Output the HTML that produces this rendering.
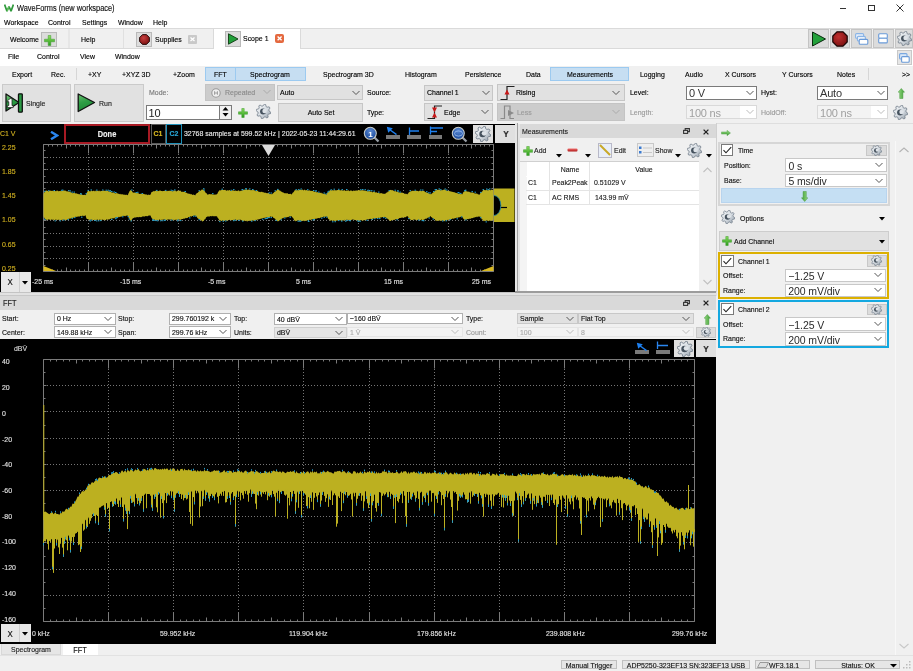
<!DOCTYPE html>
<html><head><meta charset="utf-8"><style>
html,body{margin:0;padding:0;}
body{width:913px;height:671px;position:relative;overflow:hidden;background:#f0f0f0;font-family:"Liberation Sans", sans-serif;}
body>div,body>span,body>svg{position:absolute;}
span{white-space:pre;-webkit-text-stroke:0.15px currentColor;}
body{will-change:transform;}
</style></head><body>
<div style="left:0px;top:0px;width:913px;height:28px;background:#fff;"></div>
<svg style="left:4px;top:4px;" width="10" height="8" viewBox="0 0 10 8"><polyline points="0.6,0.6 3,7.2 5,2.5 7,7.2 9.4,0.6" fill="none" stroke="#2f9a3c" stroke-width="1.7" stroke-linejoin="bevel"/><polyline points="3,7.2 5,2.5" stroke="#7ccf6a" stroke-width="0.8"/></svg>
<span style="left:17px;top:1.7000000000000002px;line-height:12px;font-size:8.5px;color:#111;letter-spacing:0px;transform:scaleX(0.87);transform-origin:0 50%;">WaveForms (new workspace)</span>
<div style="left:840px;top:8px;width:6px;height:1px;background:#333;"></div>
<div style="left:868px;top:4.5px;width:7px;height:6.5px;box-sizing:border-box;border:1px solid #333;"></div>
<svg style="left:896px;top:4px;" width="9" height="8" viewBox="0 0 9 8"><path d="M0.5,0.5 L7.5,7.5 M7.5,0.5 L0.5,7.5" stroke="#333" stroke-width="1"/></svg>
<span style="left:3.5px;top:16.8px;line-height:12px;font-size:8px;color:#000;letter-spacing:0px;transform:scaleX(0.87);transform-origin:0 50%;">Workspace</span>
<span style="left:47.5px;top:16.8px;line-height:12px;font-size:8px;color:#000;letter-spacing:0px;transform:scaleX(0.87);transform-origin:0 50%;">Control</span>
<span style="left:81.5px;top:16.8px;line-height:12px;font-size:8px;color:#000;letter-spacing:0px;transform:scaleX(0.87);transform-origin:0 50%;">Settings</span>
<span style="left:117.5px;top:16.8px;line-height:12px;font-size:8px;color:#000;letter-spacing:0px;transform:scaleX(0.87);transform-origin:0 50%;">Window</span>
<span style="left:152.5px;top:16.8px;line-height:12px;font-size:8px;color:#000;letter-spacing:0px;transform:scaleX(0.87);transform-origin:0 50%;">Help</span>
<div style="left:0px;top:28px;width:913px;height:21px;background:#f0f0f0;box-sizing:border-box;border-top:1px solid #dadada;border-bottom:1px solid #dadada;"></div>
<div style="left:68px;top:29px;width:2px;height:19px;background:#e6e6e6;"></div>
<div style="left:122.5px;top:29px;width:1.0px;height:19px;background:#e0e0e0;"></div>
<span style="left:10px;top:34.0px;line-height:12px;font-size:8px;color:#000;letter-spacing:0px;transform:scaleX(0.87);transform-origin:0 50%;">Welcome</span>
<div style="left:41px;top:32px;width:16px;height:15px;background:#dcdcdc;box-sizing:border-box;border:1px solid #b9b9b9;"></div>
<svg style="left:43.5px;top:34.5px;" width="11" height="11" viewBox="0 0 11 11"><defs><linearGradient id="pg1" x1="0" y1="0" x2="0" y2="1"><stop offset="0" stop-color="#8ee060"/><stop offset="1" stop-color="#2a9a1c"/></linearGradient></defs><path d="M4.2,0.5 H6.8 V4.2 H10.5 V6.8 H6.8 V10.5 H4.2 V6.8 H0.5 V4.2 H4.2 Z" fill="url(#pg1)" stroke="#3a9a2a" stroke-width="0.5"/></svg>
<span style="left:81px;top:34.0px;line-height:12px;font-size:8px;color:#000;letter-spacing:0px;transform:scaleX(0.87);transform-origin:0 50%;">Help</span>
<div style="left:136px;top:31.5px;width:16px;height:15.5px;background:#dcdcdc;box-sizing:border-box;border:1px solid #b9b9b9;"></div>
<svg style="left:138.5px;top:34px;" width="11" height="11" viewBox="0 0 11 11"><defs><radialGradient id="supg" cx="0.4" cy="0.35" r="0.7"><stop offset="0" stop-color="#c84040"/><stop offset="1" stop-color="#7a1010"/></radialGradient></defs><polygon points="3.5,0.6 7.5,0.6 10.4,3.5 10.4,7.5 7.5,10.4 3.5,10.4 0.6,7.5 0.6,3.5" fill="url(#supg)" stroke="#1a0505" stroke-width="0.9"/></svg>
<span style="left:155px;top:34.0px;line-height:12px;font-size:8px;color:#000;letter-spacing:0px;transform:scaleX(0.87);transform-origin:0 50%;">Supplies</span>
<div style="left:188px;top:35px;width:9px;height:8.5px;background:#c9c9c9;border-radius:1px;"></div>
<svg style="left:188px;top:35px;" width="9" height="8.5" viewBox="0 0 9 8.5"><path d="M2.5,2.5 L6.5,6 M6.5,2.5 L2.5,6" stroke="#fff" stroke-width="1.3"/></svg>
<div style="left:213px;top:28px;width:88px;height:21px;background:#fff;box-sizing:border-box;border-top:1px solid #dadada;border-left:1px solid #dadada;border-right:1px solid #dadada;"></div>
<div style="left:214px;top:48px;width:86px;height:2px;background:#fff;"></div>
<div style="left:225px;top:31px;width:15.5px;height:15.5px;background:#dcdcdc;box-sizing:border-box;border:1px solid #b9b9b9;"></div>
<svg style="left:227px;top:33px;" width="12" height="12" viewBox="0 0 12 12"><polygon points="1.5,0.8 11,6 1.5,11.2" fill="#22a03a" stroke="#0d3a12" stroke-width="0.9"/></svg>
<span style="left:243px;top:33.2px;line-height:12px;font-size:8px;color:#000;letter-spacing:0px;transform:scaleX(0.87);transform-origin:0 50%;">Scope 1</span>
<div style="left:275.3px;top:34px;width:9.199999999999989px;height:8.600000000000001px;background:#e4693f;border-radius:2px;"></div>
<svg style="left:275.3px;top:34px;" width="9.2" height="8.6" viewBox="0 0 9.2 8.6"><path d="M2.6,2.4 L6.6,6.2 M6.6,2.4 L2.6,6.2" stroke="#fff" stroke-width="1.4"/></svg>
<div style="left:808px;top:29px;width:21px;height:19px;background:#dcdcdc;box-sizing:border-box;border:1px solid #c4c4c4;"></div>
<svg style="left:811px;top:31px;" width="16" height="16" viewBox="0 0 16 16"><polygon points="1.5,1 14.5,8 1.5,15" fill="#22a03a" stroke="#0a2a0e" stroke-width="1"/></svg>
<div style="left:830px;top:29px;width:20px;height:19px;background:#dcdcdc;box-sizing:border-box;border:1px solid #c4c4c4;"></div>
<svg style="left:832px;top:31px;" width="16" height="16" viewBox="0 0 16 16"><defs><radialGradient id="stopg" cx="0.4" cy="0.35" r="0.7"><stop offset="0" stop-color="#c03030"/><stop offset="1" stop-color="#7a1010"/></radialGradient></defs><polygon points="5,0.8 11,0.8 15.2,5 15.2,11 11,15.2 5,15.2 0.8,11 0.8,5" fill="url(#stopg)" stroke="#1a0505" stroke-width="1.2"/></svg>
<div style="left:851px;top:29px;width:21px;height:19px;background:#dcdcdc;box-sizing:border-box;border:1px solid #c4c4c4;"></div>
<svg style="left:855px;top:33px;" width="14" height="12" viewBox="0 0 14 12"><rect x="0.6" y="0.6" width="8" height="4.6" rx="1" fill="#e8f0fa" stroke="#8ab4e6" stroke-width="1.1"/><rect x="2.4" y="3.4" width="8" height="4.6" rx="1" fill="#e8f0fa" stroke="#8ab4e6" stroke-width="1.1"/><rect x="4.2" y="6.4" width="8.6" height="4.8" rx="1" fill="#fff" stroke="#6a9ad8" stroke-width="1.1"/></svg>
<div style="left:873px;top:29px;width:21px;height:19px;background:#dcdcdc;box-sizing:border-box;border:1px solid #c4c4c4;"></div>
<svg style="left:877.5px;top:33px;" width="10" height="11" viewBox="0 0 10 11"><rect x="0.7" y="0.7" width="8.6" height="4.6" rx="1" fill="#fff" stroke="#6a9ad8" stroke-width="1.1"/><rect x="0.7" y="5.3" width="8.6" height="4.6" rx="1" fill="#fff" stroke="#6a9ad8" stroke-width="1.1"/></svg>
<div style="left:895px;top:29px;width:18px;height:19px;background:#dcdcdc;box-sizing:border-box;border:1px solid #c4c4c4;"></div>
<svg style="left:897px;top:31px;" width="15" height="15" viewBox="0 0 15 15"><defs><linearGradient id="gg1" x1="0" y1="0" x2="1" y2="1"><stop offset="0" stop-color="#f6f8fa"/><stop offset="0.55" stop-color="#d4dae0"/><stop offset="1" stop-color="#8a96a2"/></linearGradient></defs><polygon points="14.81,8.22 14.53,9.63 12.39,10.12 11.79,11.02 12.16,13.18 10.96,13.98 9.11,12.81 8.04,13.02 6.78,14.81 5.37,14.53 4.88,12.39 3.98,11.79 1.82,12.16 1.02,10.96 2.19,9.11 1.98,8.04 0.19,6.78 0.47,5.37 2.61,4.88 3.21,3.98 2.84,1.82 4.04,1.02 5.89,2.19 6.96,1.98 8.22,0.19 9.63,0.47 10.12,2.61 11.02,3.21 13.18,2.84 13.98,4.04 12.81,5.89 13.02,6.96" fill="url(#gg1)" stroke="#74808c" stroke-width="0.82" stroke-linejoin="round"/><circle cx="7.05" cy="7.50" r="3.00" fill="#46525e"/><circle cx="8.55" cy="6.90" r="2.25" fill="#dfe4e9"/></svg>
<div style="left:0px;top:49px;width:913px;height:17px;background:#fff;"></div>
<span style="left:7.5px;top:51.2px;line-height:12px;font-size:8px;color:#000;letter-spacing:0px;transform:scaleX(0.87);transform-origin:0 50%;">File</span>
<span style="left:37px;top:51.2px;line-height:12px;font-size:8px;color:#000;letter-spacing:0px;transform:scaleX(0.87);transform-origin:0 50%;">Control</span>
<span style="left:80px;top:51.2px;line-height:12px;font-size:8px;color:#000;letter-spacing:0px;transform:scaleX(0.87);transform-origin:0 50%;">View</span>
<span style="left:115px;top:51.2px;line-height:12px;font-size:8px;color:#000;letter-spacing:0px;transform:scaleX(0.87);transform-origin:0 50%;">Window</span>
<div style="left:896.5px;top:50px;width:15.0px;height:14.5px;background:#e6e6e6;box-sizing:border-box;border:1px solid #c8c8c8;"></div>
<svg style="left:898.5px;top:52.5px;" width="11" height="10" viewBox="0 0 11 10"><rect x="0.6" y="0.6" width="7.4" height="5.4" rx="1" fill="#dbe8f7" stroke="#7aa8e0" stroke-width="1.1"/><rect x="2.6" y="3.6" width="7.6" height="5.6" rx="1" fill="#fff" stroke="#6a9ad8" stroke-width="1.1"/></svg>
<div style="left:0px;top:66px;width:913px;height:16px;background:#f0f0f0;border-bottom:1px solid #e0e0e0;"></div>
<div style="left:205px;top:67px;width:30.80000000000001px;height:13.599999999999994px;background:#c6def2;box-sizing:border-box;border:1px solid #9ccaf0;"></div>
<div style="left:235px;top:67px;width:71px;height:13.599999999999994px;background:#c6def2;box-sizing:border-box;border:1px solid #9ccaf0;"></div>
<div style="left:550px;top:67px;width:79px;height:13.599999999999994px;background:#c6def2;box-sizing:border-box;border:1px solid #9ccaf0;"></div>
<div style="left:76px;top:68px;width:1px;height:12px;background:#d6d6d6;"></div>
<div style="left:868px;top:68px;width:1px;height:12px;background:#d6d6d6;"></div>
<span style="left:11.5px;top:68.7px;line-height:12px;font-size:8px;color:#000;letter-spacing:0px;transform:scaleX(0.87);transform-origin:0 50%;">Export</span>
<span style="left:51px;top:68.7px;line-height:12px;font-size:8px;color:#000;letter-spacing:0px;transform:scaleX(0.87);transform-origin:0 50%;">Rec.</span>
<span style="left:88px;top:68.7px;line-height:12px;font-size:8px;color:#000;letter-spacing:0px;transform:scaleX(0.87);transform-origin:0 50%;">+XY</span>
<span style="left:121.6px;top:68.7px;line-height:12px;font-size:8px;color:#000;letter-spacing:0px;transform:scaleX(0.87);transform-origin:0 50%;">+XYZ 3D</span>
<span style="left:172.5px;top:68.7px;line-height:12px;font-size:8px;color:#000;letter-spacing:0px;transform:scaleX(0.87);transform-origin:0 50%;">+Zoom</span>
<span style="left:213.6px;top:68.7px;line-height:12px;font-size:8px;color:#000;letter-spacing:0px;transform:scaleX(0.87);transform-origin:0 50%;">FFT</span>
<span style="left:250px;top:68.7px;line-height:12px;font-size:8px;color:#000;letter-spacing:0px;transform:scaleX(0.87);transform-origin:0 50%;">Spectrogram</span>
<span style="left:323px;top:68.7px;line-height:12px;font-size:8px;color:#000;letter-spacing:0px;transform:scaleX(0.87);transform-origin:0 50%;">Spectrogram 3D</span>
<span style="left:405px;top:68.7px;line-height:12px;font-size:8px;color:#000;letter-spacing:0px;transform:scaleX(0.87);transform-origin:0 50%;">Histogram</span>
<span style="left:464.6px;top:68.7px;line-height:12px;font-size:8px;color:#000;letter-spacing:0px;transform:scaleX(0.87);transform-origin:0 50%;">Persistence</span>
<span style="left:525.6px;top:68.7px;line-height:12px;font-size:8px;color:#000;letter-spacing:0px;transform:scaleX(0.87);transform-origin:0 50%;">Data</span>
<span style="left:566.7px;top:68.7px;line-height:12px;font-size:8px;color:#000;letter-spacing:0px;transform:scaleX(0.87);transform-origin:0 50%;">Measurements</span>
<span style="left:640px;top:68.7px;line-height:12px;font-size:8px;color:#000;letter-spacing:0px;transform:scaleX(0.87);transform-origin:0 50%;">Logging</span>
<span style="left:684.6px;top:68.7px;line-height:12px;font-size:8px;color:#000;letter-spacing:0px;transform:scaleX(0.87);transform-origin:0 50%;">Audio</span>
<span style="left:724.7px;top:68.7px;line-height:12px;font-size:8px;color:#000;letter-spacing:0px;transform:scaleX(0.87);transform-origin:0 50%;">X Cursors</span>
<span style="left:782px;top:68.7px;line-height:12px;font-size:8px;color:#000;letter-spacing:0px;transform:scaleX(0.87);transform-origin:0 50%;">Y Cursors</span>
<span style="left:836.5px;top:68.7px;line-height:12px;font-size:8px;color:#000;letter-spacing:0px;transform:scaleX(0.87);transform-origin:0 50%;">Notes</span>
<span style="left:902px;top:68.7px;line-height:12px;font-size:8px;color:#000;letter-spacing:0px;transform:scaleX(0.87);transform-origin:0 50%;">&gt;&gt;</span>
<div style="left:0px;top:82px;width:913px;height:41px;background:#f0f0f0;"></div>
<div style="left:2px;top:84px;width:69px;height:37.5px;background:#e1e1e1;box-sizing:border-box;border:1px solid #cacaca;"></div>
<svg style="left:5px;top:93px;" width="18" height="20" viewBox="0 0 18 20"><defs><linearGradient id="sg1" x1="0" y1="0" x2="0.3" y2="1"><stop offset="0" stop-color="#8ed08a"/><stop offset="0.45" stop-color="#2f9e46"/><stop offset="1" stop-color="#1d8a36"/></linearGradient></defs><polygon points="1,1 14,9.5 1,18" fill="url(#sg1)" stroke="#111" stroke-width="1.3" stroke-linejoin="round"/><rect x="13.5" y="0.8" width="3.8" height="18.4" rx="0.8" fill="#2a9a44" stroke="#111" stroke-width="1.3"/><path d="M2.6,7.6 L5.2,5.6 H7 V12.6 H8.2 V14.6 H2.4 V12.6 H3.8 V8.6 L2.6,9.2 Z" fill="#fff" stroke="#111" stroke-width="0.7"/></svg>
<span style="left:26px;top:98.0px;line-height:12px;font-size:8px;color:#222;letter-spacing:0px;transform:scaleX(0.87);transform-origin:0 50%;">Single</span>
<div style="left:74px;top:84px;width:70px;height:37.5px;background:#e1e1e1;box-sizing:border-box;border:1px solid #cacaca;"></div>
<svg style="left:77px;top:93px;" width="19" height="20" viewBox="0 0 19 20"><defs><linearGradient id="sg2" x1="0" y1="0" x2="0.3" y2="1"><stop offset="0" stop-color="#6cc070"/><stop offset="0.5" stop-color="#2f9e46"/><stop offset="1" stop-color="#1d8a36"/></linearGradient></defs><polygon points="1.2,1 17.5,9.5 1.2,18.5" fill="url(#sg2)" stroke="#111" stroke-width="1.3" stroke-linejoin="round"/></svg>
<span style="left:99px;top:98.0px;line-height:12px;font-size:8px;color:#222;letter-spacing:0px;transform:scaleX(0.87);transform-origin:0 50%;">Run</span>
<span style="left:148.6px;top:86.8px;line-height:12px;font-size:8px;color:#777;letter-spacing:0px;transform:scaleX(0.87);transform-origin:0 50%;">Mode:</span>
<div style="left:205px;top:84px;width:70px;height:16.5px;background:#cccccc;box-sizing:border-box;border:1px solid #c4c4c4;"></div>
<svg style="left:210.5px;top:87.5px;" width="11" height="11" viewBox="0 0 11 11"><circle cx="5" cy="5" r="4.2" fill="#f0f0f0" stroke="#9a9a9a" stroke-width="1.1"/><path d="M3.6,3.2 V6.8 M6.4,3.2 V6.8 M3.6,5 H6.4" stroke="#8a8a8a" stroke-width="0.8"/></svg>
<span style="left:225px;top:86.8px;line-height:12px;font-size:8px;color:#8a8a8a;letter-spacing:0px;transform:scaleX(0.87);transform-origin:0 50%;">Repeated</span>
<svg style="left:263px;top:89.3px;" width="8" height="6" viewBox="0 0 8 6"><polyline points="0.5,1 4.0,4.5 7.5,1" fill="none" stroke="#aaa" stroke-width="1"/></svg>
<div style="left:146px;top:104.5px;width:73.5px;height:15.5px;background:#fff;box-sizing:border-box;border:1px solid #7a7a7a;"></div>
<span style="left:148.5px;top:106.8px;line-height:12px;font-size:11px;color:#222;letter-spacing:-0.2px;-webkit-text-stroke:0;">10</span>
<div style="left:219.5px;top:104.5px;width:12.199999999999989px;height:15.5px;background:#f0f0f0;box-sizing:border-box;border:1px solid #7a7a7a;border-left:none;"></div>
<svg style="left:221px;top:106px;" width="9" height="12" viewBox="0 0 9 12"><polygon points="1.5,4.5 7.5,4.5 4.5,1" fill="#000"/><polygon points="1.5,7 7.5,7 4.5,10.5" fill="#000"/></svg>
<svg style="left:237.5px;top:107.5px;" width="10" height="10" viewBox="0 0 10 10"><defs><linearGradient id="pg2" x1="0" y1="0" x2="0" y2="1"><stop offset="0" stop-color="#8ee060"/><stop offset="1" stop-color="#2a9a1c"/></linearGradient></defs><path d="M3.8,0.5 H6.2 V3.8 H9.5 V6.2 H6.2 V9.5 H3.8 V6.2 H0.5 V3.8 H3.8 Z" fill="url(#pg2)" stroke="#3a9a2a" stroke-width="0.5"/></svg>
<svg style="left:256px;top:104px;" width="15" height="15" viewBox="0 0 15 15"><defs><linearGradient id="gg2" x1="0" y1="0" x2="1" y2="1"><stop offset="0" stop-color="#f6f8fa"/><stop offset="0.55" stop-color="#d4dae0"/><stop offset="1" stop-color="#8a96a2"/></linearGradient></defs><polygon points="14.81,8.22 14.53,9.63 12.39,10.12 11.79,11.02 12.16,13.18 10.96,13.98 9.11,12.81 8.04,13.02 6.78,14.81 5.37,14.53 4.88,12.39 3.98,11.79 1.82,12.16 1.02,10.96 2.19,9.11 1.98,8.04 0.19,6.78 0.47,5.37 2.61,4.88 3.21,3.98 2.84,1.82 4.04,1.02 5.89,2.19 6.96,1.98 8.22,0.19 9.63,0.47 10.12,2.61 11.02,3.21 13.18,2.84 13.98,4.04 12.81,5.89 13.02,6.96" fill="url(#gg2)" stroke="#74808c" stroke-width="0.82" stroke-linejoin="round"/><circle cx="7.05" cy="7.50" r="3.00" fill="#46525e"/><circle cx="8.55" cy="6.90" r="2.25" fill="#dfe4e9"/></svg>
<div style="left:277px;top:85px;width:86px;height:15px;background:#e1e1e1;box-sizing:border-box;border:1px solid #c6c6c6;"></div>
<span style="left:280px;top:87.0px;line-height:12px;font-size:8px;color:#000;letter-spacing:0px;transform:scaleX(0.87);transform-origin:0 50%;">Auto</span>
<svg style="left:352px;top:89.5px;" width="8" height="6" viewBox="0 0 8 6"><polyline points="0.5,1 4.0,4.5 7.5,1" fill="none" stroke="#555" stroke-width="1"/></svg>
<div style="left:278px;top:103px;width:85px;height:18.599999999999994px;background:#e1e1e1;box-sizing:border-box;border:1px solid #c6c6c6;"></div>
<span style="left:220.5px;width:200px;text-align:center;top:106.8px;line-height:12px;font-size:8px;color:#000;letter-spacing:0px;transform:scaleX(0.87);transform-origin:50% 50%;">Auto Set</span>
<span style="left:367px;top:86.8px;line-height:12px;font-size:8px;color:#000;letter-spacing:0px;transform:scaleX(0.87);transform-origin:0 50%;">Source:</span>
<span style="left:367px;top:106.8px;line-height:12px;font-size:8px;color:#000;letter-spacing:0px;transform:scaleX(0.87);transform-origin:0 50%;">Type:</span>
<div style="left:424px;top:85px;width:69px;height:15.5px;background:#e1e1e1;box-sizing:border-box;border:1px solid #c6c6c6;"></div>
<span style="left:427px;top:87.25px;line-height:12px;font-size:8px;color:#000;letter-spacing:0px;transform:scaleX(0.87);transform-origin:0 50%;">Channel 1</span>
<svg style="left:482px;top:89.75px;" width="8" height="6" viewBox="0 0 8 6"><polyline points="0.5,1 4.0,4.5 7.5,1" fill="none" stroke="#555" stroke-width="1"/></svg>
<div style="left:424px;top:103px;width:69px;height:18px;background:#e1e1e1;box-sizing:border-box;border:1px solid #c6c6c6;"></div>
<svg style="left:427px;top:104px;" width="18" height="16" viewBox="0 0 18 16"><path d="M0.5,14.5 H7.5 V2 H15" fill="none" stroke="#222" stroke-width="1.2"/><polygon points="5,3.5 10,3.5 7.5,8.5" fill="#c81818"/><polygon points="5,13.5 10,13.5 7.5,8.5" fill="#c81818"/></svg>
<span style="left:444px;top:106.8px;line-height:12px;font-size:8px;color:#000;letter-spacing:0px;transform:scaleX(0.87);transform-origin:0 50%;">Edge</span>
<svg style="left:481px;top:109px;" width="8" height="6" viewBox="0 0 8 6"><polyline points="0.5,1 4.0,4.5 7.5,1" fill="none" stroke="#555" stroke-width="1"/></svg>
<div style="left:497px;top:84px;width:128px;height:17px;background:#e1e1e1;box-sizing:border-box;border:1px solid #c6c6c6;"></div>
<svg style="left:499.5px;top:85px;" width="18" height="16" viewBox="0 0 18 16"><path d="M0.5,14.5 H7 V1.5 H14.5" fill="none" stroke="#222" stroke-width="1.2"/><polygon points="4.5,9.5 9.5,9.5 7,4.5" fill="#c81818"/></svg>
<span style="left:516px;top:86.8px;line-height:12px;font-size:8px;color:#000;letter-spacing:0px;transform:scaleX(0.87);transform-origin:0 50%;">Rising</span>
<svg style="left:612px;top:89.5px;" width="8" height="6" viewBox="0 0 8 6"><polyline points="0.5,1 4.0,4.5 7.5,1" fill="none" stroke="#555" stroke-width="1"/></svg>
<div style="left:497px;top:103px;width:128px;height:18px;background:#cccccc;box-sizing:border-box;border:1px solid #c4c4c4;"></div>
<svg style="left:499.5px;top:104px;" width="18" height="16" viewBox="0 0 18 16"><path d="M0.5,14.5 H4.5 V2 H10 V14.5 H14" fill="none" stroke="#8a8a8a" stroke-width="1.2"/><polygon points="8,6 14,9 8,12" fill="#8a8a8a"/></svg>
<span style="left:517px;top:106.8px;line-height:12px;font-size:8px;color:#9a9a9a;letter-spacing:0px;transform:scaleX(0.87);transform-origin:0 50%;">Less</span>
<svg style="left:612px;top:109px;" width="8" height="6" viewBox="0 0 8 6"><polyline points="0.5,1 4.0,4.5 7.5,1" fill="none" stroke="#aaa" stroke-width="1"/></svg>
<span style="left:630px;top:86.8px;line-height:12px;font-size:8px;color:#000;letter-spacing:0px;transform:scaleX(0.87);transform-origin:0 50%;">Level:</span>
<span style="left:630px;top:106.8px;line-height:12px;font-size:8px;color:#999;letter-spacing:0px;transform:scaleX(0.87);transform-origin:0 50%;">Length:</span>
<div style="left:686px;top:85.5px;width:70.5px;height:14.0px;background:#fff;box-sizing:border-box;border:1px solid #7a7a7a;"></div>
<span style="left:689px;top:87.0px;line-height:12px;font-size:11px;color:#333;letter-spacing:-0.2px;-webkit-text-stroke:0;">0 V</span>
<svg style="left:745.5px;top:89.5px;" width="8" height="6" viewBox="0 0 8 6"><polyline points="0.5,1 4.0,4.5 7.5,1" fill="none" stroke="#555" stroke-width="1"/></svg>
<div style="left:686px;top:104.8px;width:70.5px;height:14.600000000000009px;background:#fff;box-sizing:border-box;border:1px solid #d9d9d9;"></div>
<svg style="left:745.5px;top:109.1px;" width="8" height="6" viewBox="0 0 8 6"><polyline points="0.5,1 4.0,4.5 7.5,1" fill="none" stroke="#bbb" stroke-width="1"/></svg>
<div style="left:687px;top:105.8px;width:53px;height:12.600000000000009px;background:#f3f3f3;"></div>
<span style="left:689px;top:106.7px;line-height:12px;font-size:11px;color:#a0a0a0;letter-spacing:-0.2px;-webkit-text-stroke:0;">100 ns</span>
<span style="left:761px;top:86.8px;line-height:12px;font-size:8px;color:#000;letter-spacing:0px;transform:scaleX(0.87);transform-origin:0 50%;">Hyst:</span>
<span style="left:761px;top:106.8px;line-height:12px;font-size:8px;color:#999;letter-spacing:0px;transform:scaleX(0.87);transform-origin:0 50%;">HoldOff:</span>
<div style="left:817px;top:85.5px;width:71px;height:14.0px;background:#fff;box-sizing:border-box;border:1px solid #7a7a7a;"></div>
<span style="left:820px;top:87.0px;line-height:12px;font-size:11px;color:#333;letter-spacing:-0.2px;-webkit-text-stroke:0;">Auto</span>
<svg style="left:877px;top:89.5px;" width="8" height="6" viewBox="0 0 8 6"><polyline points="0.5,1 4.0,4.5 7.5,1" fill="none" stroke="#555" stroke-width="1"/></svg>
<div style="left:817px;top:104.8px;width:71px;height:14.600000000000009px;background:#fff;box-sizing:border-box;border:1px solid #d9d9d9;"></div>
<svg style="left:877px;top:109.1px;" width="8" height="6" viewBox="0 0 8 6"><polyline points="0.5,1 4.0,4.5 7.5,1" fill="none" stroke="#bbb" stroke-width="1"/></svg>
<div style="left:818px;top:105.8px;width:53px;height:12.600000000000009px;background:#f3f3f3;"></div>
<span style="left:820px;top:106.7px;line-height:12px;font-size:11px;color:#a0a0a0;letter-spacing:-0.2px;-webkit-text-stroke:0;">100 ns</span>
<svg style="left:897.5px;top:87.5px;" width="7" height="11" viewBox="0 0 7 11"><defs><linearGradient id="ua1" x1="0" y1="0" x2="1" y2="0"><stop offset="0" stop-color="#9ee08a"/><stop offset="1" stop-color="#3a9a30"/></linearGradient></defs><path d="M3,0.5 L6.2,4.2 H4.6 V10.5 H1.4 V4.2 H-0.2 Z" transform="translate(0.3,0)" fill="url(#ua1)" stroke="#4a9a40" stroke-width="0.5"/></svg>
<svg style="left:893px;top:105px;" width="15" height="15" viewBox="0 0 15 15"><defs><linearGradient id="gg3" x1="0" y1="0" x2="1" y2="1"><stop offset="0" stop-color="#f6f8fa"/><stop offset="0.55" stop-color="#d4dae0"/><stop offset="1" stop-color="#8a96a2"/></linearGradient></defs><polygon points="14.81,8.22 14.53,9.63 12.39,10.12 11.79,11.02 12.16,13.18 10.96,13.98 9.11,12.81 8.04,13.02 6.78,14.81 5.37,14.53 4.88,12.39 3.98,11.79 1.82,12.16 1.02,10.96 2.19,9.11 1.98,8.04 0.19,6.78 0.47,5.37 2.61,4.88 3.21,3.98 2.84,1.82 4.04,1.02 5.89,2.19 6.96,1.98 8.22,0.19 9.63,0.47 10.12,2.61 11.02,3.21 13.18,2.84 13.98,4.04 12.81,5.89 13.02,6.96" fill="url(#gg3)" stroke="#74808c" stroke-width="0.82" stroke-linejoin="round"/><circle cx="7.05" cy="7.50" r="3.00" fill="#46525e"/><circle cx="8.55" cy="6.90" r="2.25" fill="#dfe4e9"/></svg>
<div style="left:0px;top:123.5px;width:515px;height:168.0px;background:#000;"></div>
<div style="left:515px;top:123px;width:3px;height:169px;background:#e6e6e6;"></div>
<div style="left:517px;top:123px;width:1px;height:169px;background:#a0a0a0;"></div>
<div style="left:64px;top:124px;width:86px;height:19.5px;box-sizing:border-box;border:2px solid #a81a24;background:#000;"></div>
<span style="left:7.0px;width:200px;text-align:center;top:128.0px;line-height:12px;font-size:8.5px;color:#f0f0f0;letter-spacing:0px;transform:scaleX(0.87);transform-origin:50% 50%;font-weight:bold;">Done</span>
<div style="left:150.5px;top:124px;width:15.0px;height:19.5px;box-sizing:border-box;border:1px solid #5a5a5a;"></div>
<span style="left:58.0px;width:200px;text-align:center;top:128.0px;line-height:12px;font-size:8px;color:#d8b820;letter-spacing:0px;transform:scaleX(0.87);transform-origin:50% 50%;font-weight:bold;">C1</span>
<div style="left:166px;top:124px;width:15.5px;height:19.5px;box-sizing:border-box;border:1px solid #1d8fb8;"></div>
<span style="left:73.80000000000001px;width:200px;text-align:center;top:128.0px;line-height:12px;font-size:8px;color:#29a8d8;letter-spacing:0px;transform:scaleX(0.87);transform-origin:50% 50%;font-weight:bold;">C2</span>
<span style="left:184px;top:127.80000000000001px;line-height:12px;font-size:8px;color:#e8e8e8;letter-spacing:0px;transform:scaleX(0.87);transform-origin:0 50%;">32768 samples at 599.52 kHz | 2022-05-23 11:44:29.61</span>
<svg style="left:49px;top:131px;" width="10" height="9" viewBox="0 0 10 9"><polyline points="2,0.8 8,4.5 2,8.2" fill="none" stroke="#2a86f0" stroke-width="2.4"/></svg>
<span style="left:0px;top:127.80000000000001px;line-height:12px;font-size:8px;color:#d0b020;letter-spacing:0px;transform:scaleX(0.87);transform-origin:0 50%;">C1 V</span>
<svg style="left:363px;top:125.5px;" width="17" height="17" viewBox="0 0 17 17"><defs><radialGradient id="mgr363" cx="0.5" cy="0.3" r="0.7"><stop offset="0" stop-color="#5a88d0"/><stop offset="1" stop-color="#17479a"/></radialGradient></defs><line x1="11" y1="11" x2="15.5" y2="15.5" stroke="#9aa0a8" stroke-width="2.2"/><circle cx="7.3" cy="7.3" r="6" fill="url(#mgr363)" stroke="#c8ccc8" stroke-width="1.1"/><text x="5.2" y="10.6" font-size="8" font-family="Liberation Sans" font-weight="bold" fill="#fff">1</text></svg>
<svg style="left:451px;top:125.5px;" width="17" height="17" viewBox="0 0 17 17"><defs><radialGradient id="mgr451" cx="0.5" cy="0.3" r="0.7"><stop offset="0" stop-color="#5a88d0"/><stop offset="1" stop-color="#17479a"/></radialGradient></defs><line x1="11" y1="11" x2="15.5" y2="15.5" stroke="#9aa0a8" stroke-width="2.2"/><circle cx="7.3" cy="7.3" r="6" fill="url(#mgr451)" stroke="#c8ccc8" stroke-width="1.1"/><ellipse cx="7.5" cy="7.5" rx="4" ry="2.6" fill="none" stroke="#9ec0f0" stroke-width="0.8"/></svg>
<div style="left:386px;top:134.5px;width:13.5px;height:4.0px;background:#7a7a7a;"></div>
<div style="left:407px;top:134.5px;width:13.5px;height:4.0px;background:#7a7a7a;"></div>
<div style="left:428.5px;top:134.5px;width:13.5px;height:4.0px;background:#7a7a7a;"></div>
<svg style="left:386px;top:126px;" width="14" height="9" viewBox="0 0 14 9"><polygon points="0.8,0.8 6.8,2.2 2.2,6.8" fill="#1e80f0"/><path d="M3.5,3.5 L10.5,8.5" stroke="#1e80f0" stroke-width="1.5"/></svg>
<svg style="left:407.5px;top:126.5px;" width="14" height="9" viewBox="0 0 14 9"><path d="M1.5,0.5 V8 M1.5,4 H11" stroke="#1e80f0" stroke-width="1.3" fill="none"/></svg>
<svg style="left:428.5px;top:126px;" width="16" height="9" viewBox="0 0 16 9"><path d="M1.5,0.5 V8.5 M1.5,2 H14 M1.5,5.5 H8" stroke="#1e80f0" stroke-width="1.3" fill="none"/></svg>
<div style="left:472.7px;top:124.7px;width:20.19999999999999px;height:18.10000000000001px;background:#e0e0e0;"></div>
<svg style="left:475px;top:126px;" width="16" height="16" viewBox="0 0 16 16"><defs><linearGradient id="gg4" x1="0" y1="0" x2="1" y2="1"><stop offset="0" stop-color="#f6f8fa"/><stop offset="0.55" stop-color="#d4dae0"/><stop offset="1" stop-color="#8a96a2"/></linearGradient></defs><polygon points="15.80,8.77 15.50,10.28 13.22,10.79 12.58,11.76 12.97,14.06 11.70,14.91 9.72,13.67 8.58,13.89 7.23,15.80 5.72,15.50 5.21,13.22 4.24,12.58 1.94,12.97 1.09,11.70 2.33,9.72 2.11,8.58 0.20,7.23 0.50,5.72 2.78,5.21 3.42,4.24 3.03,1.94 4.30,1.09 6.28,2.33 7.42,2.11 8.77,0.20 10.28,0.50 10.79,2.78 11.76,3.42 14.06,3.03 14.91,4.30 13.67,6.28 13.89,7.42" fill="url(#gg4)" stroke="#74808c" stroke-width="0.88" stroke-linejoin="round"/><circle cx="7.52" cy="8.00" r="3.20" fill="#46525e"/><circle cx="9.12" cy="7.36" r="2.40" fill="#dfe4e9"/></svg>
<div style="left:494.6px;top:124.5px;width:20.600000000000023px;height:18.5px;background:#e0e0e0;"></div>
<span style="left:405.5px;width:200px;text-align:center;top:128.3px;line-height:12px;font-size:9px;color:#111;letter-spacing:0px;transform:scaleX(0.87);transform-origin:50% 50%;font-weight:bold;">Y</span>
<svg style="left:0px;top:124px;" width="516" height="168" viewBox="0 0 516 168"><g transform="translate(0,-124)"><line x1="88.5" y1="145" x2="88.5" y2="271.5" stroke="#767676" stroke-width="1" stroke-dasharray="1,2"/><line x1="133.5" y1="145" x2="133.5" y2="271.5" stroke="#767676" stroke-width="1" stroke-dasharray="1,2"/><line x1="178.5" y1="145" x2="178.5" y2="271.5" stroke="#767676" stroke-width="1" stroke-dasharray="1,2"/><line x1="223.5" y1="145" x2="223.5" y2="271.5" stroke="#767676" stroke-width="1" stroke-dasharray="1,2"/><line x1="268.5" y1="145" x2="268.5" y2="271.5" stroke="#767676" stroke-width="1" stroke-dasharray="1,2"/><line x1="313.5" y1="145" x2="313.5" y2="271.5" stroke="#767676" stroke-width="1" stroke-dasharray="1,2"/><line x1="358.5" y1="145" x2="358.5" y2="271.5" stroke="#767676" stroke-width="1" stroke-dasharray="1,2"/><line x1="403.5" y1="145" x2="403.5" y2="271.5" stroke="#767676" stroke-width="1" stroke-dasharray="1,2"/><line x1="448.5" y1="145" x2="448.5" y2="271.5" stroke="#767676" stroke-width="1" stroke-dasharray="1,2"/><line x1="44" y1="157.5" x2="493.5" y2="157.5" stroke="#767676" stroke-width="1" stroke-dasharray="1,2"/><line x1="44" y1="169.5" x2="493.5" y2="169.5" stroke="#767676" stroke-width="1" stroke-dasharray="1,2"/><line x1="44" y1="182.5" x2="493.5" y2="182.5" stroke="#767676" stroke-width="1" stroke-dasharray="1,2"/><line x1="44" y1="195.5" x2="493.5" y2="195.5" stroke="#767676" stroke-width="1" stroke-dasharray="1,2"/><line x1="44" y1="208.5" x2="493.5" y2="208.5" stroke="#767676" stroke-width="1" stroke-dasharray="1,2"/><line x1="44" y1="220.5" x2="493.5" y2="220.5" stroke="#767676" stroke-width="1" stroke-dasharray="1,2"/><line x1="44" y1="233.5" x2="493.5" y2="233.5" stroke="#767676" stroke-width="1" stroke-dasharray="1,2"/><line x1="44" y1="246.5" x2="493.5" y2="246.5" stroke="#767676" stroke-width="1" stroke-dasharray="1,2"/><line x1="44" y1="258.5" x2="493.5" y2="258.5" stroke="#767676" stroke-width="1" stroke-dasharray="1,2"/><path d="M43.5,271.5 V144.5 H493.5 V271.5 H43.5" fill="none" stroke="#7a7a7a" stroke-width="1"/><line x1="43.5" y1="144.5" x2="43.5" y2="153.5" stroke="#7a7a7a" stroke-width="1"/><line x1="43.5" y1="271.5" x2="43.5" y2="262.5" stroke="#7a7a7a" stroke-width="1"/><line x1="48.5" y1="144.5" x2="48.5" y2="146.5" stroke="#7a7a7a" stroke-width="1"/><line x1="48.5" y1="271.5" x2="48.5" y2="269.5" stroke="#7a7a7a" stroke-width="1"/><line x1="52.5" y1="144.5" x2="52.5" y2="146.5" stroke="#7a7a7a" stroke-width="1"/><line x1="52.5" y1="271.5" x2="52.5" y2="269.5" stroke="#7a7a7a" stroke-width="1"/><line x1="57.5" y1="144.5" x2="57.5" y2="146.5" stroke="#7a7a7a" stroke-width="1"/><line x1="57.5" y1="271.5" x2="57.5" y2="269.5" stroke="#7a7a7a" stroke-width="1"/><line x1="61.5" y1="144.5" x2="61.5" y2="146.5" stroke="#7a7a7a" stroke-width="1"/><line x1="61.5" y1="271.5" x2="61.5" y2="269.5" stroke="#7a7a7a" stroke-width="1"/><line x1="66.5" y1="144.5" x2="66.5" y2="148.5" stroke="#7a7a7a" stroke-width="1"/><line x1="66.5" y1="271.5" x2="66.5" y2="267.5" stroke="#7a7a7a" stroke-width="1"/><line x1="70.5" y1="144.5" x2="70.5" y2="146.5" stroke="#7a7a7a" stroke-width="1"/><line x1="70.5" y1="271.5" x2="70.5" y2="269.5" stroke="#7a7a7a" stroke-width="1"/><line x1="75.5" y1="144.5" x2="75.5" y2="146.5" stroke="#7a7a7a" stroke-width="1"/><line x1="75.5" y1="271.5" x2="75.5" y2="269.5" stroke="#7a7a7a" stroke-width="1"/><line x1="79.5" y1="144.5" x2="79.5" y2="146.5" stroke="#7a7a7a" stroke-width="1"/><line x1="79.5" y1="271.5" x2="79.5" y2="269.5" stroke="#7a7a7a" stroke-width="1"/><line x1="84.5" y1="144.5" x2="84.5" y2="146.5" stroke="#7a7a7a" stroke-width="1"/><line x1="84.5" y1="271.5" x2="84.5" y2="269.5" stroke="#7a7a7a" stroke-width="1"/><line x1="88.5" y1="144.5" x2="88.5" y2="153.5" stroke="#7a7a7a" stroke-width="1"/><line x1="88.5" y1="271.5" x2="88.5" y2="262.5" stroke="#7a7a7a" stroke-width="1"/><line x1="93.5" y1="144.5" x2="93.5" y2="146.5" stroke="#7a7a7a" stroke-width="1"/><line x1="93.5" y1="271.5" x2="93.5" y2="269.5" stroke="#7a7a7a" stroke-width="1"/><line x1="97.5" y1="144.5" x2="97.5" y2="146.5" stroke="#7a7a7a" stroke-width="1"/><line x1="97.5" y1="271.5" x2="97.5" y2="269.5" stroke="#7a7a7a" stroke-width="1"/><line x1="102.5" y1="144.5" x2="102.5" y2="146.5" stroke="#7a7a7a" stroke-width="1"/><line x1="102.5" y1="271.5" x2="102.5" y2="269.5" stroke="#7a7a7a" stroke-width="1"/><line x1="106.5" y1="144.5" x2="106.5" y2="146.5" stroke="#7a7a7a" stroke-width="1"/><line x1="106.5" y1="271.5" x2="106.5" y2="269.5" stroke="#7a7a7a" stroke-width="1"/><line x1="111.5" y1="144.5" x2="111.5" y2="148.5" stroke="#7a7a7a" stroke-width="1"/><line x1="111.5" y1="271.5" x2="111.5" y2="267.5" stroke="#7a7a7a" stroke-width="1"/><line x1="115.5" y1="144.5" x2="115.5" y2="146.5" stroke="#7a7a7a" stroke-width="1"/><line x1="115.5" y1="271.5" x2="115.5" y2="269.5" stroke="#7a7a7a" stroke-width="1"/><line x1="120.5" y1="144.5" x2="120.5" y2="146.5" stroke="#7a7a7a" stroke-width="1"/><line x1="120.5" y1="271.5" x2="120.5" y2="269.5" stroke="#7a7a7a" stroke-width="1"/><line x1="124.5" y1="144.5" x2="124.5" y2="146.5" stroke="#7a7a7a" stroke-width="1"/><line x1="124.5" y1="271.5" x2="124.5" y2="269.5" stroke="#7a7a7a" stroke-width="1"/><line x1="129.5" y1="144.5" x2="129.5" y2="146.5" stroke="#7a7a7a" stroke-width="1"/><line x1="129.5" y1="271.5" x2="129.5" y2="269.5" stroke="#7a7a7a" stroke-width="1"/><line x1="133.5" y1="144.5" x2="133.5" y2="153.5" stroke="#7a7a7a" stroke-width="1"/><line x1="133.5" y1="271.5" x2="133.5" y2="262.5" stroke="#7a7a7a" stroke-width="1"/><line x1="138.5" y1="144.5" x2="138.5" y2="146.5" stroke="#7a7a7a" stroke-width="1"/><line x1="138.5" y1="271.5" x2="138.5" y2="269.5" stroke="#7a7a7a" stroke-width="1"/><line x1="142.5" y1="144.5" x2="142.5" y2="146.5" stroke="#7a7a7a" stroke-width="1"/><line x1="142.5" y1="271.5" x2="142.5" y2="269.5" stroke="#7a7a7a" stroke-width="1"/><line x1="147.5" y1="144.5" x2="147.5" y2="146.5" stroke="#7a7a7a" stroke-width="1"/><line x1="147.5" y1="271.5" x2="147.5" y2="269.5" stroke="#7a7a7a" stroke-width="1"/><line x1="151.5" y1="144.5" x2="151.5" y2="146.5" stroke="#7a7a7a" stroke-width="1"/><line x1="151.5" y1="271.5" x2="151.5" y2="269.5" stroke="#7a7a7a" stroke-width="1"/><line x1="156.5" y1="144.5" x2="156.5" y2="148.5" stroke="#7a7a7a" stroke-width="1"/><line x1="156.5" y1="271.5" x2="156.5" y2="267.5" stroke="#7a7a7a" stroke-width="1"/><line x1="160.5" y1="144.5" x2="160.5" y2="146.5" stroke="#7a7a7a" stroke-width="1"/><line x1="160.5" y1="271.5" x2="160.5" y2="269.5" stroke="#7a7a7a" stroke-width="1"/><line x1="165.5" y1="144.5" x2="165.5" y2="146.5" stroke="#7a7a7a" stroke-width="1"/><line x1="165.5" y1="271.5" x2="165.5" y2="269.5" stroke="#7a7a7a" stroke-width="1"/><line x1="169.5" y1="144.5" x2="169.5" y2="146.5" stroke="#7a7a7a" stroke-width="1"/><line x1="169.5" y1="271.5" x2="169.5" y2="269.5" stroke="#7a7a7a" stroke-width="1"/><line x1="174.5" y1="144.5" x2="174.5" y2="146.5" stroke="#7a7a7a" stroke-width="1"/><line x1="174.5" y1="271.5" x2="174.5" y2="269.5" stroke="#7a7a7a" stroke-width="1"/><line x1="178.5" y1="144.5" x2="178.5" y2="153.5" stroke="#7a7a7a" stroke-width="1"/><line x1="178.5" y1="271.5" x2="178.5" y2="262.5" stroke="#7a7a7a" stroke-width="1"/><line x1="183.5" y1="144.5" x2="183.5" y2="146.5" stroke="#7a7a7a" stroke-width="1"/><line x1="183.5" y1="271.5" x2="183.5" y2="269.5" stroke="#7a7a7a" stroke-width="1"/><line x1="187.5" y1="144.5" x2="187.5" y2="146.5" stroke="#7a7a7a" stroke-width="1"/><line x1="187.5" y1="271.5" x2="187.5" y2="269.5" stroke="#7a7a7a" stroke-width="1"/><line x1="192.5" y1="144.5" x2="192.5" y2="146.5" stroke="#7a7a7a" stroke-width="1"/><line x1="192.5" y1="271.5" x2="192.5" y2="269.5" stroke="#7a7a7a" stroke-width="1"/><line x1="196.5" y1="144.5" x2="196.5" y2="146.5" stroke="#7a7a7a" stroke-width="1"/><line x1="196.5" y1="271.5" x2="196.5" y2="269.5" stroke="#7a7a7a" stroke-width="1"/><line x1="201.5" y1="144.5" x2="201.5" y2="148.5" stroke="#7a7a7a" stroke-width="1"/><line x1="201.5" y1="271.5" x2="201.5" y2="267.5" stroke="#7a7a7a" stroke-width="1"/><line x1="205.5" y1="144.5" x2="205.5" y2="146.5" stroke="#7a7a7a" stroke-width="1"/><line x1="205.5" y1="271.5" x2="205.5" y2="269.5" stroke="#7a7a7a" stroke-width="1"/><line x1="210.5" y1="144.5" x2="210.5" y2="146.5" stroke="#7a7a7a" stroke-width="1"/><line x1="210.5" y1="271.5" x2="210.5" y2="269.5" stroke="#7a7a7a" stroke-width="1"/><line x1="214.5" y1="144.5" x2="214.5" y2="146.5" stroke="#7a7a7a" stroke-width="1"/><line x1="214.5" y1="271.5" x2="214.5" y2="269.5" stroke="#7a7a7a" stroke-width="1"/><line x1="219.5" y1="144.5" x2="219.5" y2="146.5" stroke="#7a7a7a" stroke-width="1"/><line x1="219.5" y1="271.5" x2="219.5" y2="269.5" stroke="#7a7a7a" stroke-width="1"/><line x1="223.5" y1="144.5" x2="223.5" y2="153.5" stroke="#7a7a7a" stroke-width="1"/><line x1="223.5" y1="271.5" x2="223.5" y2="262.5" stroke="#7a7a7a" stroke-width="1"/><line x1="228.5" y1="144.5" x2="228.5" y2="146.5" stroke="#7a7a7a" stroke-width="1"/><line x1="228.5" y1="271.5" x2="228.5" y2="269.5" stroke="#7a7a7a" stroke-width="1"/><line x1="232.5" y1="144.5" x2="232.5" y2="146.5" stroke="#7a7a7a" stroke-width="1"/><line x1="232.5" y1="271.5" x2="232.5" y2="269.5" stroke="#7a7a7a" stroke-width="1"/><line x1="237.5" y1="144.5" x2="237.5" y2="146.5" stroke="#7a7a7a" stroke-width="1"/><line x1="237.5" y1="271.5" x2="237.5" y2="269.5" stroke="#7a7a7a" stroke-width="1"/><line x1="241.5" y1="144.5" x2="241.5" y2="146.5" stroke="#7a7a7a" stroke-width="1"/><line x1="241.5" y1="271.5" x2="241.5" y2="269.5" stroke="#7a7a7a" stroke-width="1"/><line x1="246.5" y1="144.5" x2="246.5" y2="148.5" stroke="#7a7a7a" stroke-width="1"/><line x1="246.5" y1="271.5" x2="246.5" y2="267.5" stroke="#7a7a7a" stroke-width="1"/><line x1="250.5" y1="144.5" x2="250.5" y2="146.5" stroke="#7a7a7a" stroke-width="1"/><line x1="250.5" y1="271.5" x2="250.5" y2="269.5" stroke="#7a7a7a" stroke-width="1"/><line x1="255.5" y1="144.5" x2="255.5" y2="146.5" stroke="#7a7a7a" stroke-width="1"/><line x1="255.5" y1="271.5" x2="255.5" y2="269.5" stroke="#7a7a7a" stroke-width="1"/><line x1="259.5" y1="144.5" x2="259.5" y2="146.5" stroke="#7a7a7a" stroke-width="1"/><line x1="259.5" y1="271.5" x2="259.5" y2="269.5" stroke="#7a7a7a" stroke-width="1"/><line x1="264.5" y1="144.5" x2="264.5" y2="146.5" stroke="#7a7a7a" stroke-width="1"/><line x1="264.5" y1="271.5" x2="264.5" y2="269.5" stroke="#7a7a7a" stroke-width="1"/><line x1="268.5" y1="144.5" x2="268.5" y2="153.5" stroke="#7a7a7a" stroke-width="1"/><line x1="268.5" y1="271.5" x2="268.5" y2="262.5" stroke="#7a7a7a" stroke-width="1"/><line x1="273.5" y1="144.5" x2="273.5" y2="146.5" stroke="#7a7a7a" stroke-width="1"/><line x1="273.5" y1="271.5" x2="273.5" y2="269.5" stroke="#7a7a7a" stroke-width="1"/><line x1="277.5" y1="144.5" x2="277.5" y2="146.5" stroke="#7a7a7a" stroke-width="1"/><line x1="277.5" y1="271.5" x2="277.5" y2="269.5" stroke="#7a7a7a" stroke-width="1"/><line x1="282.5" y1="144.5" x2="282.5" y2="146.5" stroke="#7a7a7a" stroke-width="1"/><line x1="282.5" y1="271.5" x2="282.5" y2="269.5" stroke="#7a7a7a" stroke-width="1"/><line x1="286.5" y1="144.5" x2="286.5" y2="146.5" stroke="#7a7a7a" stroke-width="1"/><line x1="286.5" y1="271.5" x2="286.5" y2="269.5" stroke="#7a7a7a" stroke-width="1"/><line x1="291.5" y1="144.5" x2="291.5" y2="148.5" stroke="#7a7a7a" stroke-width="1"/><line x1="291.5" y1="271.5" x2="291.5" y2="267.5" stroke="#7a7a7a" stroke-width="1"/><line x1="295.5" y1="144.5" x2="295.5" y2="146.5" stroke="#7a7a7a" stroke-width="1"/><line x1="295.5" y1="271.5" x2="295.5" y2="269.5" stroke="#7a7a7a" stroke-width="1"/><line x1="300.5" y1="144.5" x2="300.5" y2="146.5" stroke="#7a7a7a" stroke-width="1"/><line x1="300.5" y1="271.5" x2="300.5" y2="269.5" stroke="#7a7a7a" stroke-width="1"/><line x1="304.5" y1="144.5" x2="304.5" y2="146.5" stroke="#7a7a7a" stroke-width="1"/><line x1="304.5" y1="271.5" x2="304.5" y2="269.5" stroke="#7a7a7a" stroke-width="1"/><line x1="309.5" y1="144.5" x2="309.5" y2="146.5" stroke="#7a7a7a" stroke-width="1"/><line x1="309.5" y1="271.5" x2="309.5" y2="269.5" stroke="#7a7a7a" stroke-width="1"/><line x1="313.5" y1="144.5" x2="313.5" y2="153.5" stroke="#7a7a7a" stroke-width="1"/><line x1="313.5" y1="271.5" x2="313.5" y2="262.5" stroke="#7a7a7a" stroke-width="1"/><line x1="318.5" y1="144.5" x2="318.5" y2="146.5" stroke="#7a7a7a" stroke-width="1"/><line x1="318.5" y1="271.5" x2="318.5" y2="269.5" stroke="#7a7a7a" stroke-width="1"/><line x1="322.5" y1="144.5" x2="322.5" y2="146.5" stroke="#7a7a7a" stroke-width="1"/><line x1="322.5" y1="271.5" x2="322.5" y2="269.5" stroke="#7a7a7a" stroke-width="1"/><line x1="327.5" y1="144.5" x2="327.5" y2="146.5" stroke="#7a7a7a" stroke-width="1"/><line x1="327.5" y1="271.5" x2="327.5" y2="269.5" stroke="#7a7a7a" stroke-width="1"/><line x1="331.5" y1="144.5" x2="331.5" y2="146.5" stroke="#7a7a7a" stroke-width="1"/><line x1="331.5" y1="271.5" x2="331.5" y2="269.5" stroke="#7a7a7a" stroke-width="1"/><line x1="336.5" y1="144.5" x2="336.5" y2="148.5" stroke="#7a7a7a" stroke-width="1"/><line x1="336.5" y1="271.5" x2="336.5" y2="267.5" stroke="#7a7a7a" stroke-width="1"/><line x1="340.5" y1="144.5" x2="340.5" y2="146.5" stroke="#7a7a7a" stroke-width="1"/><line x1="340.5" y1="271.5" x2="340.5" y2="269.5" stroke="#7a7a7a" stroke-width="1"/><line x1="345.5" y1="144.5" x2="345.5" y2="146.5" stroke="#7a7a7a" stroke-width="1"/><line x1="345.5" y1="271.5" x2="345.5" y2="269.5" stroke="#7a7a7a" stroke-width="1"/><line x1="349.5" y1="144.5" x2="349.5" y2="146.5" stroke="#7a7a7a" stroke-width="1"/><line x1="349.5" y1="271.5" x2="349.5" y2="269.5" stroke="#7a7a7a" stroke-width="1"/><line x1="354.5" y1="144.5" x2="354.5" y2="146.5" stroke="#7a7a7a" stroke-width="1"/><line x1="354.5" y1="271.5" x2="354.5" y2="269.5" stroke="#7a7a7a" stroke-width="1"/><line x1="358.5" y1="144.5" x2="358.5" y2="153.5" stroke="#7a7a7a" stroke-width="1"/><line x1="358.5" y1="271.5" x2="358.5" y2="262.5" stroke="#7a7a7a" stroke-width="1"/><line x1="363.5" y1="144.5" x2="363.5" y2="146.5" stroke="#7a7a7a" stroke-width="1"/><line x1="363.5" y1="271.5" x2="363.5" y2="269.5" stroke="#7a7a7a" stroke-width="1"/><line x1="367.5" y1="144.5" x2="367.5" y2="146.5" stroke="#7a7a7a" stroke-width="1"/><line x1="367.5" y1="271.5" x2="367.5" y2="269.5" stroke="#7a7a7a" stroke-width="1"/><line x1="372.5" y1="144.5" x2="372.5" y2="146.5" stroke="#7a7a7a" stroke-width="1"/><line x1="372.5" y1="271.5" x2="372.5" y2="269.5" stroke="#7a7a7a" stroke-width="1"/><line x1="376.5" y1="144.5" x2="376.5" y2="146.5" stroke="#7a7a7a" stroke-width="1"/><line x1="376.5" y1="271.5" x2="376.5" y2="269.5" stroke="#7a7a7a" stroke-width="1"/><line x1="381.5" y1="144.5" x2="381.5" y2="148.5" stroke="#7a7a7a" stroke-width="1"/><line x1="381.5" y1="271.5" x2="381.5" y2="267.5" stroke="#7a7a7a" stroke-width="1"/><line x1="385.5" y1="144.5" x2="385.5" y2="146.5" stroke="#7a7a7a" stroke-width="1"/><line x1="385.5" y1="271.5" x2="385.5" y2="269.5" stroke="#7a7a7a" stroke-width="1"/><line x1="390.5" y1="144.5" x2="390.5" y2="146.5" stroke="#7a7a7a" stroke-width="1"/><line x1="390.5" y1="271.5" x2="390.5" y2="269.5" stroke="#7a7a7a" stroke-width="1"/><line x1="394.5" y1="144.5" x2="394.5" y2="146.5" stroke="#7a7a7a" stroke-width="1"/><line x1="394.5" y1="271.5" x2="394.5" y2="269.5" stroke="#7a7a7a" stroke-width="1"/><line x1="399.5" y1="144.5" x2="399.5" y2="146.5" stroke="#7a7a7a" stroke-width="1"/><line x1="399.5" y1="271.5" x2="399.5" y2="269.5" stroke="#7a7a7a" stroke-width="1"/><line x1="403.5" y1="144.5" x2="403.5" y2="153.5" stroke="#7a7a7a" stroke-width="1"/><line x1="403.5" y1="271.5" x2="403.5" y2="262.5" stroke="#7a7a7a" stroke-width="1"/><line x1="408.5" y1="144.5" x2="408.5" y2="146.5" stroke="#7a7a7a" stroke-width="1"/><line x1="408.5" y1="271.5" x2="408.5" y2="269.5" stroke="#7a7a7a" stroke-width="1"/><line x1="412.5" y1="144.5" x2="412.5" y2="146.5" stroke="#7a7a7a" stroke-width="1"/><line x1="412.5" y1="271.5" x2="412.5" y2="269.5" stroke="#7a7a7a" stroke-width="1"/><line x1="417.5" y1="144.5" x2="417.5" y2="146.5" stroke="#7a7a7a" stroke-width="1"/><line x1="417.5" y1="271.5" x2="417.5" y2="269.5" stroke="#7a7a7a" stroke-width="1"/><line x1="421.5" y1="144.5" x2="421.5" y2="146.5" stroke="#7a7a7a" stroke-width="1"/><line x1="421.5" y1="271.5" x2="421.5" y2="269.5" stroke="#7a7a7a" stroke-width="1"/><line x1="426.5" y1="144.5" x2="426.5" y2="148.5" stroke="#7a7a7a" stroke-width="1"/><line x1="426.5" y1="271.5" x2="426.5" y2="267.5" stroke="#7a7a7a" stroke-width="1"/><line x1="430.5" y1="144.5" x2="430.5" y2="146.5" stroke="#7a7a7a" stroke-width="1"/><line x1="430.5" y1="271.5" x2="430.5" y2="269.5" stroke="#7a7a7a" stroke-width="1"/><line x1="435.5" y1="144.5" x2="435.5" y2="146.5" stroke="#7a7a7a" stroke-width="1"/><line x1="435.5" y1="271.5" x2="435.5" y2="269.5" stroke="#7a7a7a" stroke-width="1"/><line x1="439.5" y1="144.5" x2="439.5" y2="146.5" stroke="#7a7a7a" stroke-width="1"/><line x1="439.5" y1="271.5" x2="439.5" y2="269.5" stroke="#7a7a7a" stroke-width="1"/><line x1="444.5" y1="144.5" x2="444.5" y2="146.5" stroke="#7a7a7a" stroke-width="1"/><line x1="444.5" y1="271.5" x2="444.5" y2="269.5" stroke="#7a7a7a" stroke-width="1"/><line x1="448.5" y1="144.5" x2="448.5" y2="153.5" stroke="#7a7a7a" stroke-width="1"/><line x1="448.5" y1="271.5" x2="448.5" y2="262.5" stroke="#7a7a7a" stroke-width="1"/><line x1="453.5" y1="144.5" x2="453.5" y2="146.5" stroke="#7a7a7a" stroke-width="1"/><line x1="453.5" y1="271.5" x2="453.5" y2="269.5" stroke="#7a7a7a" stroke-width="1"/><line x1="457.5" y1="144.5" x2="457.5" y2="146.5" stroke="#7a7a7a" stroke-width="1"/><line x1="457.5" y1="271.5" x2="457.5" y2="269.5" stroke="#7a7a7a" stroke-width="1"/><line x1="462.5" y1="144.5" x2="462.5" y2="146.5" stroke="#7a7a7a" stroke-width="1"/><line x1="462.5" y1="271.5" x2="462.5" y2="269.5" stroke="#7a7a7a" stroke-width="1"/><line x1="466.5" y1="144.5" x2="466.5" y2="146.5" stroke="#7a7a7a" stroke-width="1"/><line x1="466.5" y1="271.5" x2="466.5" y2="269.5" stroke="#7a7a7a" stroke-width="1"/><line x1="471.5" y1="144.5" x2="471.5" y2="148.5" stroke="#7a7a7a" stroke-width="1"/><line x1="471.5" y1="271.5" x2="471.5" y2="267.5" stroke="#7a7a7a" stroke-width="1"/><line x1="475.5" y1="144.5" x2="475.5" y2="146.5" stroke="#7a7a7a" stroke-width="1"/><line x1="475.5" y1="271.5" x2="475.5" y2="269.5" stroke="#7a7a7a" stroke-width="1"/><line x1="480.5" y1="144.5" x2="480.5" y2="146.5" stroke="#7a7a7a" stroke-width="1"/><line x1="480.5" y1="271.5" x2="480.5" y2="269.5" stroke="#7a7a7a" stroke-width="1"/><line x1="484.5" y1="144.5" x2="484.5" y2="146.5" stroke="#7a7a7a" stroke-width="1"/><line x1="484.5" y1="271.5" x2="484.5" y2="269.5" stroke="#7a7a7a" stroke-width="1"/><line x1="489.5" y1="144.5" x2="489.5" y2="146.5" stroke="#7a7a7a" stroke-width="1"/><line x1="489.5" y1="271.5" x2="489.5" y2="269.5" stroke="#7a7a7a" stroke-width="1"/><line x1="493.5" y1="144.5" x2="493.5" y2="153.5" stroke="#7a7a7a" stroke-width="1"/><line x1="493.5" y1="271.5" x2="493.5" y2="262.5" stroke="#7a7a7a" stroke-width="1"/><line x1="43.5" y1="144.5" x2="46.5" y2="144.5" stroke="#7a7a7a" stroke-width="1"/><line x1="493.5" y1="144.5" x2="490.5" y2="144.5" stroke="#7a7a7a" stroke-width="1"/><line x1="43.5" y1="150.5" x2="45.5" y2="150.5" stroke="#7a7a7a" stroke-width="1"/><line x1="493.5" y1="150.5" x2="491.5" y2="150.5" stroke="#7a7a7a" stroke-width="1"/><line x1="43.5" y1="157.5" x2="46.5" y2="157.5" stroke="#7a7a7a" stroke-width="1"/><line x1="493.5" y1="157.5" x2="490.5" y2="157.5" stroke="#7a7a7a" stroke-width="1"/><line x1="43.5" y1="163.5" x2="45.5" y2="163.5" stroke="#7a7a7a" stroke-width="1"/><line x1="493.5" y1="163.5" x2="491.5" y2="163.5" stroke="#7a7a7a" stroke-width="1"/><line x1="43.5" y1="169.5" x2="46.5" y2="169.5" stroke="#7a7a7a" stroke-width="1"/><line x1="493.5" y1="169.5" x2="490.5" y2="169.5" stroke="#7a7a7a" stroke-width="1"/><line x1="43.5" y1="176.5" x2="45.5" y2="176.5" stroke="#7a7a7a" stroke-width="1"/><line x1="493.5" y1="176.5" x2="491.5" y2="176.5" stroke="#7a7a7a" stroke-width="1"/><line x1="43.5" y1="182.5" x2="46.5" y2="182.5" stroke="#7a7a7a" stroke-width="1"/><line x1="493.5" y1="182.5" x2="490.5" y2="182.5" stroke="#7a7a7a" stroke-width="1"/><line x1="43.5" y1="188.5" x2="45.5" y2="188.5" stroke="#7a7a7a" stroke-width="1"/><line x1="493.5" y1="188.5" x2="491.5" y2="188.5" stroke="#7a7a7a" stroke-width="1"/><line x1="43.5" y1="195.5" x2="46.5" y2="195.5" stroke="#7a7a7a" stroke-width="1"/><line x1="493.5" y1="195.5" x2="490.5" y2="195.5" stroke="#7a7a7a" stroke-width="1"/><line x1="43.5" y1="201.5" x2="45.5" y2="201.5" stroke="#7a7a7a" stroke-width="1"/><line x1="493.5" y1="201.5" x2="491.5" y2="201.5" stroke="#7a7a7a" stroke-width="1"/><line x1="43.5" y1="208.5" x2="46.5" y2="208.5" stroke="#7a7a7a" stroke-width="1"/><line x1="493.5" y1="208.5" x2="490.5" y2="208.5" stroke="#7a7a7a" stroke-width="1"/><line x1="43.5" y1="214.5" x2="45.5" y2="214.5" stroke="#7a7a7a" stroke-width="1"/><line x1="493.5" y1="214.5" x2="491.5" y2="214.5" stroke="#7a7a7a" stroke-width="1"/><line x1="43.5" y1="220.5" x2="46.5" y2="220.5" stroke="#7a7a7a" stroke-width="1"/><line x1="493.5" y1="220.5" x2="490.5" y2="220.5" stroke="#7a7a7a" stroke-width="1"/><line x1="43.5" y1="227.5" x2="45.5" y2="227.5" stroke="#7a7a7a" stroke-width="1"/><line x1="493.5" y1="227.5" x2="491.5" y2="227.5" stroke="#7a7a7a" stroke-width="1"/><line x1="43.5" y1="233.5" x2="46.5" y2="233.5" stroke="#7a7a7a" stroke-width="1"/><line x1="493.5" y1="233.5" x2="490.5" y2="233.5" stroke="#7a7a7a" stroke-width="1"/><line x1="43.5" y1="239.5" x2="45.5" y2="239.5" stroke="#7a7a7a" stroke-width="1"/><line x1="493.5" y1="239.5" x2="491.5" y2="239.5" stroke="#7a7a7a" stroke-width="1"/><line x1="43.5" y1="246.5" x2="46.5" y2="246.5" stroke="#7a7a7a" stroke-width="1"/><line x1="493.5" y1="246.5" x2="490.5" y2="246.5" stroke="#7a7a7a" stroke-width="1"/><line x1="43.5" y1="252.5" x2="45.5" y2="252.5" stroke="#7a7a7a" stroke-width="1"/><line x1="493.5" y1="252.5" x2="491.5" y2="252.5" stroke="#7a7a7a" stroke-width="1"/><line x1="43.5" y1="258.5" x2="46.5" y2="258.5" stroke="#7a7a7a" stroke-width="1"/><line x1="493.5" y1="258.5" x2="490.5" y2="258.5" stroke="#7a7a7a" stroke-width="1"/><line x1="43.5" y1="265.5" x2="45.5" y2="265.5" stroke="#7a7a7a" stroke-width="1"/><line x1="493.5" y1="265.5" x2="491.5" y2="265.5" stroke="#7a7a7a" stroke-width="1"/><line x1="43.5" y1="271.5" x2="46.5" y2="271.5" stroke="#7a7a7a" stroke-width="1"/><line x1="493.5" y1="271.5" x2="490.5" y2="271.5" stroke="#7a7a7a" stroke-width="1"/><polygon points="43.5,193.8 44.0,193.2 44.5,192.0 45.0,191.2 45.5,190.8 46.0,190.5 46.5,190.8 47.0,190.5 47.5,191.0 48.0,191.0 48.5,191.4 49.0,191.3 49.5,190.5 50.0,190.7 50.5,190.6 51.0,191.0 51.5,190.9 52.0,190.5 52.5,191.1 53.0,190.7 53.5,190.9 54.0,191.2 54.5,190.6 55.0,190.9 55.5,191.1 56.0,191.4 56.5,190.8 57.0,190.6 57.5,190.4 58.0,191.2 58.5,191.3 59.0,191.1 59.5,191.0 60.0,191.2 60.5,190.9 61.0,190.5 61.5,191.0 62.0,191.2 62.5,190.8 63.0,190.4 63.5,190.6 64.0,190.5 64.5,190.5 65.0,190.8 65.5,190.5 66.0,190.9 66.5,191.4 67.0,191.0 67.5,191.2 68.0,191.9 68.5,191.3 69.0,191.5 69.5,192.0 70.0,191.6 70.5,192.1 71.0,192.8 71.5,192.5 72.0,192.8 72.5,193.2 73.0,193.3 73.5,193.0 74.0,192.8 74.5,192.9 75.0,193.2 75.5,193.4 76.0,193.2 76.5,193.4 77.0,193.4 77.5,194.0 78.0,193.8 78.5,194.0 79.0,194.5 79.5,194.2 80.0,193.9 80.5,194.3 81.0,194.8 81.5,194.1 82.0,194.7 82.5,194.8 83.0,194.9 83.5,195.3 84.0,194.8 84.5,194.8 85.0,195.2 85.5,195.1 86.0,194.4 86.5,192.9 87.0,192.4 87.5,191.4 88.0,191.1 88.5,190.6 89.0,190.7 89.5,191.4 90.0,191.3 90.5,191.4 91.0,190.6 91.5,190.6 92.0,191.0 92.5,191.2 93.0,191.1 93.5,190.5 94.0,191.3 94.5,191.2 95.0,190.6 95.5,190.7 96.0,191.4 96.5,190.8 97.0,191.1 97.5,190.5 98.0,191.3 98.5,190.5 99.0,191.4 99.5,190.8 100.0,190.5 100.5,191.4 101.0,190.9 101.5,190.8 102.0,191.2 102.5,190.7 103.0,190.6 103.5,190.7 104.0,190.5 104.5,190.8 105.0,191.0 105.5,190.8 106.0,190.9 106.5,190.9 107.0,190.9 107.5,190.6 108.0,190.9 108.5,191.6 109.0,191.3 109.5,191.7 110.0,191.4 110.5,191.6 111.0,192.3 111.5,192.2 112.0,192.7 112.5,192.5 113.0,192.5 113.5,192.6 114.0,192.7 114.5,193.1 115.0,193.4 115.5,193.2 116.0,193.6 116.5,193.0 117.0,193.1 117.5,193.2 118.0,194.0 118.5,193.4 119.0,194.0 119.5,194.3 120.0,193.7 120.5,194.0 121.0,194.7 121.5,193.9 122.0,194.4 122.5,194.1 123.0,194.7 123.5,194.7 124.0,194.2 124.5,194.9 125.0,194.4 125.5,195.2 126.0,194.6 126.5,194.7 127.0,195.0 127.5,195.2 128.0,194.8 128.5,193.2 129.0,192.6 129.5,191.2 130.0,190.8 130.5,189.8 131.0,190.8 131.5,190.7 132.0,191.2 132.5,192.1 133.0,192.7 133.5,192.4 134.0,192.8 134.5,192.4 135.0,192.5 135.5,192.8 136.0,193.3 136.5,193.1 137.0,193.1 137.5,193.0 138.0,193.6 138.5,193.1 139.0,194.0 139.5,193.9 140.0,193.7 140.5,193.7 141.0,194.0 141.5,193.8 142.0,194.2 142.5,194.0 143.0,193.7 143.5,193.8 144.0,194.1 144.5,194.0 145.0,194.8 145.5,194.3 146.0,194.4 146.5,194.4 147.0,194.5 147.5,195.3 148.0,194.7 148.5,194.8 149.0,194.6 149.5,195.1 150.0,194.9 150.5,194.6 151.0,193.4 151.5,192.0 152.0,191.9 152.5,191.7 153.0,191.5 153.5,191.3 154.0,190.8 154.5,191.4 155.0,191.1 155.5,190.4 156.0,191.3 156.5,191.1 157.0,190.5 157.5,190.9 158.0,191.2 158.5,191.0 159.0,191.1 159.5,190.6 160.0,190.5 160.5,190.5 161.0,191.0 161.5,191.0 162.0,190.9 162.5,191.2 163.0,190.9 163.5,191.1 164.0,191.1 164.5,190.5 165.0,191.1 165.5,191.1 166.0,190.9 166.5,190.9 167.0,191.2 167.5,191.0 168.0,190.5 168.5,191.1 169.0,191.0 169.5,190.5 170.0,191.1 170.5,191.1 171.0,190.9 171.5,190.9 172.0,191.3 172.5,191.4 173.0,190.4 173.5,191.2 174.0,190.8 174.5,190.6 175.0,190.6 175.5,190.5 176.0,191.4 176.5,191.2 177.0,191.3 177.5,190.6 178.0,190.9 178.5,190.4 179.0,190.9 179.5,190.5 180.0,190.7 180.5,190.5 181.0,191.5 181.5,191.8 182.0,191.9 182.5,191.5 183.0,192.3 183.5,191.8 184.0,191.8 184.5,191.8 185.0,192.2 185.5,192.3 186.0,192.7 186.5,192.7 187.0,193.3 187.5,193.2 188.0,193.7 188.5,193.6 189.0,193.8 189.5,193.9 190.0,193.6 190.5,194.4 191.0,194.1 191.5,194.1 192.0,194.9 192.5,194.7 193.0,194.8 193.5,194.5 194.0,194.7 194.5,195.2 195.0,195.7 195.5,194.7 196.0,194.0 196.5,193.6 197.0,193.0 197.5,192.9 198.0,192.5 198.5,191.7 199.0,191.4 199.5,190.7 200.0,191.3 200.5,190.6 201.0,190.6 201.5,189.7 202.0,189.6 202.5,189.8 203.0,189.6 203.5,189.4 204.0,190.8 204.5,191.1 205.0,191.5 205.5,192.6 206.0,193.3 206.5,193.0 207.0,194.1 207.5,194.8 208.0,194.5 208.5,194.4 209.0,193.9 209.5,194.1 210.0,194.5 210.5,194.0 211.0,194.5 211.5,194.0 212.0,194.4 212.5,194.3 213.0,194.5 213.5,194.2 214.0,194.9 214.5,194.8 215.0,194.1 215.5,194.9 216.0,194.2 216.5,194.4 217.0,194.2 217.5,193.6 218.0,192.3 218.5,191.5 219.0,191.0 219.5,190.3 220.0,190.0 220.5,190.5 221.0,190.4 221.5,189.8 222.0,189.9 222.5,190.1 223.0,189.9 223.5,190.3 224.0,189.8 224.5,189.9 225.0,189.9 225.5,189.8 226.0,190.7 226.5,190.5 227.0,190.8 227.5,190.0 228.0,190.6 228.5,190.5 229.0,190.3 229.5,190.1 230.0,190.2 230.5,190.9 231.0,191.0 231.5,190.4 232.0,190.9 232.5,190.1 233.0,190.4 233.5,190.3 234.0,191.0 234.5,190.6 235.0,190.9 235.5,190.2 236.0,191.1 236.5,191.0 237.0,190.6 237.5,191.2 238.0,190.6 238.5,190.6 239.0,190.3 239.5,191.3 240.0,191.3 240.5,190.6 241.0,191.2 241.5,190.4 242.0,190.2 242.5,190.5 243.0,190.1 243.5,190.0 244.0,189.8 244.5,189.6 245.0,190.0 245.5,189.5 246.0,189.5 246.5,189.3 247.0,189.6 247.5,190.2 248.0,189.6 248.5,189.5 249.0,190.1 249.5,189.6 250.0,190.0 250.5,190.2 251.0,190.1 251.5,190.3 252.0,190.0 252.5,190.2 253.0,189.8 253.5,189.8 254.0,190.4 254.5,190.3 255.0,190.5 255.5,190.9 256.0,191.2 256.5,190.8 257.0,191.3 257.5,190.6 258.0,190.8 258.5,191.8 259.0,191.9 259.5,191.9 260.0,191.4 260.5,192.2 261.0,192.0 261.5,191.7 262.0,191.7 262.5,192.0 263.0,192.5 263.5,192.0 264.0,192.7 264.5,192.5 265.0,193.1 265.5,192.5 266.0,192.9 266.5,193.3 267.0,192.9 267.5,193.3 268.0,193.3 268.5,193.4 269.0,193.6 269.5,194.2 270.0,193.8 270.5,194.3 271.0,193.7 271.5,194.2 272.0,194.3 272.5,193.9 273.0,193.1 273.5,193.3 274.0,192.3 274.5,192.1 275.0,191.5 275.5,191.4 276.0,190.6 276.5,190.9 277.0,189.8 277.5,190.1 278.0,189.3 278.5,189.8 279.0,190.1 279.5,190.5 280.0,190.8 280.5,190.8 281.0,191.7 281.5,191.4 282.0,192.1 282.5,192.1 283.0,192.9 283.5,192.3 284.0,193.1 284.5,193.3 285.0,193.2 285.5,193.3 286.0,193.2 286.5,193.3 287.0,193.4 287.5,193.1 288.0,193.7 288.5,194.1 289.0,193.9 289.5,194.0 290.0,193.7 290.5,193.8 291.0,194.3 291.5,194.4 292.0,193.9 292.5,193.1 293.0,192.4 293.5,192.3 294.0,191.6 294.5,190.8 295.0,189.7 295.5,190.0 296.0,190.4 296.5,190.3 297.0,189.6 297.5,190.3 298.0,190.4 298.5,190.3 299.0,190.0 299.5,189.7 300.0,190.0 300.5,189.5 301.0,189.7 301.5,190.2 302.0,189.7 302.5,189.6 303.0,190.1 303.5,190.4 304.0,190.1 304.5,189.6 305.0,190.1 305.5,190.3 306.0,190.5 306.5,189.9 307.0,189.9 307.5,190.4 308.0,190.5 308.5,190.5 309.0,190.5 309.5,190.4 310.0,190.2 310.5,190.9 311.0,190.9 311.5,190.7 312.0,191.3 312.5,190.8 313.0,191.0 313.5,191.2 314.0,191.7 314.5,191.8 315.0,191.4 315.5,191.7 316.0,191.6 316.5,192.5 317.0,192.2 317.5,191.9 318.0,192.6 318.5,192.8 319.0,193.2 319.5,192.6 320.0,192.5 320.5,193.0 321.0,192.7 321.5,192.8 322.0,193.8 322.5,193.2 323.0,193.6 323.5,194.1 324.0,193.7 324.5,193.5 325.0,194.4 325.5,193.7 326.0,194.6 326.5,194.5 327.0,193.4 327.5,192.8 328.0,192.3 328.5,192.0 329.0,191.4 329.5,190.7 330.0,190.3 330.5,189.8 331.0,190.5 331.5,190.4 332.0,189.8 332.5,190.3 333.0,190.4 333.5,190.5 334.0,189.9 334.5,190.3 335.0,190.3 335.5,190.2 336.0,190.4 336.5,190.2 337.0,190.3 337.5,190.0 338.0,189.9 338.5,190.0 339.0,189.9 339.5,190.2 340.0,189.9 340.5,190.6 341.0,190.6 341.5,190.0 342.0,190.3 342.5,190.8 343.0,190.0 343.5,190.9 344.0,190.1 344.5,190.1 345.0,190.9 345.5,190.7 346.0,190.7 346.5,190.2 347.0,190.9 347.5,190.4 348.0,190.2 348.5,190.4 349.0,190.6 349.5,191.2 350.0,191.1 350.5,190.3 351.0,190.7 351.5,190.6 352.0,190.8 352.5,191.2 353.0,191.1 353.5,190.3 354.0,191.1 354.5,190.4 355.0,190.9 355.5,190.5 356.0,190.6 356.5,190.4 357.0,190.4 357.5,190.7 358.0,190.0 358.5,189.9 359.0,190.4 359.5,190.3 360.0,190.0 360.5,190.4 361.0,190.5 361.5,189.9 362.0,190.6 362.5,190.2 363.0,190.1 363.5,190.5 364.0,190.8 364.5,190.5 365.0,190.4 365.5,191.0 366.0,190.5 366.5,191.2 367.0,190.7 367.5,191.5 368.0,190.9 368.5,191.5 369.0,191.0 369.5,191.2 370.0,191.5 370.5,191.4 371.0,192.1 371.5,191.4 372.0,191.4 372.5,192.4 373.0,192.2 373.5,191.8 374.0,191.8 374.5,192.1 375.0,192.2 375.5,192.6 376.0,192.6 376.5,192.2 377.0,192.5 377.5,193.1 378.0,192.9 378.5,192.8 379.0,193.2 379.5,193.3 380.0,193.5 380.5,193.3 381.0,193.1 381.5,192.9 382.0,193.7 382.5,193.6 383.0,193.5 383.5,193.8 384.0,193.9 384.5,193.5 385.0,194.2 385.5,193.5 386.0,192.7 386.5,192.5 387.0,192.9 387.5,191.7 388.0,191.7 388.5,191.3 389.0,191.3 389.5,190.5 390.0,189.9 390.5,189.9 391.0,189.8 391.5,190.2 392.0,190.2 392.5,190.1 393.0,190.6 393.5,190.7 394.0,190.7 394.5,191.5 395.0,190.9 395.5,191.2 396.0,191.1 396.5,191.9 397.0,191.7 397.5,191.5 398.0,191.8 398.5,192.4 399.0,192.2 399.5,192.4 400.0,192.8 400.5,192.9 401.0,192.6 401.5,192.7 402.0,192.4 402.5,192.8 403.0,193.0 403.5,193.2 404.0,193.6 404.5,194.0 405.0,193.3 405.5,194.2 406.0,193.6 406.5,194.2 407.0,193.7 407.5,194.5 408.0,193.6 408.5,192.9 409.0,192.0 409.5,192.3 410.0,191.3 410.5,191.5 411.0,191.2 411.5,191.2 412.0,190.6 412.5,190.9 413.0,190.8 413.5,191.0 414.0,190.6 414.5,190.9 415.0,190.9 415.5,190.9 416.0,190.9 416.5,190.4 417.0,190.9 417.5,191.1 418.0,190.8 418.5,191.4 419.0,191.0 419.5,190.4 420.0,191.1 420.5,190.7 421.0,190.9 421.5,191.3 422.0,191.1 422.5,190.7 423.0,190.8 423.5,190.9 424.0,190.8 424.5,191.3 425.0,191.9 425.5,192.2 426.0,192.1 426.5,192.4 427.0,192.8 427.5,192.7 428.0,192.9 428.5,193.5 429.0,193.1 429.5,194.2 430.0,193.6 430.5,193.9 431.0,194.5 431.5,193.8 432.0,193.6 432.5,192.9 433.0,192.6 433.5,192.2 434.0,191.7 434.5,191.4 435.0,190.4 435.5,190.6 436.0,190.2 436.5,190.3 437.0,190.1 437.5,189.8 438.0,189.8 438.5,190.1 439.0,189.6 439.5,189.5 440.0,190.3 440.5,190.4 441.0,189.5 441.5,190.1 442.0,190.5 442.5,189.9 443.0,190.1 443.5,189.7 444.0,189.5 444.5,189.6 445.0,189.7 445.5,189.9 446.0,190.6 446.5,190.7 447.0,190.2 447.5,190.9 448.0,191.1 448.5,191.1 449.0,191.1 449.5,191.0 450.0,191.6 450.5,191.0 451.0,191.9 451.5,191.5 452.0,191.5 452.5,192.0 453.0,192.0 453.5,192.2 454.0,192.0 454.5,192.3 455.0,192.7 455.5,192.6 456.0,193.3 456.5,193.0 457.0,192.7 457.5,193.4 458.0,193.2 458.5,194.0 459.0,193.7 459.5,193.7 460.0,193.7 460.5,194.1 461.0,194.4 461.5,193.7 462.0,194.3 462.5,194.2 463.0,192.5 463.5,192.3 464.0,191.6 464.5,191.5 465.0,191.1 465.5,190.9 466.0,191.2 466.5,191.0 467.0,191.8 467.5,191.6 468.0,191.6 468.5,191.5 469.0,192.2 469.5,191.6 470.0,192.4 470.5,192.3 471.0,192.7 471.5,192.5 472.0,192.3 472.5,192.4 473.0,192.7 473.5,192.8 474.0,192.7 474.5,193.7 475.0,192.9 475.5,193.7 476.0,193.6 476.5,193.7 477.0,193.3 477.5,194.2 478.0,194.1 478.5,194.4 479.0,194.7 479.5,194.7 480.0,193.8 480.5,193.1 481.0,192.3 481.5,192.2 482.0,191.5 482.5,191.3 483.0,190.3 483.5,189.6 484.0,189.8 484.5,190.1 485.0,190.2 485.5,189.9 486.0,190.5 486.5,189.7 487.0,189.8 487.5,190.4 488.0,190.3 488.5,190.3 489.0,190.1 489.5,189.6 490.0,190.3 490.5,190.2 491.0,190.1 491.5,189.6 492.0,189.8 492.5,190.0 493.0,189.7 493.5,190.2 493.5,220.2 493.0,220.3 492.5,220.4 492.0,220.3 491.5,220.5 491.0,221.0 490.5,220.5 490.0,221.1 489.5,220.3 489.0,221.2 488.5,220.9 488.0,220.2 487.5,221.1 487.0,220.6 486.5,220.2 486.0,221.2 485.5,220.4 485.0,220.6 484.5,221.2 484.0,220.8 483.5,221.2 483.0,220.3 482.5,219.4 482.0,219.6 481.5,218.9 481.0,217.5 480.5,217.0 480.0,216.2 479.5,216.8 479.0,216.7 478.5,216.5 478.0,216.5 477.5,216.8 477.0,217.4 476.5,216.6 476.0,217.0 475.5,216.9 475.0,217.5 474.5,217.4 474.0,217.2 473.5,217.8 473.0,217.9 472.5,218.2 472.0,217.8 471.5,218.3 471.0,218.4 470.5,218.9 470.0,218.3 469.5,219.0 469.0,218.8 468.5,219.2 468.0,218.8 467.5,219.3 467.0,219.0 466.5,219.7 466.0,219.8 465.5,219.2 465.0,220.2 464.5,219.9 464.0,218.9 463.5,219.1 463.0,218.1 462.5,217.2 462.0,216.4 461.5,216.2 461.0,216.4 460.5,217.1 460.0,217.0 459.5,217.4 459.0,216.9 458.5,217.6 458.0,217.5 457.5,217.8 457.0,218.1 456.5,217.5 456.0,218.1 455.5,218.3 455.0,218.0 454.5,218.4 454.0,218.6 453.5,218.7 453.0,218.7 452.5,218.3 452.0,219.2 451.5,219.2 451.0,218.7 450.5,219.4 450.0,218.9 449.5,219.9 449.0,220.0 448.5,219.9 448.0,219.4 447.5,220.3 447.0,220.4 446.5,219.9 446.0,220.1 445.5,220.0 445.0,221.0 444.5,221.2 444.0,220.9 443.5,220.2 443.0,220.4 442.5,220.3 442.0,220.7 441.5,221.1 441.0,220.6 440.5,220.6 440.0,220.8 439.5,220.3 439.0,220.8 438.5,221.1 438.0,220.6 437.5,220.6 437.0,220.5 436.5,221.0 436.0,220.6 435.5,220.8 435.0,219.5 434.5,219.1 434.0,219.1 433.5,218.4 433.0,218.4 432.5,218.0 432.0,217.6 431.5,217.3 431.0,216.7 430.5,216.0 430.0,216.4 429.5,216.9 429.0,217.3 428.5,217.6 428.0,217.7 427.5,217.7 427.0,218.4 426.5,218.8 426.0,218.4 425.5,218.8 425.0,218.9 424.5,219.4 424.0,219.5 423.5,220.1 423.0,219.8 422.5,220.2 422.0,219.9 421.5,219.3 421.0,219.8 420.5,220.3 420.0,220.2 419.5,219.9 419.0,219.9 418.5,219.4 418.0,219.7 417.5,220.1 417.0,219.9 416.5,220.1 416.0,220.2 415.5,219.8 415.0,219.4 414.5,219.4 414.0,219.4 413.5,219.6 413.0,220.2 412.5,220.0 412.0,220.0 411.5,220.1 411.0,220.0 410.5,219.6 410.0,219.5 409.5,219.1 409.0,218.2 408.5,217.9 408.0,216.3 407.5,216.1 407.0,217.0 406.5,216.1 406.0,217.1 405.5,217.2 405.0,217.3 404.5,217.5 404.0,217.1 403.5,217.5 403.0,217.5 402.5,217.4 402.0,218.0 401.5,217.6 401.0,217.8 400.5,217.9 400.0,218.1 399.5,218.0 399.0,218.3 398.5,219.0 398.0,218.9 397.5,219.4 397.0,219.1 396.5,219.3 396.0,219.5 395.5,219.1 395.0,219.8 394.5,219.7 394.0,220.0 393.5,219.7 393.0,220.2 392.5,220.1 392.0,220.2 391.5,220.0 391.0,221.0 390.5,220.9 390.0,220.7 389.5,220.6 389.0,219.8 388.5,219.5 388.0,219.2 387.5,218.7 387.0,218.3 386.5,218.2 386.0,217.6 385.5,217.6 385.0,216.7 384.5,217.0 384.0,217.4 383.5,216.9 383.0,217.1 382.5,216.9 382.0,217.5 381.5,217.3 381.0,217.6 380.5,217.5 380.0,217.8 379.5,217.9 379.0,218.1 378.5,217.6 378.0,218.2 377.5,217.9 377.0,218.3 376.5,218.3 376.0,218.2 375.5,218.3 375.0,218.7 374.5,218.0 374.0,218.3 373.5,218.8 373.0,218.6 372.5,219.1 372.0,218.8 371.5,219.4 371.0,219.3 370.5,218.8 370.0,218.8 369.5,219.1 369.0,219.0 368.5,219.8 368.0,219.3 367.5,219.3 367.0,219.6 366.5,219.8 366.0,219.8 365.5,220.1 365.0,220.3 364.5,219.9 364.0,220.3 363.5,220.5 363.0,220.3 362.5,220.8 362.0,220.5 361.5,220.3 361.0,220.1 360.5,220.3 360.0,220.5 359.5,220.4 359.0,220.7 358.5,220.7 358.0,220.4 357.5,220.2 357.0,219.8 356.5,220.5 356.0,220.3 355.5,219.9 355.0,220.1 354.5,219.8 354.0,220.3 353.5,219.6 353.0,219.5 352.5,219.5 352.0,219.6 351.5,220.1 351.0,220.2 350.5,219.9 350.0,220.1 349.5,220.0 349.0,219.8 348.5,220.2 348.0,219.8 347.5,220.0 347.0,219.8 346.5,219.7 346.0,219.9 345.5,220.5 345.0,220.5 344.5,219.7 344.0,219.9 343.5,220.7 343.0,220.6 342.5,220.6 342.0,220.6 341.5,220.4 341.0,220.5 340.5,220.5 340.0,219.9 339.5,220.0 339.0,220.8 338.5,219.9 338.0,220.8 337.5,220.6 337.0,220.3 336.5,220.7 336.0,220.8 335.5,220.8 335.0,221.0 334.5,220.7 334.0,221.0 333.5,220.4 333.0,220.4 332.5,221.1 332.0,220.4 331.5,220.2 331.0,220.4 330.5,220.8 330.0,220.7 329.5,220.0 329.0,219.2 328.5,219.2 328.0,218.5 327.5,217.2 327.0,216.6 326.5,216.4 326.0,216.4 325.5,216.8 325.0,216.8 324.5,217.1 324.0,216.6 323.5,216.6 323.0,217.2 322.5,217.3 322.0,216.9 321.5,217.5 321.0,217.8 320.5,217.4 320.0,217.8 319.5,218.3 319.0,218.2 318.5,218.0 318.0,218.1 317.5,218.5 317.0,218.2 316.5,218.8 316.0,218.8 315.5,218.4 315.0,219.3 314.5,219.0 314.0,218.8 313.5,219.3 313.0,219.2 312.5,219.3 312.0,219.1 311.5,219.4 311.0,220.2 310.5,219.8 310.0,219.7 309.5,219.6 309.0,220.4 308.5,220.8 308.0,220.2 307.5,220.1 307.0,220.4 306.5,221.0 306.0,220.8 305.5,220.5 305.0,220.6 304.5,221.2 304.0,221.1 303.5,220.8 303.0,220.6 302.5,220.7 302.0,221.0 301.5,221.1 301.0,221.1 300.5,220.4 300.0,220.5 299.5,220.5 299.0,221.1 298.5,220.3 298.0,220.5 297.5,220.4 297.0,220.6 296.5,221.1 296.0,220.4 295.5,221.2 295.0,221.2 294.5,220.4 294.0,220.0 293.5,218.5 293.0,218.1 292.5,217.2 292.0,217.3 291.5,216.0 291.0,215.9 290.5,216.4 290.0,216.5 289.5,216.3 289.0,216.5 288.5,217.2 288.0,216.7 287.5,217.2 287.0,217.1 286.5,217.5 286.0,217.5 285.5,217.3 285.0,217.7 284.5,217.3 284.0,217.4 283.5,218.0 283.0,218.4 282.5,217.9 282.0,218.5 281.5,218.9 281.0,219.1 280.5,220.1 280.0,219.9 279.5,220.2 279.0,221.1 278.5,221.2 278.0,221.0 277.5,221.5 277.0,220.2 276.5,220.6 276.0,219.7 275.5,219.7 275.0,218.6 274.5,218.4 274.0,218.1 273.5,218.0 273.0,217.2 272.5,216.4 272.0,216.7 271.5,216.7 271.0,216.9 270.5,216.3 270.0,216.5 269.5,217.4 269.0,216.9 268.5,217.2 268.0,217.7 267.5,217.1 267.0,217.6 266.5,217.2 266.0,217.7 265.5,217.4 265.0,218.0 264.5,217.7 264.0,217.8 263.5,218.1 263.0,218.1 262.5,218.6 262.0,218.3 261.5,218.6 261.0,218.9 260.5,218.5 260.0,219.3 259.5,219.1 259.0,219.2 258.5,219.5 258.0,219.2 257.5,219.4 257.0,220.2 256.5,220.2 256.0,219.6 255.5,220.2 255.0,219.9 254.5,220.8 254.0,220.3 253.5,220.9 253.0,220.4 252.5,220.4 252.0,220.6 251.5,220.5 251.0,220.4 250.5,221.1 250.0,221.0 249.5,220.7 249.0,220.8 248.5,220.8 248.0,220.4 247.5,221.4 247.0,221.4 246.5,220.9 246.0,220.5 245.5,221.2 245.0,220.5 244.5,220.8 244.0,220.8 243.5,221.3 243.0,221.1 242.5,220.4 242.0,220.4 241.5,220.0 241.0,220.4 240.5,219.8 240.0,219.3 239.5,220.0 239.0,220.1 238.5,219.7 238.0,220.1 237.5,220.0 237.0,219.7 236.5,220.4 236.0,219.8 235.5,219.6 235.0,219.6 234.5,220.4 234.0,219.6 233.5,220.0 233.0,220.5 232.5,220.1 232.0,220.1 231.5,220.5 231.0,219.9 230.5,219.9 230.0,220.1 229.5,219.8 229.0,220.1 228.5,220.2 228.0,219.9 227.5,220.8 227.0,220.2 226.5,220.9 226.0,220.8 225.5,220.3 225.0,220.0 224.5,221.0 224.0,220.4 223.5,221.0 223.0,220.5 222.5,220.3 222.0,221.0 221.5,220.9 221.0,220.4 220.5,220.5 220.0,220.4 219.5,220.9 219.0,219.6 218.5,218.9 218.0,217.7 217.5,217.7 217.0,216.2 216.5,216.5 216.0,215.8 215.5,216.5 215.0,216.0 214.5,216.3 214.0,216.4 213.5,216.3 213.0,215.8 212.5,216.0 212.0,216.4 211.5,215.9 211.0,216.5 210.5,216.1 210.0,216.1 209.5,216.7 209.0,216.6 208.5,216.4 208.0,216.6 207.5,216.5 207.0,216.8 206.5,216.9 206.0,217.6 205.5,218.8 205.0,219.5 204.5,219.2 204.0,220.2 203.5,221.1 203.0,221.0 202.5,221.7 202.0,221.0 201.5,220.5 201.0,220.2 200.5,220.3 200.0,219.4 199.5,219.3 199.0,219.0 198.5,218.9 198.0,218.3 197.5,218.3 197.0,217.2 196.5,216.5 196.0,216.0 195.5,215.5 195.0,215.9 194.5,215.3 194.0,216.1 193.5,215.5 193.0,215.9 192.5,215.9 192.0,216.0 191.5,216.7 191.0,216.4 190.5,216.3 190.0,216.4 189.5,217.2 189.0,217.1 188.5,216.9 188.0,217.5 187.5,218.0 187.0,218.1 186.5,218.3 186.0,217.7 185.5,218.0 185.0,218.8 184.5,218.8 184.0,218.2 183.5,218.7 183.0,219.0 182.5,219.0 182.0,219.0 181.5,219.6 181.0,219.1 180.5,219.9 180.0,220.1 179.5,219.6 179.0,219.6 178.5,219.8 178.0,219.3 177.5,220.2 177.0,220.0 176.5,219.8 176.0,219.4 175.5,219.8 175.0,219.9 174.5,220.2 174.0,219.6 173.5,220.3 173.0,219.8 172.5,220.2 172.0,219.5 171.5,219.4 171.0,219.8 170.5,219.6 170.0,220.0 169.5,219.6 169.0,219.3 168.5,219.6 168.0,219.6 167.5,219.4 167.0,219.9 166.5,220.0 166.0,219.7 165.5,220.3 165.0,219.5 164.5,219.6 164.0,219.6 163.5,219.4 163.0,219.8 162.5,220.0 162.0,219.3 161.5,220.0 161.0,219.9 160.5,220.1 160.0,219.7 159.5,219.3 159.0,220.0 158.5,220.2 158.0,220.1 157.5,220.1 157.0,219.8 156.5,220.1 156.0,219.9 155.5,220.1 155.0,219.9 154.5,219.4 154.0,219.6 153.5,220.0 153.0,219.7 152.5,219.1 152.0,218.4 151.5,217.7 151.0,216.8 150.5,215.4 150.0,215.5 149.5,215.5 149.0,215.5 148.5,215.6 148.0,216.2 147.5,215.9 147.0,216.4 146.5,216.0 146.0,216.0 145.5,215.9 145.0,216.4 144.5,216.7 144.0,216.1 143.5,216.7 143.0,216.2 142.5,216.5 142.0,216.8 141.5,217.1 141.0,217.3 140.5,216.9 140.0,217.3 139.5,217.0 139.0,216.8 138.5,217.2 138.0,217.4 137.5,216.9 137.0,217.0 136.5,217.2 136.0,217.4 135.5,217.5 135.0,217.5 134.5,217.5 134.0,217.7 133.5,217.7 133.0,218.5 132.5,218.4 132.0,219.4 131.5,219.9 131.0,220.3 130.5,220.9 130.0,220.0 129.5,218.7 129.0,218.3 128.5,217.6 128.0,215.9 127.5,215.8 127.0,215.1 126.5,215.9 126.0,215.4 125.5,216.2 125.0,216.3 124.5,215.9 124.0,215.8 123.5,216.0 123.0,215.7 122.5,216.1 122.0,216.2 121.5,216.4 121.0,216.9 120.5,216.6 120.0,217.1 119.5,217.2 119.0,216.5 118.5,217.2 118.0,217.4 117.5,217.3 117.0,216.9 116.5,217.3 116.0,217.1 115.5,218.0 115.0,217.5 114.5,218.2 114.0,218.4 113.5,218.1 113.0,218.4 112.5,218.3 112.0,218.4 111.5,218.8 111.0,218.7 110.5,218.6 110.0,219.0 109.5,219.4 109.0,219.2 108.5,219.4 108.0,219.4 107.5,219.9 107.0,219.4 106.5,219.3 106.0,219.8 105.5,220.2 105.0,220.2 104.5,219.8 104.0,220.2 103.5,219.7 103.0,219.9 102.5,219.6 102.0,219.5 101.5,220.2 101.0,220.2 100.5,219.9 100.0,219.3 99.5,219.8 99.0,220.0 98.5,220.1 98.0,220.1 97.5,219.5 97.0,219.5 96.5,220.2 96.0,219.7 95.5,220.1 95.0,220.1 94.5,219.8 94.0,220.1 93.5,220.0 93.0,220.1 92.5,219.8 92.0,220.2 91.5,219.5 91.0,219.5 90.5,219.7 90.0,220.3 89.5,219.7 89.0,220.0 88.5,219.4 88.0,219.0 87.5,219.1 87.0,218.9 86.5,218.5 86.0,217.1 85.5,215.1 85.0,215.8 84.5,215.9 84.0,215.5 83.5,216.0 83.0,216.3 82.5,215.5 82.0,215.7 81.5,216.5 81.0,215.8 80.5,216.0 80.0,216.0 79.5,216.4 79.0,217.0 78.5,216.2 78.0,216.5 77.5,216.4 77.0,217.2 76.5,216.8 76.0,216.7 75.5,216.7 75.0,216.9 74.5,216.9 74.0,217.6 73.5,217.5 73.0,218.1 72.5,218.2 72.0,217.6 71.5,218.3 71.0,218.5 70.5,218.6 70.0,218.6 69.5,218.6 69.0,218.9 68.5,218.8 68.0,218.9 67.5,219.8 67.0,219.4 66.5,220.0 66.0,220.2 65.5,219.7 65.0,220.2 64.5,219.5 64.0,220.1 63.5,219.4 63.0,219.8 62.5,220.0 62.0,219.6 61.5,220.3 61.0,220.0 60.5,220.0 60.0,220.2 59.5,219.8 59.0,219.9 58.5,219.6 58.0,219.9 57.5,220.0 57.0,219.8 56.5,220.1 56.0,219.4 55.5,219.6 55.0,220.2 54.5,219.9 54.0,220.0 53.5,219.6 53.0,219.9 52.5,219.7 52.0,219.5 51.5,219.4 51.0,219.7 50.5,219.9 50.0,220.1 49.5,219.4 49.0,219.6 48.5,219.3 48.0,219.7 47.5,220.2 47.0,219.5 46.5,220.1 46.0,219.4 45.5,219.4 45.0,219.1 44.5,218.6 44.0,217.3 43.5,216.4" fill="#bcb020"/><rect x="44.0" y="190.8" width="1.5" height="1" fill="#2aa0c8"/><rect x="48.0" y="190.2" width="1.5" height="1" fill="#2aa0c8"/><rect x="53.5" y="190.0" width="1.5" height="1" fill="#2aa0c8"/><rect x="61.0" y="189.8" width="1.5" height="1" fill="#2aa0c8"/><rect x="62.0" y="189.6" width="1.5" height="1" fill="#2aa0c8"/><rect x="68.0" y="190.1" width="1.5" height="1" fill="#2aa0c8"/><rect x="69.5" y="190.4" width="1.5" height="1" fill="#2aa0c8"/><rect x="71.5" y="191.6" width="1.5" height="1" fill="#2aa0c8"/><rect x="73.5" y="191.6" width="1.5" height="1" fill="#2aa0c8"/><rect x="80.0" y="193.1" width="1.5" height="1" fill="#2aa0c8"/><rect x="80.5" y="193.6" width="1.5" height="1" fill="#2aa0c8"/><rect x="85.5" y="193.2" width="1.5" height="1" fill="#2aa0c8"/><rect x="87.5" y="189.9" width="1.5" height="1" fill="#2aa0c8"/><rect x="90.5" y="189.4" width="1.5" height="1" fill="#2aa0c8"/><rect x="96.0" y="189.6" width="1.5" height="1" fill="#2aa0c8"/><rect x="102.0" y="189.5" width="1.5" height="1" fill="#2aa0c8"/><rect x="105.5" y="189.7" width="1.5" height="1" fill="#2aa0c8"/><rect x="107.5" y="189.7" width="1.5" height="1" fill="#2aa0c8"/><rect x="109.0" y="190.5" width="1.5" height="1" fill="#2aa0c8"/><rect x="109.5" y="190.2" width="1.5" height="1" fill="#2aa0c8"/><rect x="111.0" y="191.0" width="1.5" height="1" fill="#2aa0c8"/><rect x="113.5" y="191.5" width="1.5" height="1" fill="#2aa0c8"/><rect x="115.0" y="192.0" width="1.5" height="1" fill="#2aa0c8"/><rect x="131.0" y="189.5" width="1.5" height="1" fill="#2aa0c8"/><rect x="135.5" y="192.1" width="1.5" height="1" fill="#2aa0c8"/><rect x="137.0" y="191.8" width="1.5" height="1" fill="#2aa0c8"/><rect x="141.5" y="193.0" width="1.5" height="1" fill="#2aa0c8"/><rect x="156.0" y="189.9" width="1.5" height="1" fill="#2aa0c8"/><rect x="165.0" y="189.9" width="1.5" height="1" fill="#2aa0c8"/><rect x="170.5" y="189.7" width="1.5" height="1" fill="#2aa0c8"/><rect x="172.0" y="190.2" width="1.5" height="1" fill="#2aa0c8"/><rect x="174.0" y="189.4" width="1.5" height="1" fill="#2aa0c8"/><rect x="184.5" y="191.0" width="1.5" height="1" fill="#2aa0c8"/><rect x="198.5" y="190.2" width="1.5" height="1" fill="#2aa0c8"/><rect x="203.0" y="188.2" width="1.5" height="1" fill="#2aa0c8"/><rect x="203.5" y="189.6" width="1.5" height="1" fill="#2aa0c8"/><rect x="212.0" y="193.1" width="1.5" height="1" fill="#2aa0c8"/><rect x="221.5" y="188.7" width="1.5" height="1" fill="#2aa0c8"/><rect x="230.5" y="189.8" width="1.5" height="1" fill="#2aa0c8"/><rect x="233.0" y="189.1" width="1.5" height="1" fill="#2aa0c8"/><rect x="241.5" y="189.0" width="1.5" height="1" fill="#2aa0c8"/><rect x="242.0" y="189.3" width="1.5" height="1" fill="#2aa0c8"/><rect x="245.0" y="188.3" width="1.5" height="1" fill="#2aa0c8"/><rect x="245.5" y="188.3" width="1.5" height="1" fill="#2aa0c8"/><rect x="249.0" y="188.4" width="1.5" height="1" fill="#2aa0c8"/><rect x="252.0" y="189.0" width="1.5" height="1" fill="#2aa0c8"/><rect x="255.5" y="190.0" width="1.5" height="1" fill="#2aa0c8"/><rect x="268.5" y="192.4" width="1.5" height="1" fill="#2aa0c8"/><rect x="270.5" y="192.5" width="1.5" height="1" fill="#2aa0c8"/><rect x="274.5" y="190.3" width="1.5" height="1" fill="#2aa0c8"/><rect x="277.0" y="188.9" width="1.5" height="1" fill="#2aa0c8"/><rect x="295.5" y="189.2" width="1.5" height="1" fill="#2aa0c8"/><rect x="298.0" y="189.1" width="1.5" height="1" fill="#2aa0c8"/><rect x="300.5" y="188.5" width="1.5" height="1" fill="#2aa0c8"/><rect x="307.0" y="189.2" width="1.5" height="1" fill="#2aa0c8"/><rect x="313.0" y="190.0" width="1.5" height="1" fill="#2aa0c8"/><rect x="315.0" y="190.5" width="1.5" height="1" fill="#2aa0c8"/><rect x="315.5" y="190.4" width="1.5" height="1" fill="#2aa0c8"/><rect x="318.0" y="191.6" width="1.5" height="1" fill="#2aa0c8"/><rect x="323.5" y="192.5" width="1.5" height="1" fill="#2aa0c8"/><rect x="325.5" y="193.4" width="1.5" height="1" fill="#2aa0c8"/><rect x="327.0" y="191.6" width="1.5" height="1" fill="#2aa0c8"/><rect x="328.0" y="190.8" width="1.5" height="1" fill="#2aa0c8"/><rect x="330.5" y="189.3" width="1.5" height="1" fill="#2aa0c8"/><rect x="333.5" y="188.7" width="1.5" height="1" fill="#2aa0c8"/><rect x="338.0" y="188.8" width="1.5" height="1" fill="#2aa0c8"/><rect x="341.5" y="189.1" width="1.5" height="1" fill="#2aa0c8"/><rect x="346.0" y="189.0" width="1.5" height="1" fill="#2aa0c8"/><rect x="360.0" y="189.2" width="1.5" height="1" fill="#2aa0c8"/><rect x="362.0" y="189.0" width="1.5" height="1" fill="#2aa0c8"/><rect x="364.5" y="189.2" width="1.5" height="1" fill="#2aa0c8"/><rect x="367.0" y="190.3" width="1.5" height="1" fill="#2aa0c8"/><rect x="367.5" y="189.7" width="1.5" height="1" fill="#2aa0c8"/><rect x="369.0" y="190.0" width="1.5" height="1" fill="#2aa0c8"/><rect x="371.0" y="190.2" width="1.5" height="1" fill="#2aa0c8"/><rect x="373.5" y="190.6" width="1.5" height="1" fill="#2aa0c8"/><rect x="378.0" y="191.6" width="1.5" height="1" fill="#2aa0c8"/><rect x="388.5" y="190.1" width="1.5" height="1" fill="#2aa0c8"/><rect x="394.5" y="189.7" width="1.5" height="1" fill="#2aa0c8"/><rect x="397.0" y="190.3" width="1.5" height="1" fill="#2aa0c8"/><rect x="397.5" y="190.6" width="1.5" height="1" fill="#2aa0c8"/><rect x="399.5" y="191.6" width="1.5" height="1" fill="#2aa0c8"/><rect x="409.5" y="190.1" width="1.5" height="1" fill="#2aa0c8"/><rect x="414.5" y="189.7" width="1.5" height="1" fill="#2aa0c8"/><rect x="420.0" y="189.5" width="1.5" height="1" fill="#2aa0c8"/><rect x="422.0" y="189.5" width="1.5" height="1" fill="#2aa0c8"/><rect x="426.0" y="191.2" width="1.5" height="1" fill="#2aa0c8"/><rect x="428.0" y="192.3" width="1.5" height="1" fill="#2aa0c8"/><rect x="429.5" y="192.4" width="1.5" height="1" fill="#2aa0c8"/><rect x="433.0" y="191.0" width="1.5" height="1" fill="#2aa0c8"/><rect x="434.5" y="189.2" width="1.5" height="1" fill="#2aa0c8"/><rect x="435.5" y="189.0" width="1.5" height="1" fill="#2aa0c8"/><rect x="438.5" y="188.4" width="1.5" height="1" fill="#2aa0c8"/><rect x="440.0" y="189.2" width="1.5" height="1" fill="#2aa0c8"/><rect x="444.5" y="188.5" width="1.5" height="1" fill="#2aa0c8"/><rect x="446.0" y="189.5" width="1.5" height="1" fill="#2aa0c8"/><rect x="457.5" y="192.0" width="1.5" height="1" fill="#2aa0c8"/><rect x="458.5" y="192.5" width="1.5" height="1" fill="#2aa0c8"/><rect x="460.0" y="192.9" width="1.5" height="1" fill="#2aa0c8"/><rect x="464.0" y="190.3" width="1.5" height="1" fill="#2aa0c8"/><rect x="464.5" y="189.9" width="1.5" height="1" fill="#2aa0c8"/><rect x="465.0" y="189.7" width="1.5" height="1" fill="#2aa0c8"/><rect x="471.5" y="191.1" width="1.5" height="1" fill="#2aa0c8"/><rect x="474.5" y="191.7" width="1.5" height="1" fill="#2aa0c8"/><rect x="480.0" y="191.9" width="1.5" height="1" fill="#2aa0c8"/><rect x="482.5" y="189.1" width="1.5" height="1" fill="#2aa0c8"/><rect x="486.0" y="188.5" width="1.5" height="1" fill="#2aa0c8"/><rect x="487.5" y="189.1" width="1.5" height="1" fill="#2aa0c8"/><rect x="489.0" y="188.4" width="1.5" height="1" fill="#2aa0c8"/><rect x="44.0" y="218.8" width="1.5" height="1" fill="#2aa0c8"/><rect x="54.5" y="220.4" width="1.5" height="1" fill="#2aa0c8"/><rect x="59.5" y="220.4" width="1.5" height="1" fill="#2aa0c8"/><rect x="63.0" y="219.6" width="1.5" height="1" fill="#2aa0c8"/><rect x="67.5" y="219.1" width="1.5" height="1" fill="#2aa0c8"/><rect x="71.5" y="217.8" width="1.5" height="1" fill="#2aa0c8"/><rect x="74.0" y="217.1" width="1.5" height="1" fill="#2aa0c8"/><rect x="81.0" y="216.7" width="1.5" height="1" fill="#2aa0c8"/><rect x="89.5" y="220.5" width="1.5" height="1" fill="#2aa0c8"/><rect x="90.5" y="219.7" width="1.5" height="1" fill="#2aa0c8"/><rect x="94.0" y="220.0" width="1.5" height="1" fill="#2aa0c8"/><rect x="96.0" y="220.4" width="1.5" height="1" fill="#2aa0c8"/><rect x="98.0" y="220.3" width="1.5" height="1" fill="#2aa0c8"/><rect x="100.0" y="220.1" width="1.5" height="1" fill="#2aa0c8"/><rect x="111.0" y="219.0" width="1.5" height="1" fill="#2aa0c8"/><rect x="115.0" y="218.2" width="1.5" height="1" fill="#2aa0c8"/><rect x="115.5" y="217.3" width="1.5" height="1" fill="#2aa0c8"/><rect x="116.5" y="217.1" width="1.5" height="1" fill="#2aa0c8"/><rect x="122.0" y="216.3" width="1.5" height="1" fill="#2aa0c8"/><rect x="127.5" y="216.1" width="1.5" height="1" fill="#2aa0c8"/><rect x="128.5" y="218.5" width="1.5" height="1" fill="#2aa0c8"/><rect x="130.5" y="220.5" width="1.5" height="1" fill="#2aa0c8"/><rect x="152.0" y="219.3" width="1.5" height="1" fill="#2aa0c8"/><rect x="152.5" y="219.9" width="1.5" height="1" fill="#2aa0c8"/><rect x="153.5" y="219.8" width="1.5" height="1" fill="#2aa0c8"/><rect x="155.5" y="220.1" width="1.5" height="1" fill="#2aa0c8"/><rect x="157.0" y="220.3" width="1.5" height="1" fill="#2aa0c8"/><rect x="160.0" y="220.3" width="1.5" height="1" fill="#2aa0c8"/><rect x="162.0" y="220.2" width="1.5" height="1" fill="#2aa0c8"/><rect x="164.0" y="219.8" width="1.5" height="1" fill="#2aa0c8"/><rect x="164.5" y="219.7" width="1.5" height="1" fill="#2aa0c8"/><rect x="171.0" y="219.6" width="1.5" height="1" fill="#2aa0c8"/><rect x="177.0" y="220.4" width="1.5" height="1" fill="#2aa0c8"/><rect x="177.5" y="219.5" width="1.5" height="1" fill="#2aa0c8"/><rect x="180.0" y="220.1" width="1.5" height="1" fill="#2aa0c8"/><rect x="189.0" y="217.4" width="1.5" height="1" fill="#2aa0c8"/><rect x="193.0" y="215.7" width="1.5" height="1" fill="#2aa0c8"/><rect x="195.0" y="215.7" width="1.5" height="1" fill="#2aa0c8"/><rect x="198.5" y="219.2" width="1.5" height="1" fill="#2aa0c8"/><rect x="219.0" y="221.1" width="1.5" height="1" fill="#2aa0c8"/><rect x="222.5" y="220.7" width="1.5" height="1" fill="#2aa0c8"/><rect x="225.0" y="220.5" width="1.5" height="1" fill="#2aa0c8"/><rect x="233.0" y="220.2" width="1.5" height="1" fill="#2aa0c8"/><rect x="234.5" y="219.8" width="1.5" height="1" fill="#2aa0c8"/><rect x="238.0" y="219.9" width="1.5" height="1" fill="#2aa0c8"/><rect x="242.0" y="220.6" width="1.5" height="1" fill="#2aa0c8"/><rect x="251.0" y="220.7" width="1.5" height="1" fill="#2aa0c8"/><rect x="254.5" y="220.1" width="1.5" height="1" fill="#2aa0c8"/><rect x="262.0" y="218.8" width="1.5" height="1" fill="#2aa0c8"/><rect x="264.5" y="218.2" width="1.5" height="1" fill="#2aa0c8"/><rect x="265.5" y="217.9" width="1.5" height="1" fill="#2aa0c8"/><rect x="266.5" y="217.8" width="1.5" height="1" fill="#2aa0c8"/><rect x="267.0" y="217.3" width="1.5" height="1" fill="#2aa0c8"/><rect x="268.5" y="217.1" width="1.5" height="1" fill="#2aa0c8"/><rect x="270.5" y="217.1" width="1.5" height="1" fill="#2aa0c8"/><rect x="275.5" y="219.9" width="1.5" height="1" fill="#2aa0c8"/><rect x="280.5" y="219.3" width="1.5" height="1" fill="#2aa0c8"/><rect x="284.0" y="217.5" width="1.5" height="1" fill="#2aa0c8"/><rect x="289.5" y="216.7" width="1.5" height="1" fill="#2aa0c8"/><rect x="297.5" y="220.7" width="1.5" height="1" fill="#2aa0c8"/><rect x="299.0" y="220.7" width="1.5" height="1" fill="#2aa0c8"/><rect x="300.0" y="220.6" width="1.5" height="1" fill="#2aa0c8"/><rect x="307.5" y="220.4" width="1.5" height="1" fill="#2aa0c8"/><rect x="308.0" y="221.0" width="1.5" height="1" fill="#2aa0c8"/><rect x="312.5" y="219.4" width="1.5" height="1" fill="#2aa0c8"/><rect x="313.5" y="219.0" width="1.5" height="1" fill="#2aa0c8"/><rect x="321.0" y="217.7" width="1.5" height="1" fill="#2aa0c8"/><rect x="323.5" y="216.8" width="1.5" height="1" fill="#2aa0c8"/><rect x="326.0" y="216.6" width="1.5" height="1" fill="#2aa0c8"/><rect x="332.0" y="221.3" width="1.5" height="1" fill="#2aa0c8"/><rect x="334.5" y="221.2" width="1.5" height="1" fill="#2aa0c8"/><rect x="338.0" y="220.1" width="1.5" height="1" fill="#2aa0c8"/><rect x="341.0" y="220.6" width="1.5" height="1" fill="#2aa0c8"/><rect x="345.0" y="220.7" width="1.5" height="1" fill="#2aa0c8"/><rect x="346.0" y="219.9" width="1.5" height="1" fill="#2aa0c8"/><rect x="348.5" y="220.0" width="1.5" height="1" fill="#2aa0c8"/><rect x="349.5" y="220.3" width="1.5" height="1" fill="#2aa0c8"/><rect x="357.0" y="220.4" width="1.5" height="1" fill="#2aa0c8"/><rect x="358.0" y="220.9" width="1.5" height="1" fill="#2aa0c8"/><rect x="359.5" y="220.7" width="1.5" height="1" fill="#2aa0c8"/><rect x="366.5" y="219.8" width="1.5" height="1" fill="#2aa0c8"/><rect x="371.5" y="219.0" width="1.5" height="1" fill="#2aa0c8"/><rect x="374.0" y="218.2" width="1.5" height="1" fill="#2aa0c8"/><rect x="377.0" y="218.1" width="1.5" height="1" fill="#2aa0c8"/><rect x="379.0" y="218.1" width="1.5" height="1" fill="#2aa0c8"/><rect x="383.0" y="217.1" width="1.5" height="1" fill="#2aa0c8"/><rect x="385.0" y="217.8" width="1.5" height="1" fill="#2aa0c8"/><rect x="396.5" y="219.3" width="1.5" height="1" fill="#2aa0c8"/><rect x="408.0" y="218.1" width="1.5" height="1" fill="#2aa0c8"/><rect x="418.0" y="219.6" width="1.5" height="1" fill="#2aa0c8"/><rect x="421.5" y="220.1" width="1.5" height="1" fill="#2aa0c8"/><rect x="422.5" y="220.0" width="1.5" height="1" fill="#2aa0c8"/><rect x="423.0" y="220.3" width="1.5" height="1" fill="#2aa0c8"/><rect x="428.5" y="217.5" width="1.5" height="1" fill="#2aa0c8"/><rect x="432.5" y="218.6" width="1.5" height="1" fill="#2aa0c8"/><rect x="442.0" y="220.5" width="1.5" height="1" fill="#2aa0c8"/><rect x="445.5" y="220.3" width="1.5" height="1" fill="#2aa0c8"/><rect x="449.5" y="219.1" width="1.5" height="1" fill="#2aa0c8"/><rect x="456.5" y="218.3" width="1.5" height="1" fill="#2aa0c8"/><rect x="461.0" y="216.4" width="1.5" height="1" fill="#2aa0c8"/><rect x="465.0" y="219.4" width="1.5" height="1" fill="#2aa0c8"/><rect x="480.0" y="217.2" width="1.5" height="1" fill="#2aa0c8"/><rect x="485.5" y="221.4" width="1.5" height="1" fill="#2aa0c8"/><rect x="494" y="188.5" width="20.5" height="33.5" fill="#bcb020"/><path d="M494,195.5 A6.5,9.5 0 0 1 494,215.5 Z" fill="#000"/><line x1="498" y1="207.5" x2="507" y2="207.5" stroke="#000" stroke-width="1.2"/><path d="M494,195.5 A6.5,9.5 0 0 1 494,215.5" fill="none" stroke="#1f8fb0" stroke-width="0.8"/><polygon points="43.5,271 43.5,266 56,271" fill="#d8b820"/><polygon points="493.5,271 493.5,266 481,271" fill="#d8b820"/><polygon points="262,145 275,145 268.5,156" fill="#dcdcdc"/></g></svg>
<span style="left:2px;top:142.1px;line-height:12px;font-size:8px;color:#d0b020;letter-spacing:0px;transform:scaleX(0.87);transform-origin:0 50%;">2.25</span>
<span style="left:2px;top:166.2px;line-height:12px;font-size:8px;color:#d0b020;letter-spacing:0px;transform:scaleX(0.87);transform-origin:0 50%;">1.85</span>
<span style="left:2px;top:190.3px;line-height:12px;font-size:8px;color:#d0b020;letter-spacing:0px;transform:scaleX(0.87);transform-origin:0 50%;">1.45</span>
<span style="left:2px;top:214.4px;line-height:12px;font-size:8px;color:#d0b020;letter-spacing:0px;transform:scaleX(0.87);transform-origin:0 50%;">1.05</span>
<span style="left:2px;top:238.5px;line-height:12px;font-size:8px;color:#d0b020;letter-spacing:0px;transform:scaleX(0.87);transform-origin:0 50%;">0.65</span>
<span style="left:2px;top:262.6px;line-height:12px;font-size:8px;color:#d0b020;letter-spacing:0px;transform:scaleX(0.87);transform-origin:0 50%;">0.25</span>
<span style="left:32px;top:275.8px;line-height:12px;font-size:8px;color:#e0e0e0;letter-spacing:0px;transform:scaleX(0.87);transform-origin:0 50%;">-25 ms</span>
<span style="left:120px;top:275.8px;line-height:12px;font-size:8px;color:#e0e0e0;letter-spacing:0px;transform:scaleX(0.87);transform-origin:0 50%;">-15 ms</span>
<span style="left:208px;top:275.8px;line-height:12px;font-size:8px;color:#e0e0e0;letter-spacing:0px;transform:scaleX(0.87);transform-origin:0 50%;">-5 ms</span>
<span style="left:295.6px;top:275.8px;line-height:12px;font-size:8px;color:#e0e0e0;letter-spacing:0px;transform:scaleX(0.87);transform-origin:0 50%;">5 ms</span>
<span style="left:384.4px;top:275.8px;line-height:12px;font-size:8px;color:#e0e0e0;letter-spacing:0px;transform:scaleX(0.87);transform-origin:0 50%;">15 ms</span>
<span style="left:472px;top:275.8px;line-height:12px;font-size:8px;color:#e0e0e0;letter-spacing:0px;transform:scaleX(0.87);transform-origin:0 50%;">25 ms</span>
<div style="left:1px;top:272px;width:30px;height:19.5px;background:#e8e8e8;"></div>
<div style="left:19px;top:272px;width:1px;height:19.5px;background:#cfcfcf;"></div>
<span style="left:-90.0px;width:200px;text-align:center;top:276.3px;line-height:12px;font-size:9px;color:#111;letter-spacing:0px;transform:scaleX(0.87);transform-origin:50% 50%;">X</span>
<svg style="left:22px;top:280.5px;" width="6" height="4" viewBox="0 0 6 4"><polygon points="0,0 6,0 3.0,3.5" fill="#000"/></svg>
<div style="left:518px;top:123px;width:199px;height:169px;background:#f0f0f0;"></div>
<div style="left:518px;top:124px;width:198px;height:13.5px;background:#d9d9d9;"></div>
<div style="left:518px;top:124px;width:2px;height:168px;background:#e4e4e4;"></div>
<span style="left:522px;top:125.5px;line-height:12px;font-size:8px;color:#222;letter-spacing:0px;transform:scaleX(0.87);transform-origin:0 50%;">Measurements</span>
<svg style="left:683px;top:128.3px;" width="7" height="6" viewBox="0 0 7 6"><rect x="0.6" y="2.4" width="4" height="3" fill="none" stroke="#333" stroke-width="1.1"/><path d="M2.2,2.2 V0.6 H6.4 V3.6 H4.8" fill="none" stroke="#333" stroke-width="1.1"/></svg>
<svg style="left:702.6px;top:128.6px;" width="6" height="6" viewBox="0 0 6 6"><path d="M0.6,0.6 L5.4,5.4 M5.4,0.6 L0.6,5.4" stroke="#222" stroke-width="1.3"/></svg>
<svg style="left:522.5px;top:145.5px;" width="10" height="10" viewBox="0 0 10 10"><defs><linearGradient id="pg3" x1="0" y1="0" x2="0" y2="1"><stop offset="0" stop-color="#8ee060"/><stop offset="1" stop-color="#2a9a1c"/></linearGradient></defs><path d="M3.7,0.5 H6.3 V3.7 H9.5 V6.3 H6.3 V9.5 H3.7 V6.3 H0.5 V3.7 H3.7 Z" fill="url(#pg3)" stroke="#3a9a2a" stroke-width="0.5"/></svg>
<span style="left:534px;top:145.0px;line-height:12px;font-size:8px;color:#222;letter-spacing:0px;transform:scaleX(0.87);transform-origin:0 50%;">Add</span>
<svg style="left:555.5px;top:153.5px;" width="6" height="4" viewBox="0 0 6 4"><polygon points="0,0 6,0 3.0,3.5" fill="#000"/></svg>
<svg style="left:567px;top:147.5px;" width="11" height="4" viewBox="0 0 11 4"><defs><linearGradient id="mg" x1="0" y1="0" x2="0" y2="1"><stop offset="0" stop-color="#f07070"/><stop offset="1" stop-color="#b01818"/></linearGradient></defs><rect x="0.5" y="0.5" width="10" height="3" rx="1" fill="url(#mg)"/></svg>
<svg style="left:584.5px;top:153.5px;" width="6" height="4" viewBox="0 0 6 4"><polygon points="0,0 6,0 3.0,3.5" fill="#000"/></svg>
<div style="left:597.5px;top:142.5px;width:14.0px;height:15.0px;background:#e8eef8;box-sizing:border-box;border:1px solid #b8b8c8;"></div>
<svg style="left:598px;top:143px;" width="14" height="14" viewBox="0 0 14 14"><line x1="2" y1="2" x2="12" y2="12" stroke="#c8a828" stroke-width="2"/></svg>
<span style="left:614px;top:145.0px;line-height:12px;font-size:8px;color:#222;letter-spacing:0px;transform:scaleX(0.87);transform-origin:0 50%;">Edit</span>
<div style="left:637px;top:143px;width:17px;height:14px;background:#eeeeee;box-sizing:border-box;border:1px solid #c8c8c8;"></div>
<svg style="left:638px;top:144px;" width="15" height="12" viewBox="0 0 15 12"><rect x="1" y="2.5" width="2.5" height="2.5" fill="#3a7ad0"/><rect x="1" y="7" width="2.5" height="2.5" fill="#3a7ad0"/><line x1="5" y1="4" x2="14" y2="4" stroke="#c8c8c8"/><line x1="5" y1="8.5" x2="14" y2="8.5" stroke="#c8c8c8"/></svg>
<span style="left:655px;top:145.0px;line-height:12px;font-size:8px;color:#222;letter-spacing:0px;transform:scaleX(0.87);transform-origin:0 50%;">Show</span>
<svg style="left:675px;top:153.5px;" width="6" height="4" viewBox="0 0 6 4"><polygon points="0,0 6,0 3.0,3.5" fill="#000"/></svg>
<svg style="left:687px;top:143px;" width="15" height="15" viewBox="0 0 15 15"><defs><linearGradient id="gg5" x1="0" y1="0" x2="1" y2="1"><stop offset="0" stop-color="#f6f8fa"/><stop offset="0.55" stop-color="#d4dae0"/><stop offset="1" stop-color="#8a96a2"/></linearGradient></defs><polygon points="14.81,8.22 14.53,9.63 12.39,10.12 11.79,11.02 12.16,13.18 10.96,13.98 9.11,12.81 8.04,13.02 6.78,14.81 5.37,14.53 4.88,12.39 3.98,11.79 1.82,12.16 1.02,10.96 2.19,9.11 1.98,8.04 0.19,6.78 0.47,5.37 2.61,4.88 3.21,3.98 2.84,1.82 4.04,1.02 5.89,2.19 6.96,1.98 8.22,0.19 9.63,0.47 10.12,2.61 11.02,3.21 13.18,2.84 13.98,4.04 12.81,5.89 13.02,6.96" fill="url(#gg5)" stroke="#74808c" stroke-width="0.82" stroke-linejoin="round"/><circle cx="7.05" cy="7.50" r="3.00" fill="#46525e"/><circle cx="8.55" cy="6.90" r="2.25" fill="#dfe4e9"/></svg>
<svg style="left:706px;top:153.5px;" width="6" height="4" viewBox="0 0 6 4"><polygon points="0,0 6,0 3.0,3.5" fill="#000"/></svg>
<div style="left:520px;top:161px;width:179px;height:131px;background:#fff;border-top:1px solid #d0d0d0;"></div>
<div style="left:520px;top:162px;width:6.5px;height:130px;background:#f4f4f4;"></div>
<div style="left:526px;top:175.8px;width:173px;height:1.0px;background:#fff;"></div>
<div style="left:526px;top:190px;width:173px;height:1px;background:#e4e4e4;"></div>
<div style="left:526px;top:204.2px;width:173px;height:1.0px;background:#e4e4e4;"></div>
<div style="left:549px;top:162px;width:1px;height:43px;background:#e4e4e4;"></div>
<div style="left:589px;top:162px;width:1px;height:43px;background:#e4e4e4;"></div>
<span style="left:470.0px;width:200px;text-align:center;top:164.0px;line-height:12px;font-size:8px;color:#222;letter-spacing:0px;transform:scaleX(0.87);transform-origin:50% 50%;">Name</span>
<span style="left:544.0px;width:200px;text-align:center;top:164.0px;line-height:12px;font-size:8px;color:#222;letter-spacing:0px;transform:scaleX(0.87);transform-origin:50% 50%;">Value</span>
<span style="left:528px;top:177.1px;line-height:12px;font-size:8px;color:#222;letter-spacing:0px;transform:scaleX(0.87);transform-origin:0 50%;">C1</span>
<span style="left:552px;top:177.1px;line-height:12px;font-size:8px;color:#222;letter-spacing:0px;transform:scaleX(0.87);transform-origin:0 50%;">Peak2Peak</span>
<span style="left:594px;top:177.1px;line-height:12px;font-size:8px;color:#222;letter-spacing:0px;transform:scaleX(0.87);transform-origin:0 50%;">0.51029 V</span>
<span style="left:528px;top:191.8px;line-height:12px;font-size:8px;color:#222;letter-spacing:0px;transform:scaleX(0.87);transform-origin:0 50%;">C1</span>
<span style="left:552px;top:191.8px;line-height:12px;font-size:8px;color:#222;letter-spacing:0px;transform:scaleX(0.87);transform-origin:0 50%;">AC RMS</span>
<span style="left:595px;top:191.8px;line-height:12px;font-size:8px;color:#222;letter-spacing:0px;transform:scaleX(0.87);transform-origin:0 50%;">143.99 mV&#772;</span>
<div style="left:699px;top:161px;width:17px;height:131px;background:#f0f0f0;"></div>
<svg style="left:703px;top:167px;" width="9" height="6" viewBox="0 0 9 6"><polyline points="0.5,5 4.5,1 8.5,5" fill="none" stroke="#c0c0c0" stroke-width="1.1"/></svg>
<svg style="left:703px;top:279px;" width="9" height="6" viewBox="0 0 9 6"><polyline points="0.5,1 4.5,5 8.5,1" fill="none" stroke="#c0c0c0" stroke-width="1.1"/></svg>
<div style="left:716px;top:123px;width:1px;height:169px;background:#d0d0d0;"></div>
<div style="left:717px;top:123px;width:196px;height:532px;background:#f0f0f0;"></div>
<svg style="left:720.5px;top:129.5px;" width="10" height="6" viewBox="0 0 10 6"><defs><linearGradient id="ua4" x1="0" y1="0" x2="0" y2="1"><stop offset="0" stop-color="#9ee08a"/><stop offset="1" stop-color="#3a9a30"/></linearGradient></defs><path d="M0.5,1.9 H6 V0.3 L9.5,3 L6,5.7 V4.1 H0.5 Z" fill="url(#ua4)" stroke="#4a9a40" stroke-width="0.4"/></svg>
<div style="left:894.5px;top:141px;width:1.0px;height:514px;background:#f8f8f8;"></div>
<div style="left:717px;top:123px;width:196px;height:1px;background:#dedede;"></div>
<svg style="left:899px;top:147px;" width="10" height="6" viewBox="0 0 10 6"><polyline points="0.5,5 5,1 9.5,5" fill="none" stroke="#b4b4b4" stroke-width="1.1"/></svg>
<svg style="left:899px;top:643px;" width="10" height="6" viewBox="0 0 10 6"><polyline points="0.5,1 5,5 9.5,1" fill="none" stroke="#c8c8c8" stroke-width="1.1"/></svg>
<div style="left:718px;top:142px;width:171.5px;height:63.5px;box-sizing:border-box;border:2px solid #d6d6d6;background:#f0f0f0;"></div>
<div style="left:720.7px;top:144.4px;width:12.5px;height:12.0px;background:#fff;box-sizing:border-box;border:1px solid #7a7a7a;"></div>
<svg style="left:720.7px;top:144.4px;" width="13" height="12" viewBox="0 0 13 12"><polyline points="2.5,6.2 5,8.8 10.2,3.2" fill="none" stroke="#222" stroke-width="1.1"/></svg>
<span style="left:738px;top:145.0px;line-height:12px;font-size:8px;color:#111;letter-spacing:0px;transform:scaleX(0.87);transform-origin:0 50%;">Time</span>
<div style="left:866.4px;top:145px;width:20.200000000000045px;height:11.400000000000006px;background:#dcdcdc;box-sizing:border-box;border:1px solid #c8c8c8;"></div>
<svg style="left:871.0px;top:145.2px;" width="11" height="11" viewBox="0 0 11 11"><defs><linearGradient id="gg6" x1="0" y1="0" x2="1" y2="1"><stop offset="0" stop-color="#f6f8fa"/><stop offset="0.55" stop-color="#d4dae0"/><stop offset="1" stop-color="#8a96a2"/></linearGradient></defs><polygon points="10.86,6.03 10.66,7.06 9.09,7.42 8.65,8.08 8.92,9.67 8.04,10.25 6.68,9.39 5.90,9.55 4.97,10.86 3.94,10.66 3.58,9.09 2.92,8.65 1.33,8.92 0.75,8.04 1.61,6.68 1.45,5.90 0.14,4.97 0.34,3.94 1.91,3.58 2.35,2.92 2.08,1.33 2.96,0.75 4.32,1.61 5.10,1.45 6.03,0.14 7.06,0.34 7.42,1.91 8.08,2.35 9.67,2.08 10.25,2.96 9.39,4.32 9.55,5.10" fill="url(#gg6)" stroke="#74808c" stroke-width="0.70" stroke-linejoin="round"/><circle cx="5.17" cy="5.50" r="2.20" fill="#46525e"/><circle cx="6.27" cy="5.06" r="1.65" fill="#dfe4e9"/></svg>
<span style="left:724px;top:159.5px;line-height:12px;font-size:8px;color:#111;letter-spacing:0px;transform:scaleX(0.87);transform-origin:0 50%;">Position:</span>
<div style="left:785.4px;top:158.2px;width:101.20000000000005px;height:13.800000000000011px;background:#fff;box-sizing:border-box;border:1px solid #c8c8c8;"></div>
<span style="left:788.4px;top:159.6px;line-height:12px;font-size:10.5px;color:#2a2a2a;letter-spacing:-0.1px;-webkit-text-stroke:0;">0 s</span>
<svg style="left:874.6px;top:162.1px;" width="8" height="6" viewBox="0 0 8 6"><polyline points="0.5,1 4.0,4.5 7.5,1" fill="none" stroke="#555" stroke-width="1"/></svg>
<span style="left:724px;top:174.5px;line-height:12px;font-size:8px;color:#111;letter-spacing:0px;transform:scaleX(0.87);transform-origin:0 50%;">Base:</span>
<div style="left:785.4px;top:173.7px;width:101.20000000000005px;height:13.700000000000017px;background:#fff;box-sizing:border-box;border:1px solid #c8c8c8;"></div>
<span style="left:788.4px;top:175.05px;line-height:12px;font-size:10.5px;color:#2a2a2a;letter-spacing:-0.1px;-webkit-text-stroke:0;">5 ms/div</span>
<svg style="left:874.6px;top:177.55px;" width="8" height="6" viewBox="0 0 8 6"><polyline points="0.5,1 4.0,4.5 7.5,1" fill="none" stroke="#555" stroke-width="1"/></svg>
<div style="left:721px;top:188.2px;width:166px;height:14.800000000000011px;background:#c5dff3;box-sizing:border-box;border:1px solid #b8d4ee;"></div>
<svg style="left:801px;top:190.5px;" width="7" height="11" viewBox="0 0 7 11"><g transform="rotate(180 3.5 5.5)"><defs><linearGradient id="ua3" x1="0" y1="0" x2="1" y2="0"><stop offset="0" stop-color="#9ee08a"/><stop offset="1" stop-color="#3a9a30"/></linearGradient></defs><path d="M3,0.5 L6.2,4.2 H4.6 V10.5 H1.4 V4.2 H-0.2 Z" transform="translate(0.3,0)" fill="url(#ua3)" stroke="#4a9a40" stroke-width="0.5"/></g></svg>
<svg style="left:721px;top:210px;" width="14" height="14" viewBox="0 0 14 14"><defs><linearGradient id="gg7" x1="0" y1="0" x2="1" y2="1"><stop offset="0" stop-color="#f6f8fa"/><stop offset="0.55" stop-color="#d4dae0"/><stop offset="1" stop-color="#8a96a2"/></linearGradient></defs><polygon points="13.83,7.67 13.56,8.99 11.57,9.44 11.00,10.29 11.35,12.30 10.23,13.05 8.50,11.96 7.51,12.16 6.33,13.83 5.01,13.56 4.56,11.57 3.71,11.00 1.70,11.35 0.95,10.23 2.04,8.50 1.84,7.51 0.17,6.33 0.44,5.01 2.43,4.56 3.00,3.71 2.65,1.70 3.77,0.95 5.50,2.04 6.49,1.84 7.67,0.17 8.99,0.44 9.44,2.43 10.29,3.00 12.30,2.65 13.05,3.77 11.96,5.50 12.16,6.49" fill="url(#gg7)" stroke="#74808c" stroke-width="0.77" stroke-linejoin="round"/><circle cx="6.58" cy="7.00" r="2.80" fill="#46525e"/><circle cx="7.98" cy="6.44" r="2.10" fill="#dfe4e9"/></svg>
<span style="left:740px;top:212.8px;line-height:12px;font-size:8px;color:#111;letter-spacing:0px;transform:scaleX(0.87);transform-origin:0 50%;">Options</span>
<svg style="left:879px;top:216.5px;" width="6" height="4" viewBox="0 0 6 4"><polygon points="0,0 6,0 3.0,3.5" fill="#000"/></svg>
<div style="left:719px;top:231px;width:169.70000000000005px;height:20px;background:#e1e1e1;box-sizing:border-box;border:1px solid #cdcdcd;"></div>
<svg style="left:721.5px;top:235.5px;" width="10" height="10" viewBox="0 0 10 10"><defs><linearGradient id="pg4" x1="0" y1="0" x2="0" y2="1"><stop offset="0" stop-color="#8ee060"/><stop offset="1" stop-color="#2a9a1c"/></linearGradient></defs><path d="M3.8,0.5 H6.2 V3.8 H9.5 V6.2 H6.2 V9.5 H3.8 V6.2 H0.5 V3.8 H3.8 Z" fill="url(#pg4)" stroke="#3a9a2a" stroke-width="0.5"/></svg>
<span style="left:734px;top:235.5px;line-height:12px;font-size:8px;color:#111;letter-spacing:0px;transform:scaleX(0.87);transform-origin:0 50%;">Add Channel</span>
<svg style="left:879px;top:239.5px;" width="6" height="4" viewBox="0 0 6 4"><polygon points="0,0 6,0 3.0,3.5" fill="#000"/></svg>
<div style="left:717.8px;top:251.6px;width:171.70000000000005px;height:47.400000000000006px;box-sizing:border-box;border:2.4px solid #dcb000;background:#f0f0f0;"></div>
<div style="left:721px;top:254.6px;width:12.5px;height:12.000000000000028px;background:#fff;box-sizing:border-box;border:1px solid #7a7a7a;"></div>
<svg style="left:721px;top:254.6px;" width="13" height="12" viewBox="0 0 13 12"><polyline points="2.5,6.2 5,8.8 10.2,3.2" fill="none" stroke="#222" stroke-width="1.1"/></svg>
<span style="left:738px;top:255.5px;line-height:12px;font-size:8px;color:#111;letter-spacing:0px;transform:scaleX(0.87);transform-origin:0 50%;">Channel 1</span>
<div style="left:866.5px;top:255px;width:20.100000000000023px;height:11.699999999999989px;background:#dcdcdc;box-sizing:border-box;border:1px solid #c8c8c8;"></div>
<svg style="left:871.05px;top:255.35000000000002px;" width="11" height="11" viewBox="0 0 11 11"><defs><linearGradient id="gg8" x1="0" y1="0" x2="1" y2="1"><stop offset="0" stop-color="#f6f8fa"/><stop offset="0.55" stop-color="#d4dae0"/><stop offset="1" stop-color="#8a96a2"/></linearGradient></defs><polygon points="10.86,6.03 10.66,7.06 9.09,7.42 8.65,8.08 8.92,9.67 8.04,10.25 6.68,9.39 5.90,9.55 4.97,10.86 3.94,10.66 3.58,9.09 2.92,8.65 1.33,8.92 0.75,8.04 1.61,6.68 1.45,5.90 0.14,4.97 0.34,3.94 1.91,3.58 2.35,2.92 2.08,1.33 2.96,0.75 4.32,1.61 5.10,1.45 6.03,0.14 7.06,0.34 7.42,1.91 8.08,2.35 9.67,2.08 10.25,2.96 9.39,4.32 9.55,5.10" fill="url(#gg8)" stroke="#74808c" stroke-width="0.70" stroke-linejoin="round"/><circle cx="5.17" cy="5.50" r="2.20" fill="#46525e"/><circle cx="6.27" cy="5.06" r="1.65" fill="#dfe4e9"/></svg>
<span style="left:723px;top:269.9px;line-height:12px;font-size:8px;color:#111;letter-spacing:0px;transform:scaleX(0.87);transform-origin:0 50%;">Offset:</span>
<div style="left:785.3px;top:268.6px;width:101.10000000000002px;height:13.599999999999966px;background:#fff;box-sizing:border-box;border:1px solid #c8c8c8;"></div>
<span style="left:788.3px;top:269.9px;line-height:12px;font-size:10.5px;color:#2a2a2a;letter-spacing:-0.1px;-webkit-text-stroke:0;">&#8722;1.25 V</span>
<svg style="left:874.4px;top:272.4px;" width="8" height="6" viewBox="0 0 8 6"><polyline points="0.5,1 4.0,4.5 7.5,1" fill="none" stroke="#555" stroke-width="1"/></svg>
<span style="left:723px;top:284.5px;line-height:12px;font-size:8px;color:#111;letter-spacing:0px;transform:scaleX(0.87);transform-origin:0 50%;">Range:</span>
<div style="left:785.3px;top:283.5px;width:101.10000000000002px;height:13.600000000000023px;background:#fff;box-sizing:border-box;border:1px solid #c8c8c8;"></div>
<span style="left:788.3px;top:284.8px;line-height:12px;font-size:10.5px;color:#2a2a2a;letter-spacing:-0.1px;-webkit-text-stroke:0;">200 mV/div</span>
<svg style="left:874.4px;top:287.3px;" width="8" height="6" viewBox="0 0 8 6"><polyline points="0.5,1 4.0,4.5 7.5,1" fill="none" stroke="#555" stroke-width="1"/></svg>
<div style="left:717.8px;top:300.40000000000003px;width:171.70000000000005px;height:47.39999999999998px;box-sizing:border-box;border:2.4px solid #14a8e0;background:#f0f0f0;"></div>
<div style="left:721px;top:303.40000000000003px;width:12.5px;height:12.0px;background:#fff;box-sizing:border-box;border:1px solid #7a7a7a;"></div>
<svg style="left:721px;top:303.40000000000003px;" width="13" height="12" viewBox="0 0 13 12"><polyline points="2.5,6.2 5,8.8 10.2,3.2" fill="none" stroke="#222" stroke-width="1.1"/></svg>
<span style="left:738px;top:304.3px;line-height:12px;font-size:8px;color:#111;letter-spacing:0px;transform:scaleX(0.87);transform-origin:0 50%;">Channel 2</span>
<div style="left:866.5px;top:303.8px;width:20.100000000000023px;height:11.699999999999989px;background:#dcdcdc;box-sizing:border-box;border:1px solid #c8c8c8;"></div>
<svg style="left:871.05px;top:304.15px;" width="11" height="11" viewBox="0 0 11 11"><defs><linearGradient id="gg9" x1="0" y1="0" x2="1" y2="1"><stop offset="0" stop-color="#f6f8fa"/><stop offset="0.55" stop-color="#d4dae0"/><stop offset="1" stop-color="#8a96a2"/></linearGradient></defs><polygon points="10.86,6.03 10.66,7.06 9.09,7.42 8.65,8.08 8.92,9.67 8.04,10.25 6.68,9.39 5.90,9.55 4.97,10.86 3.94,10.66 3.58,9.09 2.92,8.65 1.33,8.92 0.75,8.04 1.61,6.68 1.45,5.90 0.14,4.97 0.34,3.94 1.91,3.58 2.35,2.92 2.08,1.33 2.96,0.75 4.32,1.61 5.10,1.45 6.03,0.14 7.06,0.34 7.42,1.91 8.08,2.35 9.67,2.08 10.25,2.96 9.39,4.32 9.55,5.10" fill="url(#gg9)" stroke="#74808c" stroke-width="0.70" stroke-linejoin="round"/><circle cx="5.17" cy="5.50" r="2.20" fill="#46525e"/><circle cx="6.27" cy="5.06" r="1.65" fill="#dfe4e9"/></svg>
<span style="left:723px;top:318.7px;line-height:12px;font-size:8px;color:#111;letter-spacing:0px;transform:scaleX(0.87);transform-origin:0 50%;">Offset:</span>
<div style="left:785.3px;top:317.40000000000003px;width:101.10000000000002px;height:13.599999999999966px;background:#fff;box-sizing:border-box;border:1px solid #c8c8c8;"></div>
<span style="left:788.3px;top:318.70000000000005px;line-height:12px;font-size:10.5px;color:#2a2a2a;letter-spacing:-0.1px;-webkit-text-stroke:0;">&#8722;1.25 V</span>
<svg style="left:874.4px;top:321.20000000000005px;" width="8" height="6" viewBox="0 0 8 6"><polyline points="0.5,1 4.0,4.5 7.5,1" fill="none" stroke="#555" stroke-width="1"/></svg>
<span style="left:723px;top:333.3px;line-height:12px;font-size:8px;color:#111;letter-spacing:0px;transform:scaleX(0.87);transform-origin:0 50%;">Range:</span>
<div style="left:785.3px;top:332.3px;width:101.10000000000002px;height:13.600000000000023px;background:#fff;box-sizing:border-box;border:1px solid #c8c8c8;"></div>
<span style="left:788.3px;top:333.6px;line-height:12px;font-size:10.5px;color:#2a2a2a;letter-spacing:-0.1px;-webkit-text-stroke:0;">200 mV/div</span>
<svg style="left:874.4px;top:336.1px;" width="8" height="6" viewBox="0 0 8 6"><polyline points="0.5,1 4.0,4.5 7.5,1" fill="none" stroke="#555" stroke-width="1"/></svg>
<div style="left:0px;top:291.5px;width:717px;height:4.5px;background:#e2e2e2;"></div>
<div style="left:0px;top:291.5px;width:515px;height:1.5px;background:#c4c4c4;"></div>
<div style="left:515px;top:291px;width:201px;height:2px;background:#9c9c9c;"></div>
<div style="left:0px;top:295px;width:716px;height:1px;background:#c8c8c8;"></div>
<div style="left:0px;top:296px;width:716px;height:13.5px;background:#d9d9d9;"></div>
<span style="left:3px;top:297.0px;line-height:12px;font-size:8.5px;color:#222;letter-spacing:0px;transform:scaleX(0.87);transform-origin:0 50%;">FFT</span>
<svg style="left:683px;top:300px;" width="7" height="6" viewBox="0 0 7 6"><rect x="0.6" y="2.4" width="4" height="3" fill="none" stroke="#333" stroke-width="1.1"/><path d="M2.2,2.2 V0.6 H6.4 V3.6 H4.8" fill="none" stroke="#333" stroke-width="1.1"/></svg>
<svg style="left:702.6px;top:300.3px;" width="6" height="6" viewBox="0 0 6 6"><path d="M0.6,0.6 L5.4,5.4 M5.4,0.6 L0.6,5.4" stroke="#222" stroke-width="1.3"/></svg>
<div style="left:0px;top:309.5px;width:716px;height:29.0px;background:#f0f0f0;"></div>
<span style="left:2px;top:313.0px;line-height:12px;font-size:8px;color:#111;letter-spacing:0px;transform:scaleX(0.87);transform-origin:0 50%;">Start:</span>
<span style="left:2px;top:326.5px;line-height:12px;font-size:8px;color:#111;letter-spacing:0px;transform:scaleX(0.87);transform-origin:0 50%;">Center:</span>
<div style="left:53.5px;top:312.6px;width:62.0px;height:12.0px;background:#fff;box-sizing:border-box;border:1px solid #b0b0b0;"></div>
<span style="left:56.5px;top:313.1px;line-height:12px;font-size:8px;color:#111;letter-spacing:0px;transform:scaleX(0.87);transform-origin:0 50%;">0 Hz</span>
<svg style="left:103.5px;top:315.6px;" width="8" height="6" viewBox="0 0 8 6"><polyline points="0.5,1 4.0,4.5 7.5,1" fill="none" stroke="#555" stroke-width="1"/></svg>
<div style="left:53.5px;top:326.4px;width:62.0px;height:12.0px;background:#fff;box-sizing:border-box;border:1px solid #b0b0b0;"></div>
<span style="left:56.5px;top:326.9px;line-height:12px;font-size:8px;color:#111;letter-spacing:0px;transform:scaleX(0.87);transform-origin:0 50%;">149.88 kHz</span>
<svg style="left:103.5px;top:329.4px;" width="8" height="6" viewBox="0 0 8 6"><polyline points="0.5,1 4.0,4.5 7.5,1" fill="none" stroke="#555" stroke-width="1"/></svg>
<span style="left:118px;top:313.0px;line-height:12px;font-size:8px;color:#111;letter-spacing:0px;transform:scaleX(0.87);transform-origin:0 50%;">Stop:</span>
<span style="left:118px;top:326.5px;line-height:12px;font-size:8px;color:#111;letter-spacing:0px;transform:scaleX(0.87);transform-origin:0 50%;">Span:</span>
<div style="left:169px;top:312.9px;width:62px;height:11.800000000000011px;background:#fff;box-sizing:border-box;border:1px solid #b0b0b0;"></div>
<span style="left:172px;top:313.29999999999995px;line-height:12px;font-size:8px;color:#111;letter-spacing:0px;transform:scaleX(0.87);transform-origin:0 50%;">299.760192 k</span>
<svg style="left:219px;top:315.79999999999995px;" width="8" height="6" viewBox="0 0 8 6"><polyline points="0.5,1 4.0,4.5 7.5,1" fill="none" stroke="#555" stroke-width="1"/></svg>
<div style="left:169px;top:326.4px;width:62px;height:12.0px;background:#fff;box-sizing:border-box;border:1px solid #b0b0b0;"></div>
<span style="left:172px;top:326.9px;line-height:12px;font-size:8px;color:#111;letter-spacing:0px;transform:scaleX(0.87);transform-origin:0 50%;">299.76 kHz</span>
<svg style="left:219px;top:329.4px;" width="8" height="6" viewBox="0 0 8 6"><polyline points="0.5,1 4.0,4.5 7.5,1" fill="none" stroke="#555" stroke-width="1"/></svg>
<span style="left:234px;top:313.0px;line-height:12px;font-size:8px;color:#111;letter-spacing:0px;transform:scaleX(0.87);transform-origin:0 50%;">Top:</span>
<span style="left:234px;top:326.5px;line-height:12px;font-size:8px;color:#111;letter-spacing:0px;transform:scaleX(0.87);transform-origin:0 50%;">Units:</span>
<div style="left:274.3px;top:313px;width:72.30000000000001px;height:12px;background:#fff;box-sizing:border-box;border:1px solid #b0b0b0;"></div>
<span style="left:277.3px;top:313.5px;line-height:12px;font-size:8px;color:#111;letter-spacing:0px;transform:scaleX(0.87);transform-origin:0 50%;">40 dBV&#772;</span>
<svg style="left:334.6px;top:316.0px;" width="8" height="6" viewBox="0 0 8 6"><polyline points="0.5,1 4.0,4.5 7.5,1" fill="none" stroke="#555" stroke-width="1"/></svg>
<div style="left:274.3px;top:326.6px;width:72.30000000000001px;height:11.799999999999955px;background:#e5e5e5;box-sizing:border-box;border:1px solid #cfcfcf;"></div>
<span style="left:277.3px;top:327.0px;line-height:12px;font-size:8px;color:#111;letter-spacing:0px;transform:scaleX(0.87);transform-origin:0 50%;">dBV&#772;</span>
<svg style="left:334.6px;top:329.5px;" width="8" height="6" viewBox="0 0 8 6"><polyline points="0.5,1 4.0,4.5 7.5,1" fill="none" stroke="#555" stroke-width="1"/></svg>
<div style="left:347.4px;top:313px;width:115.60000000000002px;height:11.300000000000011px;background:#fff;box-sizing:border-box;border:1px solid #b0b0b0;"></div>
<span style="left:350.4px;top:313.15px;line-height:12px;font-size:8px;color:#111;letter-spacing:0px;transform:scaleX(0.87);transform-origin:0 50%;">&#8722;160 dBV&#772;</span>
<svg style="left:451px;top:315.65px;" width="8" height="6" viewBox="0 0 8 6"><polyline points="0.5,1 4.0,4.5 7.5,1" fill="none" stroke="#555" stroke-width="1"/></svg>
<div style="left:347.4px;top:326.6px;width:115.60000000000002px;height:10.899999999999977px;background:#f3f3f3;box-sizing:border-box;border:1px solid #e5e5e5;"></div>
<span style="left:350.4px;top:326.55px;line-height:12px;font-size:8px;color:#aaa;letter-spacing:0px;transform:scaleX(0.87);transform-origin:0 50%;">1 V&#772;</span>
<svg style="left:451px;top:329.05px;" width="8" height="6" viewBox="0 0 8 6"><polyline points="0.5,1 4.0,4.5 7.5,1" fill="none" stroke="#bbb" stroke-width="1"/></svg>
<span style="left:466px;top:313.0px;line-height:12px;font-size:8px;color:#111;letter-spacing:0px;transform:scaleX(0.87);transform-origin:0 50%;">Type:</span>
<span style="left:466px;top:326.5px;line-height:12px;font-size:8px;color:#999;letter-spacing:0px;transform:scaleX(0.87);transform-origin:0 50%;">Count:</span>
<div style="left:517.4px;top:313px;width:60.60000000000002px;height:11.300000000000011px;background:#e1e1e1;box-sizing:border-box;border:1px solid #c8c8c8;"></div>
<span style="left:520.4px;top:313.15px;line-height:12px;font-size:8px;color:#111;letter-spacing:0px;transform:scaleX(0.87);transform-origin:0 50%;">Sample</span>
<svg style="left:566px;top:315.65px;" width="8" height="6" viewBox="0 0 8 6"><polyline points="0.5,1 4.0,4.5 7.5,1" fill="none" stroke="#555" stroke-width="1"/></svg>
<div style="left:517.4px;top:326.6px;width:60.60000000000002px;height:10.899999999999977px;background:#f3f3f3;box-sizing:border-box;border:1px solid #e5e5e5;"></div>
<span style="left:520.4px;top:326.55px;line-height:12px;font-size:8px;color:#aaa;letter-spacing:0px;transform:scaleX(0.87);transform-origin:0 50%;">100</span>
<svg style="left:566px;top:329.05px;" width="8" height="6" viewBox="0 0 8 6"><polyline points="0.5,1 4.0,4.5 7.5,1" fill="none" stroke="#bbb" stroke-width="1"/></svg>
<div style="left:578.4px;top:313.3px;width:116.0px;height:11.0px;background:#e1e1e1;box-sizing:border-box;border:1px solid #c8c8c8;"></div>
<span style="left:581.4px;top:313.3px;line-height:12px;font-size:8px;color:#111;letter-spacing:0px;transform:scaleX(0.87);transform-origin:0 50%;">Flat Top</span>
<svg style="left:682.4px;top:315.8px;" width="8" height="6" viewBox="0 0 8 6"><polyline points="0.5,1 4.0,4.5 7.5,1" fill="none" stroke="#555" stroke-width="1"/></svg>
<div style="left:578.4px;top:326.6px;width:116.0px;height:10.899999999999977px;background:#f3f3f3;box-sizing:border-box;border:1px solid #e5e5e5;"></div>
<span style="left:581.4px;top:326.55px;line-height:12px;font-size:8px;color:#aaa;letter-spacing:0px;transform:scaleX(0.87);transform-origin:0 50%;">8</span>
<svg style="left:682.4px;top:329.05px;" width="8" height="6" viewBox="0 0 8 6"><polyline points="0.5,1 4.0,4.5 7.5,1" fill="none" stroke="#bbb" stroke-width="1"/></svg>
<svg style="left:704px;top:313.5px;" width="7" height="11" viewBox="0 0 7 11"><defs><linearGradient id="ua2" x1="0" y1="0" x2="1" y2="0"><stop offset="0" stop-color="#9ee08a"/><stop offset="1" stop-color="#3a9a30"/></linearGradient></defs><path d="M3,0.5 L6.2,4.2 H4.6 V10.5 H1.4 V4.2 H-0.2 Z" transform="translate(0.3,0)" fill="url(#ua2)" stroke="#4a9a40" stroke-width="0.5"/></svg>
<div style="left:696px;top:327px;width:19.5px;height:10.5px;background:#dcdcdc;box-sizing:border-box;border:1px solid #c8c8c8;"></div>
<svg style="left:700.5px;top:327px;" width="10" height="10" viewBox="0 0 10 10"><defs><linearGradient id="gg10" x1="0" y1="0" x2="1" y2="1"><stop offset="0" stop-color="#f6f8fa"/><stop offset="0.55" stop-color="#d4dae0"/><stop offset="1" stop-color="#8a96a2"/></linearGradient></defs><polygon points="9.88,5.48 9.69,6.42 8.26,6.74 7.86,7.35 8.11,8.79 7.31,9.32 6.07,8.54 5.36,8.68 4.52,9.88 3.58,9.69 3.26,8.26 2.65,7.86 1.21,8.11 0.68,7.31 1.46,6.07 1.32,5.36 0.12,4.52 0.31,3.58 1.74,3.26 2.14,2.65 1.89,1.21 2.69,0.68 3.93,1.46 4.64,1.32 5.48,0.12 6.42,0.31 6.74,1.74 7.35,2.14 8.79,1.89 9.32,2.69 8.54,3.93 8.68,4.64" fill="url(#gg10)" stroke="#74808c" stroke-width="0.70" stroke-linejoin="round"/><circle cx="4.70" cy="5.00" r="2.00" fill="#46525e"/><circle cx="5.70" cy="4.60" r="1.50" fill="#dfe4e9"/></svg>
<div style="left:0px;top:338.5px;width:716.3px;height:305.0px;background:#000;"></div>
<svg style="left:0px;top:338px;" width="717" height="306" viewBox="0 0 717 306"><g transform="translate(0,-338)"><line x1="108.5" y1="360" x2="108.5" y2="621.5" stroke="#767676" stroke-width="1" stroke-dasharray="1,2"/><line x1="173.5" y1="360" x2="173.5" y2="621.5" stroke="#767676" stroke-width="1" stroke-dasharray="1,2"/><line x1="238.5" y1="360" x2="238.5" y2="621.5" stroke="#767676" stroke-width="1" stroke-dasharray="1,2"/><line x1="303.5" y1="360" x2="303.5" y2="621.5" stroke="#767676" stroke-width="1" stroke-dasharray="1,2"/><line x1="369.5" y1="360" x2="369.5" y2="621.5" stroke="#767676" stroke-width="1" stroke-dasharray="1,2"/><line x1="434.5" y1="360" x2="434.5" y2="621.5" stroke="#767676" stroke-width="1" stroke-dasharray="1,2"/><line x1="499.5" y1="360" x2="499.5" y2="621.5" stroke="#767676" stroke-width="1" stroke-dasharray="1,2"/><line x1="564.5" y1="360" x2="564.5" y2="621.5" stroke="#767676" stroke-width="1" stroke-dasharray="1,2"/><line x1="629.5" y1="360" x2="629.5" y2="621.5" stroke="#767676" stroke-width="1" stroke-dasharray="1,2"/><line x1="44" y1="385.5" x2="694.5" y2="385.5" stroke="#767676" stroke-width="1" stroke-dasharray="1,2"/><line x1="44" y1="411.5" x2="694.5" y2="411.5" stroke="#767676" stroke-width="1" stroke-dasharray="1,2"/><line x1="44" y1="438.5" x2="694.5" y2="438.5" stroke="#767676" stroke-width="1" stroke-dasharray="1,2"/><line x1="44" y1="464.5" x2="694.5" y2="464.5" stroke="#767676" stroke-width="1" stroke-dasharray="1,2"/><line x1="44" y1="490.5" x2="694.5" y2="490.5" stroke="#767676" stroke-width="1" stroke-dasharray="1,2"/><line x1="44" y1="516.5" x2="694.5" y2="516.5" stroke="#767676" stroke-width="1" stroke-dasharray="1,2"/><line x1="44" y1="542.5" x2="694.5" y2="542.5" stroke="#767676" stroke-width="1" stroke-dasharray="1,2"/><line x1="44" y1="569.5" x2="694.5" y2="569.5" stroke="#767676" stroke-width="1" stroke-dasharray="1,2"/><line x1="44" y1="595.5" x2="694.5" y2="595.5" stroke="#767676" stroke-width="1" stroke-dasharray="1,2"/><path d="M43.5,621.5 V359.5 H694.5 V621.5 H43.5" fill="none" stroke="#7a7a7a" stroke-width="1"/><line x1="43.5" y1="359.5" x2="43.5" y2="368.5" stroke="#7a7a7a" stroke-width="1"/><line x1="43.5" y1="621.5" x2="43.5" y2="612.5" stroke="#7a7a7a" stroke-width="1"/><line x1="50.5" y1="359.5" x2="50.5" y2="361.5" stroke="#7a7a7a" stroke-width="1"/><line x1="50.5" y1="621.5" x2="50.5" y2="619.5" stroke="#7a7a7a" stroke-width="1"/><line x1="56.5" y1="359.5" x2="56.5" y2="361.5" stroke="#7a7a7a" stroke-width="1"/><line x1="56.5" y1="621.5" x2="56.5" y2="619.5" stroke="#7a7a7a" stroke-width="1"/><line x1="63.5" y1="359.5" x2="63.5" y2="361.5" stroke="#7a7a7a" stroke-width="1"/><line x1="63.5" y1="621.5" x2="63.5" y2="619.5" stroke="#7a7a7a" stroke-width="1"/><line x1="69.5" y1="359.5" x2="69.5" y2="361.5" stroke="#7a7a7a" stroke-width="1"/><line x1="69.5" y1="621.5" x2="69.5" y2="619.5" stroke="#7a7a7a" stroke-width="1"/><line x1="76.5" y1="359.5" x2="76.5" y2="363.5" stroke="#7a7a7a" stroke-width="1"/><line x1="76.5" y1="621.5" x2="76.5" y2="617.5" stroke="#7a7a7a" stroke-width="1"/><line x1="82.5" y1="359.5" x2="82.5" y2="361.5" stroke="#7a7a7a" stroke-width="1"/><line x1="82.5" y1="621.5" x2="82.5" y2="619.5" stroke="#7a7a7a" stroke-width="1"/><line x1="89.5" y1="359.5" x2="89.5" y2="361.5" stroke="#7a7a7a" stroke-width="1"/><line x1="89.5" y1="621.5" x2="89.5" y2="619.5" stroke="#7a7a7a" stroke-width="1"/><line x1="95.5" y1="359.5" x2="95.5" y2="361.5" stroke="#7a7a7a" stroke-width="1"/><line x1="95.5" y1="621.5" x2="95.5" y2="619.5" stroke="#7a7a7a" stroke-width="1"/><line x1="102.5" y1="359.5" x2="102.5" y2="361.5" stroke="#7a7a7a" stroke-width="1"/><line x1="102.5" y1="621.5" x2="102.5" y2="619.5" stroke="#7a7a7a" stroke-width="1"/><line x1="108.5" y1="359.5" x2="108.5" y2="368.5" stroke="#7a7a7a" stroke-width="1"/><line x1="108.5" y1="621.5" x2="108.5" y2="612.5" stroke="#7a7a7a" stroke-width="1"/><line x1="115.5" y1="359.5" x2="115.5" y2="361.5" stroke="#7a7a7a" stroke-width="1"/><line x1="115.5" y1="621.5" x2="115.5" y2="619.5" stroke="#7a7a7a" stroke-width="1"/><line x1="121.5" y1="359.5" x2="121.5" y2="361.5" stroke="#7a7a7a" stroke-width="1"/><line x1="121.5" y1="621.5" x2="121.5" y2="619.5" stroke="#7a7a7a" stroke-width="1"/><line x1="128.5" y1="359.5" x2="128.5" y2="361.5" stroke="#7a7a7a" stroke-width="1"/><line x1="128.5" y1="621.5" x2="128.5" y2="619.5" stroke="#7a7a7a" stroke-width="1"/><line x1="134.5" y1="359.5" x2="134.5" y2="361.5" stroke="#7a7a7a" stroke-width="1"/><line x1="134.5" y1="621.5" x2="134.5" y2="619.5" stroke="#7a7a7a" stroke-width="1"/><line x1="141.5" y1="359.5" x2="141.5" y2="363.5" stroke="#7a7a7a" stroke-width="1"/><line x1="141.5" y1="621.5" x2="141.5" y2="617.5" stroke="#7a7a7a" stroke-width="1"/><line x1="147.5" y1="359.5" x2="147.5" y2="361.5" stroke="#7a7a7a" stroke-width="1"/><line x1="147.5" y1="621.5" x2="147.5" y2="619.5" stroke="#7a7a7a" stroke-width="1"/><line x1="154.5" y1="359.5" x2="154.5" y2="361.5" stroke="#7a7a7a" stroke-width="1"/><line x1="154.5" y1="621.5" x2="154.5" y2="619.5" stroke="#7a7a7a" stroke-width="1"/><line x1="160.5" y1="359.5" x2="160.5" y2="361.5" stroke="#7a7a7a" stroke-width="1"/><line x1="160.5" y1="621.5" x2="160.5" y2="619.5" stroke="#7a7a7a" stroke-width="1"/><line x1="167.5" y1="359.5" x2="167.5" y2="361.5" stroke="#7a7a7a" stroke-width="1"/><line x1="167.5" y1="621.5" x2="167.5" y2="619.5" stroke="#7a7a7a" stroke-width="1"/><line x1="173.5" y1="359.5" x2="173.5" y2="368.5" stroke="#7a7a7a" stroke-width="1"/><line x1="173.5" y1="621.5" x2="173.5" y2="612.5" stroke="#7a7a7a" stroke-width="1"/><line x1="180.5" y1="359.5" x2="180.5" y2="361.5" stroke="#7a7a7a" stroke-width="1"/><line x1="180.5" y1="621.5" x2="180.5" y2="619.5" stroke="#7a7a7a" stroke-width="1"/><line x1="186.5" y1="359.5" x2="186.5" y2="361.5" stroke="#7a7a7a" stroke-width="1"/><line x1="186.5" y1="621.5" x2="186.5" y2="619.5" stroke="#7a7a7a" stroke-width="1"/><line x1="193.5" y1="359.5" x2="193.5" y2="361.5" stroke="#7a7a7a" stroke-width="1"/><line x1="193.5" y1="621.5" x2="193.5" y2="619.5" stroke="#7a7a7a" stroke-width="1"/><line x1="199.5" y1="359.5" x2="199.5" y2="361.5" stroke="#7a7a7a" stroke-width="1"/><line x1="199.5" y1="621.5" x2="199.5" y2="619.5" stroke="#7a7a7a" stroke-width="1"/><line x1="206.5" y1="359.5" x2="206.5" y2="363.5" stroke="#7a7a7a" stroke-width="1"/><line x1="206.5" y1="621.5" x2="206.5" y2="617.5" stroke="#7a7a7a" stroke-width="1"/><line x1="212.5" y1="359.5" x2="212.5" y2="361.5" stroke="#7a7a7a" stroke-width="1"/><line x1="212.5" y1="621.5" x2="212.5" y2="619.5" stroke="#7a7a7a" stroke-width="1"/><line x1="219.5" y1="359.5" x2="219.5" y2="361.5" stroke="#7a7a7a" stroke-width="1"/><line x1="219.5" y1="621.5" x2="219.5" y2="619.5" stroke="#7a7a7a" stroke-width="1"/><line x1="225.5" y1="359.5" x2="225.5" y2="361.5" stroke="#7a7a7a" stroke-width="1"/><line x1="225.5" y1="621.5" x2="225.5" y2="619.5" stroke="#7a7a7a" stroke-width="1"/><line x1="232.5" y1="359.5" x2="232.5" y2="361.5" stroke="#7a7a7a" stroke-width="1"/><line x1="232.5" y1="621.5" x2="232.5" y2="619.5" stroke="#7a7a7a" stroke-width="1"/><line x1="238.5" y1="359.5" x2="238.5" y2="368.5" stroke="#7a7a7a" stroke-width="1"/><line x1="238.5" y1="621.5" x2="238.5" y2="612.5" stroke="#7a7a7a" stroke-width="1"/><line x1="245.5" y1="359.5" x2="245.5" y2="361.5" stroke="#7a7a7a" stroke-width="1"/><line x1="245.5" y1="621.5" x2="245.5" y2="619.5" stroke="#7a7a7a" stroke-width="1"/><line x1="251.5" y1="359.5" x2="251.5" y2="361.5" stroke="#7a7a7a" stroke-width="1"/><line x1="251.5" y1="621.5" x2="251.5" y2="619.5" stroke="#7a7a7a" stroke-width="1"/><line x1="258.5" y1="359.5" x2="258.5" y2="361.5" stroke="#7a7a7a" stroke-width="1"/><line x1="258.5" y1="621.5" x2="258.5" y2="619.5" stroke="#7a7a7a" stroke-width="1"/><line x1="264.5" y1="359.5" x2="264.5" y2="361.5" stroke="#7a7a7a" stroke-width="1"/><line x1="264.5" y1="621.5" x2="264.5" y2="619.5" stroke="#7a7a7a" stroke-width="1"/><line x1="271.5" y1="359.5" x2="271.5" y2="363.5" stroke="#7a7a7a" stroke-width="1"/><line x1="271.5" y1="621.5" x2="271.5" y2="617.5" stroke="#7a7a7a" stroke-width="1"/><line x1="277.5" y1="359.5" x2="277.5" y2="361.5" stroke="#7a7a7a" stroke-width="1"/><line x1="277.5" y1="621.5" x2="277.5" y2="619.5" stroke="#7a7a7a" stroke-width="1"/><line x1="284.5" y1="359.5" x2="284.5" y2="361.5" stroke="#7a7a7a" stroke-width="1"/><line x1="284.5" y1="621.5" x2="284.5" y2="619.5" stroke="#7a7a7a" stroke-width="1"/><line x1="290.5" y1="359.5" x2="290.5" y2="361.5" stroke="#7a7a7a" stroke-width="1"/><line x1="290.5" y1="621.5" x2="290.5" y2="619.5" stroke="#7a7a7a" stroke-width="1"/><line x1="297.5" y1="359.5" x2="297.5" y2="361.5" stroke="#7a7a7a" stroke-width="1"/><line x1="297.5" y1="621.5" x2="297.5" y2="619.5" stroke="#7a7a7a" stroke-width="1"/><line x1="303.5" y1="359.5" x2="303.5" y2="368.5" stroke="#7a7a7a" stroke-width="1"/><line x1="303.5" y1="621.5" x2="303.5" y2="612.5" stroke="#7a7a7a" stroke-width="1"/><line x1="310.5" y1="359.5" x2="310.5" y2="361.5" stroke="#7a7a7a" stroke-width="1"/><line x1="310.5" y1="621.5" x2="310.5" y2="619.5" stroke="#7a7a7a" stroke-width="1"/><line x1="316.5" y1="359.5" x2="316.5" y2="361.5" stroke="#7a7a7a" stroke-width="1"/><line x1="316.5" y1="621.5" x2="316.5" y2="619.5" stroke="#7a7a7a" stroke-width="1"/><line x1="323.5" y1="359.5" x2="323.5" y2="361.5" stroke="#7a7a7a" stroke-width="1"/><line x1="323.5" y1="621.5" x2="323.5" y2="619.5" stroke="#7a7a7a" stroke-width="1"/><line x1="329.5" y1="359.5" x2="329.5" y2="361.5" stroke="#7a7a7a" stroke-width="1"/><line x1="329.5" y1="621.5" x2="329.5" y2="619.5" stroke="#7a7a7a" stroke-width="1"/><line x1="336.5" y1="359.5" x2="336.5" y2="363.5" stroke="#7a7a7a" stroke-width="1"/><line x1="336.5" y1="621.5" x2="336.5" y2="617.5" stroke="#7a7a7a" stroke-width="1"/><line x1="342.5" y1="359.5" x2="342.5" y2="361.5" stroke="#7a7a7a" stroke-width="1"/><line x1="342.5" y1="621.5" x2="342.5" y2="619.5" stroke="#7a7a7a" stroke-width="1"/><line x1="349.5" y1="359.5" x2="349.5" y2="361.5" stroke="#7a7a7a" stroke-width="1"/><line x1="349.5" y1="621.5" x2="349.5" y2="619.5" stroke="#7a7a7a" stroke-width="1"/><line x1="355.5" y1="359.5" x2="355.5" y2="361.5" stroke="#7a7a7a" stroke-width="1"/><line x1="355.5" y1="621.5" x2="355.5" y2="619.5" stroke="#7a7a7a" stroke-width="1"/><line x1="362.5" y1="359.5" x2="362.5" y2="361.5" stroke="#7a7a7a" stroke-width="1"/><line x1="362.5" y1="621.5" x2="362.5" y2="619.5" stroke="#7a7a7a" stroke-width="1"/><line x1="369.5" y1="359.5" x2="369.5" y2="368.5" stroke="#7a7a7a" stroke-width="1"/><line x1="369.5" y1="621.5" x2="369.5" y2="612.5" stroke="#7a7a7a" stroke-width="1"/><line x1="375.5" y1="359.5" x2="375.5" y2="361.5" stroke="#7a7a7a" stroke-width="1"/><line x1="375.5" y1="621.5" x2="375.5" y2="619.5" stroke="#7a7a7a" stroke-width="1"/><line x1="382.5" y1="359.5" x2="382.5" y2="361.5" stroke="#7a7a7a" stroke-width="1"/><line x1="382.5" y1="621.5" x2="382.5" y2="619.5" stroke="#7a7a7a" stroke-width="1"/><line x1="388.5" y1="359.5" x2="388.5" y2="361.5" stroke="#7a7a7a" stroke-width="1"/><line x1="388.5" y1="621.5" x2="388.5" y2="619.5" stroke="#7a7a7a" stroke-width="1"/><line x1="395.5" y1="359.5" x2="395.5" y2="361.5" stroke="#7a7a7a" stroke-width="1"/><line x1="395.5" y1="621.5" x2="395.5" y2="619.5" stroke="#7a7a7a" stroke-width="1"/><line x1="401.5" y1="359.5" x2="401.5" y2="363.5" stroke="#7a7a7a" stroke-width="1"/><line x1="401.5" y1="621.5" x2="401.5" y2="617.5" stroke="#7a7a7a" stroke-width="1"/><line x1="408.5" y1="359.5" x2="408.5" y2="361.5" stroke="#7a7a7a" stroke-width="1"/><line x1="408.5" y1="621.5" x2="408.5" y2="619.5" stroke="#7a7a7a" stroke-width="1"/><line x1="414.5" y1="359.5" x2="414.5" y2="361.5" stroke="#7a7a7a" stroke-width="1"/><line x1="414.5" y1="621.5" x2="414.5" y2="619.5" stroke="#7a7a7a" stroke-width="1"/><line x1="421.5" y1="359.5" x2="421.5" y2="361.5" stroke="#7a7a7a" stroke-width="1"/><line x1="421.5" y1="621.5" x2="421.5" y2="619.5" stroke="#7a7a7a" stroke-width="1"/><line x1="427.5" y1="359.5" x2="427.5" y2="361.5" stroke="#7a7a7a" stroke-width="1"/><line x1="427.5" y1="621.5" x2="427.5" y2="619.5" stroke="#7a7a7a" stroke-width="1"/><line x1="434.5" y1="359.5" x2="434.5" y2="368.5" stroke="#7a7a7a" stroke-width="1"/><line x1="434.5" y1="621.5" x2="434.5" y2="612.5" stroke="#7a7a7a" stroke-width="1"/><line x1="440.5" y1="359.5" x2="440.5" y2="361.5" stroke="#7a7a7a" stroke-width="1"/><line x1="440.5" y1="621.5" x2="440.5" y2="619.5" stroke="#7a7a7a" stroke-width="1"/><line x1="447.5" y1="359.5" x2="447.5" y2="361.5" stroke="#7a7a7a" stroke-width="1"/><line x1="447.5" y1="621.5" x2="447.5" y2="619.5" stroke="#7a7a7a" stroke-width="1"/><line x1="453.5" y1="359.5" x2="453.5" y2="361.5" stroke="#7a7a7a" stroke-width="1"/><line x1="453.5" y1="621.5" x2="453.5" y2="619.5" stroke="#7a7a7a" stroke-width="1"/><line x1="460.5" y1="359.5" x2="460.5" y2="361.5" stroke="#7a7a7a" stroke-width="1"/><line x1="460.5" y1="621.5" x2="460.5" y2="619.5" stroke="#7a7a7a" stroke-width="1"/><line x1="466.5" y1="359.5" x2="466.5" y2="363.5" stroke="#7a7a7a" stroke-width="1"/><line x1="466.5" y1="621.5" x2="466.5" y2="617.5" stroke="#7a7a7a" stroke-width="1"/><line x1="473.5" y1="359.5" x2="473.5" y2="361.5" stroke="#7a7a7a" stroke-width="1"/><line x1="473.5" y1="621.5" x2="473.5" y2="619.5" stroke="#7a7a7a" stroke-width="1"/><line x1="479.5" y1="359.5" x2="479.5" y2="361.5" stroke="#7a7a7a" stroke-width="1"/><line x1="479.5" y1="621.5" x2="479.5" y2="619.5" stroke="#7a7a7a" stroke-width="1"/><line x1="486.5" y1="359.5" x2="486.5" y2="361.5" stroke="#7a7a7a" stroke-width="1"/><line x1="486.5" y1="621.5" x2="486.5" y2="619.5" stroke="#7a7a7a" stroke-width="1"/><line x1="492.5" y1="359.5" x2="492.5" y2="361.5" stroke="#7a7a7a" stroke-width="1"/><line x1="492.5" y1="621.5" x2="492.5" y2="619.5" stroke="#7a7a7a" stroke-width="1"/><line x1="499.5" y1="359.5" x2="499.5" y2="368.5" stroke="#7a7a7a" stroke-width="1"/><line x1="499.5" y1="621.5" x2="499.5" y2="612.5" stroke="#7a7a7a" stroke-width="1"/><line x1="505.5" y1="359.5" x2="505.5" y2="361.5" stroke="#7a7a7a" stroke-width="1"/><line x1="505.5" y1="621.5" x2="505.5" y2="619.5" stroke="#7a7a7a" stroke-width="1"/><line x1="512.5" y1="359.5" x2="512.5" y2="361.5" stroke="#7a7a7a" stroke-width="1"/><line x1="512.5" y1="621.5" x2="512.5" y2="619.5" stroke="#7a7a7a" stroke-width="1"/><line x1="518.5" y1="359.5" x2="518.5" y2="361.5" stroke="#7a7a7a" stroke-width="1"/><line x1="518.5" y1="621.5" x2="518.5" y2="619.5" stroke="#7a7a7a" stroke-width="1"/><line x1="525.5" y1="359.5" x2="525.5" y2="361.5" stroke="#7a7a7a" stroke-width="1"/><line x1="525.5" y1="621.5" x2="525.5" y2="619.5" stroke="#7a7a7a" stroke-width="1"/><line x1="531.5" y1="359.5" x2="531.5" y2="363.5" stroke="#7a7a7a" stroke-width="1"/><line x1="531.5" y1="621.5" x2="531.5" y2="617.5" stroke="#7a7a7a" stroke-width="1"/><line x1="538.5" y1="359.5" x2="538.5" y2="361.5" stroke="#7a7a7a" stroke-width="1"/><line x1="538.5" y1="621.5" x2="538.5" y2="619.5" stroke="#7a7a7a" stroke-width="1"/><line x1="544.5" y1="359.5" x2="544.5" y2="361.5" stroke="#7a7a7a" stroke-width="1"/><line x1="544.5" y1="621.5" x2="544.5" y2="619.5" stroke="#7a7a7a" stroke-width="1"/><line x1="551.5" y1="359.5" x2="551.5" y2="361.5" stroke="#7a7a7a" stroke-width="1"/><line x1="551.5" y1="621.5" x2="551.5" y2="619.5" stroke="#7a7a7a" stroke-width="1"/><line x1="557.5" y1="359.5" x2="557.5" y2="361.5" stroke="#7a7a7a" stroke-width="1"/><line x1="557.5" y1="621.5" x2="557.5" y2="619.5" stroke="#7a7a7a" stroke-width="1"/><line x1="564.5" y1="359.5" x2="564.5" y2="368.5" stroke="#7a7a7a" stroke-width="1"/><line x1="564.5" y1="621.5" x2="564.5" y2="612.5" stroke="#7a7a7a" stroke-width="1"/><line x1="570.5" y1="359.5" x2="570.5" y2="361.5" stroke="#7a7a7a" stroke-width="1"/><line x1="570.5" y1="621.5" x2="570.5" y2="619.5" stroke="#7a7a7a" stroke-width="1"/><line x1="577.5" y1="359.5" x2="577.5" y2="361.5" stroke="#7a7a7a" stroke-width="1"/><line x1="577.5" y1="621.5" x2="577.5" y2="619.5" stroke="#7a7a7a" stroke-width="1"/><line x1="583.5" y1="359.5" x2="583.5" y2="361.5" stroke="#7a7a7a" stroke-width="1"/><line x1="583.5" y1="621.5" x2="583.5" y2="619.5" stroke="#7a7a7a" stroke-width="1"/><line x1="590.5" y1="359.5" x2="590.5" y2="361.5" stroke="#7a7a7a" stroke-width="1"/><line x1="590.5" y1="621.5" x2="590.5" y2="619.5" stroke="#7a7a7a" stroke-width="1"/><line x1="596.5" y1="359.5" x2="596.5" y2="363.5" stroke="#7a7a7a" stroke-width="1"/><line x1="596.5" y1="621.5" x2="596.5" y2="617.5" stroke="#7a7a7a" stroke-width="1"/><line x1="603.5" y1="359.5" x2="603.5" y2="361.5" stroke="#7a7a7a" stroke-width="1"/><line x1="603.5" y1="621.5" x2="603.5" y2="619.5" stroke="#7a7a7a" stroke-width="1"/><line x1="609.5" y1="359.5" x2="609.5" y2="361.5" stroke="#7a7a7a" stroke-width="1"/><line x1="609.5" y1="621.5" x2="609.5" y2="619.5" stroke="#7a7a7a" stroke-width="1"/><line x1="616.5" y1="359.5" x2="616.5" y2="361.5" stroke="#7a7a7a" stroke-width="1"/><line x1="616.5" y1="621.5" x2="616.5" y2="619.5" stroke="#7a7a7a" stroke-width="1"/><line x1="622.5" y1="359.5" x2="622.5" y2="361.5" stroke="#7a7a7a" stroke-width="1"/><line x1="622.5" y1="621.5" x2="622.5" y2="619.5" stroke="#7a7a7a" stroke-width="1"/><line x1="629.5" y1="359.5" x2="629.5" y2="368.5" stroke="#7a7a7a" stroke-width="1"/><line x1="629.5" y1="621.5" x2="629.5" y2="612.5" stroke="#7a7a7a" stroke-width="1"/><line x1="635.5" y1="359.5" x2="635.5" y2="361.5" stroke="#7a7a7a" stroke-width="1"/><line x1="635.5" y1="621.5" x2="635.5" y2="619.5" stroke="#7a7a7a" stroke-width="1"/><line x1="642.5" y1="359.5" x2="642.5" y2="361.5" stroke="#7a7a7a" stroke-width="1"/><line x1="642.5" y1="621.5" x2="642.5" y2="619.5" stroke="#7a7a7a" stroke-width="1"/><line x1="648.5" y1="359.5" x2="648.5" y2="361.5" stroke="#7a7a7a" stroke-width="1"/><line x1="648.5" y1="621.5" x2="648.5" y2="619.5" stroke="#7a7a7a" stroke-width="1"/><line x1="655.5" y1="359.5" x2="655.5" y2="361.5" stroke="#7a7a7a" stroke-width="1"/><line x1="655.5" y1="621.5" x2="655.5" y2="619.5" stroke="#7a7a7a" stroke-width="1"/><line x1="661.5" y1="359.5" x2="661.5" y2="363.5" stroke="#7a7a7a" stroke-width="1"/><line x1="661.5" y1="621.5" x2="661.5" y2="617.5" stroke="#7a7a7a" stroke-width="1"/><line x1="668.5" y1="359.5" x2="668.5" y2="361.5" stroke="#7a7a7a" stroke-width="1"/><line x1="668.5" y1="621.5" x2="668.5" y2="619.5" stroke="#7a7a7a" stroke-width="1"/><line x1="674.5" y1="359.5" x2="674.5" y2="361.5" stroke="#7a7a7a" stroke-width="1"/><line x1="674.5" y1="621.5" x2="674.5" y2="619.5" stroke="#7a7a7a" stroke-width="1"/><line x1="681.5" y1="359.5" x2="681.5" y2="361.5" stroke="#7a7a7a" stroke-width="1"/><line x1="681.5" y1="621.5" x2="681.5" y2="619.5" stroke="#7a7a7a" stroke-width="1"/><line x1="687.5" y1="359.5" x2="687.5" y2="361.5" stroke="#7a7a7a" stroke-width="1"/><line x1="687.5" y1="621.5" x2="687.5" y2="619.5" stroke="#7a7a7a" stroke-width="1"/><line x1="694.5" y1="359.5" x2="694.5" y2="368.5" stroke="#7a7a7a" stroke-width="1"/><line x1="694.5" y1="621.5" x2="694.5" y2="612.5" stroke="#7a7a7a" stroke-width="1"/><line x1="43.5" y1="359.5" x2="46.5" y2="359.5" stroke="#7a7a7a" stroke-width="1"/><line x1="694.5" y1="359.5" x2="691.5" y2="359.5" stroke="#7a7a7a" stroke-width="1"/><line x1="43.5" y1="372.5" x2="45.5" y2="372.5" stroke="#7a7a7a" stroke-width="1"/><line x1="694.5" y1="372.5" x2="692.5" y2="372.5" stroke="#7a7a7a" stroke-width="1"/><line x1="43.5" y1="385.5" x2="46.5" y2="385.5" stroke="#7a7a7a" stroke-width="1"/><line x1="694.5" y1="385.5" x2="691.5" y2="385.5" stroke="#7a7a7a" stroke-width="1"/><line x1="43.5" y1="398.5" x2="45.5" y2="398.5" stroke="#7a7a7a" stroke-width="1"/><line x1="694.5" y1="398.5" x2="692.5" y2="398.5" stroke="#7a7a7a" stroke-width="1"/><line x1="43.5" y1="411.5" x2="46.5" y2="411.5" stroke="#7a7a7a" stroke-width="1"/><line x1="694.5" y1="411.5" x2="691.5" y2="411.5" stroke="#7a7a7a" stroke-width="1"/><line x1="43.5" y1="425.5" x2="45.5" y2="425.5" stroke="#7a7a7a" stroke-width="1"/><line x1="694.5" y1="425.5" x2="692.5" y2="425.5" stroke="#7a7a7a" stroke-width="1"/><line x1="43.5" y1="438.5" x2="46.5" y2="438.5" stroke="#7a7a7a" stroke-width="1"/><line x1="694.5" y1="438.5" x2="691.5" y2="438.5" stroke="#7a7a7a" stroke-width="1"/><line x1="43.5" y1="451.5" x2="45.5" y2="451.5" stroke="#7a7a7a" stroke-width="1"/><line x1="694.5" y1="451.5" x2="692.5" y2="451.5" stroke="#7a7a7a" stroke-width="1"/><line x1="43.5" y1="464.5" x2="46.5" y2="464.5" stroke="#7a7a7a" stroke-width="1"/><line x1="694.5" y1="464.5" x2="691.5" y2="464.5" stroke="#7a7a7a" stroke-width="1"/><line x1="43.5" y1="477.5" x2="45.5" y2="477.5" stroke="#7a7a7a" stroke-width="1"/><line x1="694.5" y1="477.5" x2="692.5" y2="477.5" stroke="#7a7a7a" stroke-width="1"/><line x1="43.5" y1="490.5" x2="46.5" y2="490.5" stroke="#7a7a7a" stroke-width="1"/><line x1="694.5" y1="490.5" x2="691.5" y2="490.5" stroke="#7a7a7a" stroke-width="1"/><line x1="43.5" y1="503.5" x2="45.5" y2="503.5" stroke="#7a7a7a" stroke-width="1"/><line x1="694.5" y1="503.5" x2="692.5" y2="503.5" stroke="#7a7a7a" stroke-width="1"/><line x1="43.5" y1="516.5" x2="46.5" y2="516.5" stroke="#7a7a7a" stroke-width="1"/><line x1="694.5" y1="516.5" x2="691.5" y2="516.5" stroke="#7a7a7a" stroke-width="1"/><line x1="43.5" y1="529.5" x2="45.5" y2="529.5" stroke="#7a7a7a" stroke-width="1"/><line x1="694.5" y1="529.5" x2="692.5" y2="529.5" stroke="#7a7a7a" stroke-width="1"/><line x1="43.5" y1="542.5" x2="46.5" y2="542.5" stroke="#7a7a7a" stroke-width="1"/><line x1="694.5" y1="542.5" x2="691.5" y2="542.5" stroke="#7a7a7a" stroke-width="1"/><line x1="43.5" y1="556.5" x2="45.5" y2="556.5" stroke="#7a7a7a" stroke-width="1"/><line x1="694.5" y1="556.5" x2="692.5" y2="556.5" stroke="#7a7a7a" stroke-width="1"/><line x1="43.5" y1="569.5" x2="46.5" y2="569.5" stroke="#7a7a7a" stroke-width="1"/><line x1="694.5" y1="569.5" x2="691.5" y2="569.5" stroke="#7a7a7a" stroke-width="1"/><line x1="43.5" y1="582.5" x2="45.5" y2="582.5" stroke="#7a7a7a" stroke-width="1"/><line x1="694.5" y1="582.5" x2="692.5" y2="582.5" stroke="#7a7a7a" stroke-width="1"/><line x1="43.5" y1="595.5" x2="46.5" y2="595.5" stroke="#7a7a7a" stroke-width="1"/><line x1="694.5" y1="595.5" x2="691.5" y2="595.5" stroke="#7a7a7a" stroke-width="1"/><line x1="43.5" y1="608.5" x2="45.5" y2="608.5" stroke="#7a7a7a" stroke-width="1"/><line x1="694.5" y1="608.5" x2="692.5" y2="608.5" stroke="#7a7a7a" stroke-width="1"/><line x1="43.5" y1="621.5" x2="46.5" y2="621.5" stroke="#7a7a7a" stroke-width="1"/><line x1="694.5" y1="621.5" x2="691.5" y2="621.5" stroke="#7a7a7a" stroke-width="1"/><line x1="43.5" y1="539.4" x2="43.5" y2="545.4" stroke="#bcb020" stroke-width="1"/><line x1="43.5" y1="542.9" x2="43.5" y2="545.4" stroke="#2a9cc8" stroke-width="1"/><line x1="44.5" y1="537.3" x2="44.5" y2="541.2" stroke="#bcb020" stroke-width="1"/><line x1="47.5" y1="536.8" x2="47.5" y2="543.9" stroke="#bcb020" stroke-width="1"/><line x1="48.5" y1="535.6" x2="48.5" y2="549.6" stroke="#bcb020" stroke-width="1"/><line x1="49.5" y1="538.1" x2="49.5" y2="540.9" stroke="#bcb020" stroke-width="1"/><line x1="50.5" y1="539.9" x2="50.5" y2="542.2" stroke="#bcb020" stroke-width="1"/><line x1="51.5" y1="536.2" x2="51.5" y2="539.1" stroke="#bcb020" stroke-width="1"/><line x1="52.5" y1="537.7" x2="52.5" y2="569.3" stroke="#bcb020" stroke-width="1"/><line x1="52.5" y1="566.8" x2="52.5" y2="569.3" stroke="#2a9cc8" stroke-width="1"/><line x1="53.5" y1="538.2" x2="53.5" y2="572.9" stroke="#bcb020" stroke-width="1"/><line x1="54.5" y1="538.7" x2="54.5" y2="548.5" stroke="#bcb020" stroke-width="1"/><line x1="55.5" y1="536.1" x2="55.5" y2="539.0" stroke="#bcb020" stroke-width="1"/><line x1="56.5" y1="539.3" x2="56.5" y2="545.4" stroke="#bcb020" stroke-width="1"/><line x1="56.5" y1="542.9" x2="56.5" y2="545.4" stroke="#2a9cc8" stroke-width="1"/><line x1="58.5" y1="536.2" x2="58.5" y2="547.4" stroke="#bcb020" stroke-width="1"/><line x1="59.5" y1="537.8" x2="59.5" y2="554.0" stroke="#bcb020" stroke-width="1"/><line x1="60.5" y1="535.8" x2="60.5" y2="543.7" stroke="#bcb020" stroke-width="1"/><line x1="61.5" y1="535.1" x2="61.5" y2="537.8" stroke="#bcb020" stroke-width="1"/><line x1="62.5" y1="537.4" x2="62.5" y2="547.6" stroke="#bcb020" stroke-width="1"/><line x1="63.5" y1="535.2" x2="63.5" y2="556.8" stroke="#bcb020" stroke-width="1"/><line x1="63.5" y1="554.3" x2="63.5" y2="556.8" stroke="#2a9cc8" stroke-width="1"/><line x1="64.5" y1="536.7" x2="64.5" y2="543.6" stroke="#bcb020" stroke-width="1"/><line x1="64.5" y1="541.1" x2="64.5" y2="543.6" stroke="#2a9cc8" stroke-width="1"/><line x1="65.5" y1="533.5" x2="65.5" y2="539.3" stroke="#bcb020" stroke-width="1"/><line x1="65.5" y1="536.8" x2="65.5" y2="539.3" stroke="#2a9cc8" stroke-width="1"/><line x1="66.5" y1="533.5" x2="66.5" y2="540.3" stroke="#bcb020" stroke-width="1"/><line x1="67.5" y1="535.3" x2="67.5" y2="550.3" stroke="#bcb020" stroke-width="1"/><line x1="69.5" y1="533.1" x2="69.5" y2="540.3" stroke="#bcb020" stroke-width="1"/><line x1="69.5" y1="537.8" x2="69.5" y2="540.3" stroke="#2a9cc8" stroke-width="1"/><line x1="70.5" y1="534.0" x2="70.5" y2="552.4" stroke="#bcb020" stroke-width="1"/><line x1="70.5" y1="549.9" x2="70.5" y2="552.4" stroke="#2a9cc8" stroke-width="1"/><line x1="71.5" y1="533.6" x2="71.5" y2="541.5" stroke="#bcb020" stroke-width="1"/><line x1="72.5" y1="532.4" x2="72.5" y2="537.1" stroke="#bcb020" stroke-width="1"/><line x1="73.5" y1="531.1" x2="73.5" y2="545.0" stroke="#bcb020" stroke-width="1"/><line x1="73.5" y1="542.5" x2="73.5" y2="545.0" stroke="#2a9cc8" stroke-width="1"/><line x1="74.5" y1="532.7" x2="74.5" y2="536.8" stroke="#bcb020" stroke-width="1"/><line x1="76.5" y1="530.9" x2="76.5" y2="533.0" stroke="#bcb020" stroke-width="1"/><line x1="77.5" y1="529.0" x2="77.5" y2="531.8" stroke="#bcb020" stroke-width="1"/><line x1="78.5" y1="527.6" x2="78.5" y2="545.2" stroke="#bcb020" stroke-width="1"/><line x1="79.5" y1="523.8" x2="79.5" y2="544.4" stroke="#bcb020" stroke-width="1"/><line x1="80.5" y1="526.6" x2="80.5" y2="552.0" stroke="#bcb020" stroke-width="1"/><line x1="81.5" y1="522.6" x2="81.5" y2="549.1" stroke="#bcb020" stroke-width="1"/><line x1="81.5" y1="546.6" x2="81.5" y2="549.1" stroke="#2a9cc8" stroke-width="1"/><line x1="82.5" y1="521.0" x2="82.5" y2="523.6" stroke="#bcb020" stroke-width="1"/><line x1="83.5" y1="524.4" x2="83.5" y2="530.7" stroke="#bcb020" stroke-width="1"/><line x1="84.5" y1="520.3" x2="84.5" y2="529.5" stroke="#bcb020" stroke-width="1"/><line x1="86.5" y1="518.0" x2="86.5" y2="528.3" stroke="#bcb020" stroke-width="1"/><line x1="86.5" y1="525.8" x2="86.5" y2="528.3" stroke="#2a9cc8" stroke-width="1"/><line x1="87.5" y1="518.5" x2="87.5" y2="527.0" stroke="#bcb020" stroke-width="1"/><line x1="89.5" y1="515.4" x2="89.5" y2="523.8" stroke="#bcb020" stroke-width="1"/><line x1="90.5" y1="516.2" x2="90.5" y2="520.8" stroke="#bcb020" stroke-width="1"/><line x1="91.5" y1="515.2" x2="91.5" y2="518.2" stroke="#bcb020" stroke-width="1"/><line x1="92.5" y1="511.1" x2="92.5" y2="514.2" stroke="#bcb020" stroke-width="1"/><line x1="93.5" y1="510.6" x2="93.5" y2="515.8" stroke="#bcb020" stroke-width="1"/><line x1="93.5" y1="513.3" x2="93.5" y2="515.8" stroke="#2a9cc8" stroke-width="1"/><line x1="94.5" y1="510.7" x2="94.5" y2="516.0" stroke="#bcb020" stroke-width="1"/><line x1="95.5" y1="510.8" x2="95.5" y2="523.2" stroke="#bcb020" stroke-width="1"/><line x1="95.5" y1="520.7" x2="95.5" y2="523.2" stroke="#2a9cc8" stroke-width="1"/><line x1="96.5" y1="509.9" x2="96.5" y2="514.9" stroke="#bcb020" stroke-width="1"/><line x1="97.5" y1="507.4" x2="97.5" y2="516.0" stroke="#bcb020" stroke-width="1"/><line x1="98.5" y1="507.5" x2="98.5" y2="524.9" stroke="#bcb020" stroke-width="1"/><line x1="98.5" y1="522.4" x2="98.5" y2="524.9" stroke="#2a9cc8" stroke-width="1"/><line x1="99.5" y1="505.1" x2="99.5" y2="507.6" stroke="#bcb020" stroke-width="1"/><line x1="100.5" y1="502.1" x2="100.5" y2="507.4" stroke="#bcb020" stroke-width="1"/><line x1="102.5" y1="502.8" x2="102.5" y2="505.8" stroke="#bcb020" stroke-width="1"/><line x1="104.5" y1="504.2" x2="104.5" y2="509.6" stroke="#bcb020" stroke-width="1"/><line x1="104.5" y1="507.1" x2="104.5" y2="509.6" stroke="#2a9cc8" stroke-width="1"/><line x1="105.5" y1="503.5" x2="105.5" y2="516.7" stroke="#bcb020" stroke-width="1"/><line x1="105.5" y1="514.2" x2="105.5" y2="516.7" stroke="#2a9cc8" stroke-width="1"/><line x1="106.5" y1="500.6" x2="106.5" y2="503.0" stroke="#bcb020" stroke-width="1"/><line x1="107.5" y1="498.9" x2="107.5" y2="509.0" stroke="#bcb020" stroke-width="1"/><line x1="108.5" y1="498.7" x2="108.5" y2="507.3" stroke="#bcb020" stroke-width="1"/><line x1="109.5" y1="501.0" x2="109.5" y2="531.4" stroke="#bcb020" stroke-width="1"/><line x1="109.5" y1="528.9" x2="109.5" y2="531.4" stroke="#2a9cc8" stroke-width="1"/><line x1="110.5" y1="499.4" x2="110.5" y2="501.9" stroke="#bcb020" stroke-width="1"/><line x1="111.5" y1="497.6" x2="111.5" y2="501.4" stroke="#bcb020" stroke-width="1"/><line x1="112.5" y1="497.6" x2="112.5" y2="506.6" stroke="#bcb020" stroke-width="1"/><line x1="112.5" y1="504.1" x2="112.5" y2="506.6" stroke="#2a9cc8" stroke-width="1"/><line x1="113.5" y1="499.4" x2="113.5" y2="506.1" stroke="#bcb020" stroke-width="1"/><line x1="114.5" y1="497.4" x2="114.5" y2="503.6" stroke="#bcb020" stroke-width="1"/><line x1="114.5" y1="501.1" x2="114.5" y2="503.6" stroke="#2a9cc8" stroke-width="1"/><line x1="115.5" y1="498.4" x2="115.5" y2="504.5" stroke="#bcb020" stroke-width="1"/><line x1="115.5" y1="502.0" x2="115.5" y2="504.5" stroke="#2a9cc8" stroke-width="1"/><line x1="117.5" y1="498.0" x2="117.5" y2="503.9" stroke="#bcb020" stroke-width="1"/><line x1="118.5" y1="498.0" x2="118.5" y2="507.0" stroke="#bcb020" stroke-width="1"/><line x1="120.5" y1="497.5" x2="120.5" y2="507.0" stroke="#bcb020" stroke-width="1"/><line x1="120.5" y1="504.5" x2="120.5" y2="507.0" stroke="#2a9cc8" stroke-width="1"/><line x1="121.5" y1="494.7" x2="121.5" y2="497.1" stroke="#bcb020" stroke-width="1"/><line x1="122.5" y1="497.8" x2="122.5" y2="507.0" stroke="#bcb020" stroke-width="1"/><line x1="123.5" y1="496.5" x2="123.5" y2="521.4" stroke="#bcb020" stroke-width="1"/><line x1="123.5" y1="518.9" x2="123.5" y2="521.4" stroke="#2a9cc8" stroke-width="1"/><line x1="124.5" y1="494.9" x2="124.5" y2="504.6" stroke="#bcb020" stroke-width="1"/><line x1="125.5" y1="496.1" x2="125.5" y2="510.4" stroke="#bcb020" stroke-width="1"/><line x1="125.5" y1="507.9" x2="125.5" y2="510.4" stroke="#2a9cc8" stroke-width="1"/><line x1="126.5" y1="494.2" x2="126.5" y2="513.8" stroke="#bcb020" stroke-width="1"/><line x1="126.5" y1="511.3" x2="126.5" y2="513.8" stroke="#2a9cc8" stroke-width="1"/><line x1="127.5" y1="493.4" x2="127.5" y2="529.1" stroke="#bcb020" stroke-width="1"/><line x1="128.5" y1="496.8" x2="128.5" y2="510.8" stroke="#bcb020" stroke-width="1"/><line x1="129.5" y1="494.4" x2="129.5" y2="514.1" stroke="#bcb020" stroke-width="1"/><line x1="129.5" y1="511.6" x2="129.5" y2="514.1" stroke="#2a9cc8" stroke-width="1"/><line x1="130.5" y1="492.4" x2="130.5" y2="498.4" stroke="#bcb020" stroke-width="1"/><line x1="130.5" y1="495.9" x2="130.5" y2="498.4" stroke="#2a9cc8" stroke-width="1"/><line x1="131.5" y1="495.6" x2="131.5" y2="502.9" stroke="#bcb020" stroke-width="1"/><line x1="131.5" y1="500.4" x2="131.5" y2="502.9" stroke="#2a9cc8" stroke-width="1"/><line x1="132.5" y1="496.5" x2="132.5" y2="502.7" stroke="#bcb020" stroke-width="1"/><line x1="133.5" y1="495.3" x2="133.5" y2="501.8" stroke="#bcb020" stroke-width="1"/><line x1="134.5" y1="495.2" x2="134.5" y2="506.3" stroke="#bcb020" stroke-width="1"/><line x1="134.5" y1="503.8" x2="134.5" y2="506.3" stroke="#2a9cc8" stroke-width="1"/><line x1="136.5" y1="493.2" x2="136.5" y2="498.1" stroke="#bcb020" stroke-width="1"/><line x1="137.5" y1="491.8" x2="137.5" y2="504.0" stroke="#bcb020" stroke-width="1"/><line x1="138.5" y1="494.8" x2="138.5" y2="500.5" stroke="#bcb020" stroke-width="1"/><line x1="138.5" y1="498.0" x2="138.5" y2="500.5" stroke="#2a9cc8" stroke-width="1"/><line x1="139.5" y1="494.8" x2="139.5" y2="505.3" stroke="#bcb020" stroke-width="1"/><line x1="139.5" y1="502.8" x2="139.5" y2="505.3" stroke="#2a9cc8" stroke-width="1"/><line x1="140.5" y1="492.1" x2="140.5" y2="503.3" stroke="#bcb020" stroke-width="1"/><line x1="141.5" y1="491.6" x2="141.5" y2="500.7" stroke="#bcb020" stroke-width="1"/><line x1="141.5" y1="498.2" x2="141.5" y2="500.7" stroke="#2a9cc8" stroke-width="1"/><line x1="142.5" y1="493.7" x2="142.5" y2="495.9" stroke="#bcb020" stroke-width="1"/><line x1="143.5" y1="489.4" x2="143.5" y2="511.7" stroke="#bcb020" stroke-width="1"/><line x1="143.5" y1="509.2" x2="143.5" y2="511.7" stroke="#2a9cc8" stroke-width="1"/><line x1="144.5" y1="492.0" x2="144.5" y2="494.7" stroke="#bcb020" stroke-width="1"/><line x1="145.5" y1="488.9" x2="145.5" y2="493.7" stroke="#bcb020" stroke-width="1"/><line x1="146.5" y1="492.6" x2="146.5" y2="508.2" stroke="#bcb020" stroke-width="1"/><line x1="147.5" y1="488.7" x2="147.5" y2="494.0" stroke="#bcb020" stroke-width="1"/><line x1="148.5" y1="491.0" x2="148.5" y2="494.0" stroke="#bcb020" stroke-width="1"/><line x1="149.5" y1="489.7" x2="149.5" y2="494.1" stroke="#bcb020" stroke-width="1"/><line x1="150.5" y1="492.4" x2="150.5" y2="495.7" stroke="#bcb020" stroke-width="1"/><line x1="151.5" y1="491.2" x2="151.5" y2="507.2" stroke="#bcb020" stroke-width="1"/><line x1="151.5" y1="504.7" x2="151.5" y2="507.2" stroke="#2a9cc8" stroke-width="1"/><line x1="152.5" y1="489.2" x2="152.5" y2="510.8" stroke="#bcb020" stroke-width="1"/><line x1="152.5" y1="508.3" x2="152.5" y2="510.8" stroke="#2a9cc8" stroke-width="1"/><line x1="153.5" y1="489.9" x2="153.5" y2="494.7" stroke="#bcb020" stroke-width="1"/><line x1="154.5" y1="490.9" x2="154.5" y2="498.8" stroke="#bcb020" stroke-width="1"/><line x1="154.5" y1="496.3" x2="154.5" y2="498.8" stroke="#2a9cc8" stroke-width="1"/><line x1="155.5" y1="488.9" x2="155.5" y2="496.6" stroke="#bcb020" stroke-width="1"/><line x1="155.5" y1="494.1" x2="155.5" y2="496.6" stroke="#2a9cc8" stroke-width="1"/><line x1="156.5" y1="490.9" x2="156.5" y2="507.3" stroke="#bcb020" stroke-width="1"/><line x1="157.5" y1="491.5" x2="157.5" y2="512.3" stroke="#bcb020" stroke-width="1"/><line x1="158.5" y1="488.2" x2="158.5" y2="494.5" stroke="#bcb020" stroke-width="1"/><line x1="158.5" y1="492.0" x2="158.5" y2="494.5" stroke="#2a9cc8" stroke-width="1"/><line x1="159.5" y1="488.2" x2="159.5" y2="493.4" stroke="#bcb020" stroke-width="1"/><line x1="160.5" y1="489.9" x2="160.5" y2="517.7" stroke="#bcb020" stroke-width="1"/><line x1="161.5" y1="491.4" x2="161.5" y2="498.8" stroke="#bcb020" stroke-width="1"/><line x1="161.5" y1="496.3" x2="161.5" y2="498.8" stroke="#2a9cc8" stroke-width="1"/><line x1="162.5" y1="491.1" x2="162.5" y2="503.1" stroke="#bcb020" stroke-width="1"/><line x1="163.5" y1="490.2" x2="163.5" y2="518.3" stroke="#bcb020" stroke-width="1"/><line x1="163.5" y1="515.8" x2="163.5" y2="518.3" stroke="#2a9cc8" stroke-width="1"/><line x1="164.5" y1="492.4" x2="164.5" y2="500.3" stroke="#bcb020" stroke-width="1"/><line x1="165.5" y1="488.1" x2="165.5" y2="493.1" stroke="#bcb020" stroke-width="1"/><line x1="166.5" y1="492.8" x2="166.5" y2="503.1" stroke="#bcb020" stroke-width="1"/><line x1="167.5" y1="489.8" x2="167.5" y2="495.5" stroke="#bcb020" stroke-width="1"/><line x1="167.5" y1="493.0" x2="167.5" y2="495.5" stroke="#2a9cc8" stroke-width="1"/><line x1="168.5" y1="491.9" x2="168.5" y2="494.5" stroke="#bcb020" stroke-width="1"/><line x1="169.5" y1="491.5" x2="169.5" y2="495.5" stroke="#bcb020" stroke-width="1"/><line x1="171.5" y1="491.8" x2="171.5" y2="498.1" stroke="#bcb020" stroke-width="1"/><line x1="171.5" y1="495.6" x2="171.5" y2="498.1" stroke="#2a9cc8" stroke-width="1"/><line x1="172.5" y1="488.0" x2="172.5" y2="491.4" stroke="#bcb020" stroke-width="1"/><line x1="173.5" y1="492.4" x2="173.5" y2="500.1" stroke="#bcb020" stroke-width="1"/><line x1="173.5" y1="497.6" x2="173.5" y2="500.1" stroke="#2a9cc8" stroke-width="1"/><line x1="174.5" y1="491.1" x2="174.5" y2="511.7" stroke="#bcb020" stroke-width="1"/><line x1="174.5" y1="509.2" x2="174.5" y2="511.7" stroke="#2a9cc8" stroke-width="1"/><line x1="175.5" y1="490.9" x2="175.5" y2="497.5" stroke="#bcb020" stroke-width="1"/><line x1="175.5" y1="495.0" x2="175.5" y2="497.5" stroke="#2a9cc8" stroke-width="1"/><line x1="176.5" y1="489.0" x2="176.5" y2="493.5" stroke="#bcb020" stroke-width="1"/><line x1="177.5" y1="487.8" x2="177.5" y2="492.9" stroke="#bcb020" stroke-width="1"/><line x1="178.5" y1="488.2" x2="178.5" y2="493.7" stroke="#bcb020" stroke-width="1"/><line x1="178.5" y1="491.2" x2="178.5" y2="493.7" stroke="#2a9cc8" stroke-width="1"/><line x1="179.5" y1="491.2" x2="179.5" y2="496.9" stroke="#bcb020" stroke-width="1"/><line x1="179.5" y1="494.4" x2="179.5" y2="496.9" stroke="#2a9cc8" stroke-width="1"/><line x1="180.5" y1="491.7" x2="180.5" y2="493.9" stroke="#bcb020" stroke-width="1"/><line x1="181.5" y1="490.2" x2="181.5" y2="499.0" stroke="#bcb020" stroke-width="1"/><line x1="182.5" y1="491.6" x2="182.5" y2="494.7" stroke="#bcb020" stroke-width="1"/><line x1="183.5" y1="492.2" x2="183.5" y2="500.4" stroke="#bcb020" stroke-width="1"/><line x1="184.5" y1="491.9" x2="184.5" y2="498.1" stroke="#bcb020" stroke-width="1"/><line x1="185.5" y1="491.7" x2="185.5" y2="497.7" stroke="#bcb020" stroke-width="1"/><line x1="185.5" y1="495.2" x2="185.5" y2="497.7" stroke="#2a9cc8" stroke-width="1"/><line x1="186.5" y1="490.7" x2="186.5" y2="499.5" stroke="#bcb020" stroke-width="1"/><line x1="187.5" y1="491.6" x2="187.5" y2="498.7" stroke="#bcb020" stroke-width="1"/><line x1="188.5" y1="487.8" x2="188.5" y2="494.9" stroke="#bcb020" stroke-width="1"/><line x1="188.5" y1="492.4" x2="188.5" y2="494.9" stroke="#2a9cc8" stroke-width="1"/><line x1="189.5" y1="489.0" x2="189.5" y2="512.0" stroke="#bcb020" stroke-width="1"/><line x1="190.5" y1="487.6" x2="190.5" y2="523.9" stroke="#bcb020" stroke-width="1"/><line x1="191.5" y1="487.7" x2="191.5" y2="491.5" stroke="#bcb020" stroke-width="1"/><line x1="192.5" y1="491.6" x2="192.5" y2="525.8" stroke="#bcb020" stroke-width="1"/><line x1="193.5" y1="488.1" x2="193.5" y2="497.1" stroke="#bcb020" stroke-width="1"/><line x1="194.5" y1="488.5" x2="194.5" y2="504.3" stroke="#bcb020" stroke-width="1"/><line x1="194.5" y1="501.8" x2="194.5" y2="504.3" stroke="#2a9cc8" stroke-width="1"/><line x1="195.5" y1="488.0" x2="195.5" y2="490.5" stroke="#bcb020" stroke-width="1"/><line x1="196.5" y1="490.2" x2="196.5" y2="493.3" stroke="#bcb020" stroke-width="1"/><line x1="199.5" y1="488.0" x2="199.5" y2="517.5" stroke="#bcb020" stroke-width="1"/><line x1="200.5" y1="489.0" x2="200.5" y2="506.6" stroke="#bcb020" stroke-width="1"/><line x1="201.5" y1="488.2" x2="201.5" y2="490.7" stroke="#bcb020" stroke-width="1"/><line x1="202.5" y1="492.3" x2="202.5" y2="506.2" stroke="#bcb020" stroke-width="1"/><line x1="203.5" y1="487.4" x2="203.5" y2="498.7" stroke="#bcb020" stroke-width="1"/><line x1="203.5" y1="496.2" x2="203.5" y2="498.7" stroke="#2a9cc8" stroke-width="1"/><line x1="205.5" y1="490.4" x2="205.5" y2="500.6" stroke="#bcb020" stroke-width="1"/><line x1="205.5" y1="498.1" x2="205.5" y2="500.6" stroke="#2a9cc8" stroke-width="1"/><line x1="206.5" y1="489.7" x2="206.5" y2="494.7" stroke="#bcb020" stroke-width="1"/><line x1="206.5" y1="492.2" x2="206.5" y2="494.7" stroke="#2a9cc8" stroke-width="1"/><line x1="208.5" y1="491.9" x2="208.5" y2="498.2" stroke="#bcb020" stroke-width="1"/><line x1="208.5" y1="495.7" x2="208.5" y2="498.2" stroke="#2a9cc8" stroke-width="1"/><line x1="209.5" y1="491.3" x2="209.5" y2="501.5" stroke="#bcb020" stroke-width="1"/><line x1="209.5" y1="499.0" x2="209.5" y2="501.5" stroke="#2a9cc8" stroke-width="1"/><line x1="210.5" y1="491.5" x2="210.5" y2="496.1" stroke="#bcb020" stroke-width="1"/><line x1="211.5" y1="487.5" x2="211.5" y2="493.9" stroke="#bcb020" stroke-width="1"/><line x1="212.5" y1="491.6" x2="212.5" y2="497.8" stroke="#bcb020" stroke-width="1"/><line x1="212.5" y1="495.3" x2="212.5" y2="497.8" stroke="#2a9cc8" stroke-width="1"/><line x1="213.5" y1="491.7" x2="213.5" y2="496.3" stroke="#bcb020" stroke-width="1"/><line x1="214.5" y1="492.0" x2="214.5" y2="500.1" stroke="#bcb020" stroke-width="1"/><line x1="214.5" y1="497.6" x2="214.5" y2="500.1" stroke="#2a9cc8" stroke-width="1"/><line x1="215.5" y1="490.8" x2="215.5" y2="494.3" stroke="#bcb020" stroke-width="1"/><line x1="216.5" y1="488.8" x2="216.5" y2="492.5" stroke="#bcb020" stroke-width="1"/><line x1="217.5" y1="488.9" x2="217.5" y2="496.8" stroke="#bcb020" stroke-width="1"/><line x1="218.5" y1="489.5" x2="218.5" y2="503.4" stroke="#bcb020" stroke-width="1"/><line x1="219.5" y1="490.5" x2="219.5" y2="495.9" stroke="#bcb020" stroke-width="1"/><line x1="220.5" y1="491.0" x2="220.5" y2="493.7" stroke="#bcb020" stroke-width="1"/><line x1="221.5" y1="492.2" x2="221.5" y2="495.7" stroke="#bcb020" stroke-width="1"/><line x1="222.5" y1="488.6" x2="222.5" y2="491.8" stroke="#bcb020" stroke-width="1"/><line x1="223.5" y1="489.2" x2="223.5" y2="495.9" stroke="#bcb020" stroke-width="1"/><line x1="224.5" y1="488.3" x2="224.5" y2="490.4" stroke="#bcb020" stroke-width="1"/><line x1="225.5" y1="491.8" x2="225.5" y2="502.5" stroke="#bcb020" stroke-width="1"/><line x1="226.5" y1="491.0" x2="226.5" y2="502.1" stroke="#bcb020" stroke-width="1"/><line x1="227.5" y1="491.6" x2="227.5" y2="498.7" stroke="#bcb020" stroke-width="1"/><line x1="227.5" y1="496.2" x2="227.5" y2="498.7" stroke="#2a9cc8" stroke-width="1"/><line x1="228.5" y1="489.8" x2="228.5" y2="492.2" stroke="#bcb020" stroke-width="1"/><line x1="229.5" y1="491.2" x2="229.5" y2="498.0" stroke="#bcb020" stroke-width="1"/><line x1="229.5" y1="495.5" x2="229.5" y2="498.0" stroke="#2a9cc8" stroke-width="1"/><line x1="230.5" y1="490.2" x2="230.5" y2="504.5" stroke="#bcb020" stroke-width="1"/><line x1="230.5" y1="502.0" x2="230.5" y2="504.5" stroke="#2a9cc8" stroke-width="1"/><line x1="231.5" y1="489.8" x2="231.5" y2="493.5" stroke="#bcb020" stroke-width="1"/><line x1="232.5" y1="487.9" x2="232.5" y2="492.0" stroke="#bcb020" stroke-width="1"/><line x1="233.5" y1="490.3" x2="233.5" y2="500.0" stroke="#bcb020" stroke-width="1"/><line x1="233.5" y1="497.5" x2="233.5" y2="500.0" stroke="#2a9cc8" stroke-width="1"/><line x1="234.5" y1="491.8" x2="234.5" y2="496.1" stroke="#bcb020" stroke-width="1"/><line x1="235.5" y1="491.6" x2="235.5" y2="526.5" stroke="#bcb020" stroke-width="1"/><line x1="235.5" y1="524.0" x2="235.5" y2="526.5" stroke="#2a9cc8" stroke-width="1"/><line x1="236.5" y1="491.9" x2="236.5" y2="497.1" stroke="#bcb020" stroke-width="1"/><line x1="236.5" y1="494.6" x2="236.5" y2="497.1" stroke="#2a9cc8" stroke-width="1"/><line x1="237.5" y1="488.1" x2="237.5" y2="490.5" stroke="#bcb020" stroke-width="1"/><line x1="238.5" y1="491.5" x2="238.5" y2="497.0" stroke="#bcb020" stroke-width="1"/><line x1="239.5" y1="488.3" x2="239.5" y2="491.5" stroke="#bcb020" stroke-width="1"/><line x1="240.5" y1="492.0" x2="240.5" y2="500.4" stroke="#bcb020" stroke-width="1"/><line x1="241.5" y1="489.2" x2="241.5" y2="492.9" stroke="#bcb020" stroke-width="1"/><line x1="242.5" y1="490.5" x2="242.5" y2="495.2" stroke="#bcb020" stroke-width="1"/><line x1="243.5" y1="490.8" x2="243.5" y2="498.7" stroke="#bcb020" stroke-width="1"/><line x1="244.5" y1="488.3" x2="244.5" y2="491.1" stroke="#bcb020" stroke-width="1"/><line x1="245.5" y1="490.5" x2="245.5" y2="493.8" stroke="#bcb020" stroke-width="1"/><line x1="246.5" y1="488.3" x2="246.5" y2="490.5" stroke="#bcb020" stroke-width="1"/><line x1="247.5" y1="490.2" x2="247.5" y2="494.7" stroke="#bcb020" stroke-width="1"/><line x1="248.5" y1="490.3" x2="248.5" y2="501.7" stroke="#bcb020" stroke-width="1"/><line x1="249.5" y1="490.5" x2="249.5" y2="493.2" stroke="#bcb020" stroke-width="1"/><line x1="251.5" y1="487.1" x2="251.5" y2="496.8" stroke="#bcb020" stroke-width="1"/><line x1="251.5" y1="494.3" x2="251.5" y2="496.8" stroke="#2a9cc8" stroke-width="1"/><line x1="252.5" y1="487.8" x2="252.5" y2="493.9" stroke="#bcb020" stroke-width="1"/><line x1="252.5" y1="491.4" x2="252.5" y2="493.9" stroke="#2a9cc8" stroke-width="1"/><line x1="253.5" y1="489.5" x2="253.5" y2="493.7" stroke="#bcb020" stroke-width="1"/><line x1="254.5" y1="490.5" x2="254.5" y2="494.0" stroke="#bcb020" stroke-width="1"/><line x1="255.5" y1="490.9" x2="255.5" y2="503.6" stroke="#bcb020" stroke-width="1"/><line x1="256.5" y1="487.6" x2="256.5" y2="509.2" stroke="#bcb020" stroke-width="1"/><line x1="257.5" y1="489.1" x2="257.5" y2="494.6" stroke="#bcb020" stroke-width="1"/><line x1="257.5" y1="492.1" x2="257.5" y2="494.6" stroke="#2a9cc8" stroke-width="1"/><line x1="258.5" y1="489.3" x2="258.5" y2="495.7" stroke="#bcb020" stroke-width="1"/><line x1="259.5" y1="487.5" x2="259.5" y2="491.2" stroke="#bcb020" stroke-width="1"/><line x1="260.5" y1="488.8" x2="260.5" y2="494.3" stroke="#bcb020" stroke-width="1"/><line x1="260.5" y1="491.8" x2="260.5" y2="494.3" stroke="#2a9cc8" stroke-width="1"/><line x1="261.5" y1="487.2" x2="261.5" y2="496.7" stroke="#bcb020" stroke-width="1"/><line x1="262.5" y1="488.2" x2="262.5" y2="492.4" stroke="#bcb020" stroke-width="1"/><line x1="263.5" y1="491.1" x2="263.5" y2="493.9" stroke="#bcb020" stroke-width="1"/><line x1="264.5" y1="488.5" x2="264.5" y2="492.0" stroke="#bcb020" stroke-width="1"/><line x1="265.5" y1="488.0" x2="265.5" y2="494.4" stroke="#bcb020" stroke-width="1"/><line x1="266.5" y1="487.9" x2="266.5" y2="491.6" stroke="#bcb020" stroke-width="1"/><line x1="267.5" y1="490.0" x2="267.5" y2="500.2" stroke="#bcb020" stroke-width="1"/><line x1="268.5" y1="488.0" x2="268.5" y2="495.5" stroke="#bcb020" stroke-width="1"/><line x1="268.5" y1="493.0" x2="268.5" y2="495.5" stroke="#2a9cc8" stroke-width="1"/><line x1="269.5" y1="487.6" x2="269.5" y2="496.7" stroke="#bcb020" stroke-width="1"/><line x1="270.5" y1="489.0" x2="270.5" y2="495.1" stroke="#bcb020" stroke-width="1"/><line x1="271.5" y1="490.0" x2="271.5" y2="497.2" stroke="#bcb020" stroke-width="1"/><line x1="271.5" y1="494.7" x2="271.5" y2="497.2" stroke="#2a9cc8" stroke-width="1"/><line x1="272.5" y1="487.4" x2="272.5" y2="490.0" stroke="#bcb020" stroke-width="1"/><line x1="273.5" y1="491.4" x2="273.5" y2="494.1" stroke="#bcb020" stroke-width="1"/><line x1="274.5" y1="491.9" x2="274.5" y2="496.7" stroke="#bcb020" stroke-width="1"/><line x1="275.5" y1="490.7" x2="275.5" y2="516.5" stroke="#bcb020" stroke-width="1"/><line x1="277.5" y1="489.0" x2="277.5" y2="501.1" stroke="#bcb020" stroke-width="1"/><line x1="277.5" y1="498.6" x2="277.5" y2="501.1" stroke="#2a9cc8" stroke-width="1"/><line x1="279.5" y1="491.1" x2="279.5" y2="503.1" stroke="#bcb020" stroke-width="1"/><line x1="279.5" y1="500.6" x2="279.5" y2="503.1" stroke="#2a9cc8" stroke-width="1"/><line x1="280.5" y1="489.0" x2="280.5" y2="492.2" stroke="#bcb020" stroke-width="1"/><line x1="281.5" y1="488.3" x2="281.5" y2="494.0" stroke="#bcb020" stroke-width="1"/><line x1="281.5" y1="491.5" x2="281.5" y2="494.0" stroke="#2a9cc8" stroke-width="1"/><line x1="282.5" y1="488.2" x2="282.5" y2="490.9" stroke="#bcb020" stroke-width="1"/><line x1="283.5" y1="489.0" x2="283.5" y2="491.2" stroke="#bcb020" stroke-width="1"/><line x1="284.5" y1="489.5" x2="284.5" y2="494.8" stroke="#bcb020" stroke-width="1"/><line x1="285.5" y1="487.4" x2="285.5" y2="495.7" stroke="#bcb020" stroke-width="1"/><line x1="286.5" y1="491.3" x2="286.5" y2="494.6" stroke="#bcb020" stroke-width="1"/><line x1="287.5" y1="487.3" x2="287.5" y2="518.7" stroke="#bcb020" stroke-width="1"/><line x1="288.5" y1="487.8" x2="288.5" y2="497.9" stroke="#bcb020" stroke-width="1"/><line x1="289.5" y1="490.7" x2="289.5" y2="505.4" stroke="#bcb020" stroke-width="1"/><line x1="290.5" y1="487.8" x2="290.5" y2="492.0" stroke="#bcb020" stroke-width="1"/><line x1="291.5" y1="488.1" x2="291.5" y2="501.2" stroke="#bcb020" stroke-width="1"/><line x1="291.5" y1="498.7" x2="291.5" y2="501.2" stroke="#2a9cc8" stroke-width="1"/><line x1="292.5" y1="489.4" x2="292.5" y2="496.4" stroke="#bcb020" stroke-width="1"/><line x1="292.5" y1="493.9" x2="292.5" y2="496.4" stroke="#2a9cc8" stroke-width="1"/><line x1="293.5" y1="487.5" x2="293.5" y2="490.5" stroke="#bcb020" stroke-width="1"/><line x1="294.5" y1="489.5" x2="294.5" y2="493.9" stroke="#bcb020" stroke-width="1"/><line x1="295.5" y1="490.0" x2="295.5" y2="513.7" stroke="#bcb020" stroke-width="1"/><line x1="295.5" y1="511.2" x2="295.5" y2="513.7" stroke="#2a9cc8" stroke-width="1"/><line x1="296.5" y1="488.3" x2="296.5" y2="502.2" stroke="#bcb020" stroke-width="1"/><line x1="296.5" y1="499.7" x2="296.5" y2="502.2" stroke="#2a9cc8" stroke-width="1"/><line x1="298.5" y1="492.0" x2="298.5" y2="507.8" stroke="#bcb020" stroke-width="1"/><line x1="299.5" y1="487.8" x2="299.5" y2="494.0" stroke="#bcb020" stroke-width="1"/><line x1="299.5" y1="491.5" x2="299.5" y2="494.0" stroke="#2a9cc8" stroke-width="1"/><line x1="301.5" y1="488.1" x2="301.5" y2="517.4" stroke="#bcb020" stroke-width="1"/><line x1="301.5" y1="514.9" x2="301.5" y2="517.4" stroke="#2a9cc8" stroke-width="1"/><line x1="302.5" y1="488.3" x2="302.5" y2="490.4" stroke="#bcb020" stroke-width="1"/><line x1="303.5" y1="488.6" x2="303.5" y2="495.3" stroke="#bcb020" stroke-width="1"/><line x1="303.5" y1="492.8" x2="303.5" y2="495.3" stroke="#2a9cc8" stroke-width="1"/><line x1="304.5" y1="489.5" x2="304.5" y2="493.4" stroke="#bcb020" stroke-width="1"/><line x1="305.5" y1="487.6" x2="305.5" y2="494.7" stroke="#bcb020" stroke-width="1"/><line x1="306.5" y1="488.8" x2="306.5" y2="506.1" stroke="#bcb020" stroke-width="1"/><line x1="307.5" y1="490.6" x2="307.5" y2="508.3" stroke="#bcb020" stroke-width="1"/><line x1="307.5" y1="505.8" x2="307.5" y2="508.3" stroke="#2a9cc8" stroke-width="1"/><line x1="308.5" y1="487.8" x2="308.5" y2="497.2" stroke="#bcb020" stroke-width="1"/><line x1="309.5" y1="489.7" x2="309.5" y2="508.3" stroke="#bcb020" stroke-width="1"/><line x1="310.5" y1="487.3" x2="310.5" y2="497.9" stroke="#bcb020" stroke-width="1"/><line x1="310.5" y1="495.4" x2="310.5" y2="497.9" stroke="#2a9cc8" stroke-width="1"/><line x1="311.5" y1="489.8" x2="311.5" y2="501.8" stroke="#bcb020" stroke-width="1"/><line x1="312.5" y1="489.6" x2="312.5" y2="492.4" stroke="#bcb020" stroke-width="1"/><line x1="313.5" y1="489.9" x2="313.5" y2="509.9" stroke="#bcb020" stroke-width="1"/><line x1="314.5" y1="489.8" x2="314.5" y2="497.8" stroke="#bcb020" stroke-width="1"/><line x1="315.5" y1="490.5" x2="315.5" y2="493.0" stroke="#bcb020" stroke-width="1"/><line x1="316.5" y1="491.3" x2="316.5" y2="496.5" stroke="#bcb020" stroke-width="1"/><line x1="317.5" y1="491.0" x2="317.5" y2="502.1" stroke="#bcb020" stroke-width="1"/><line x1="317.5" y1="499.6" x2="317.5" y2="502.1" stroke="#2a9cc8" stroke-width="1"/><line x1="318.5" y1="489.1" x2="318.5" y2="495.2" stroke="#bcb020" stroke-width="1"/><line x1="319.5" y1="488.2" x2="319.5" y2="492.5" stroke="#bcb020" stroke-width="1"/><line x1="320.5" y1="490.3" x2="320.5" y2="506.6" stroke="#bcb020" stroke-width="1"/><line x1="320.5" y1="504.1" x2="320.5" y2="506.6" stroke="#2a9cc8" stroke-width="1"/><line x1="321.5" y1="487.7" x2="321.5" y2="500.6" stroke="#bcb020" stroke-width="1"/><line x1="322.5" y1="487.5" x2="322.5" y2="494.8" stroke="#bcb020" stroke-width="1"/><line x1="322.5" y1="492.3" x2="322.5" y2="494.8" stroke="#2a9cc8" stroke-width="1"/><line x1="323.5" y1="488.0" x2="323.5" y2="491.8" stroke="#bcb020" stroke-width="1"/><line x1="324.5" y1="491.0" x2="324.5" y2="495.9" stroke="#bcb020" stroke-width="1"/><line x1="325.5" y1="492.0" x2="325.5" y2="501.9" stroke="#bcb020" stroke-width="1"/><line x1="326.5" y1="490.7" x2="326.5" y2="498.2" stroke="#bcb020" stroke-width="1"/><line x1="327.5" y1="492.1" x2="327.5" y2="494.3" stroke="#bcb020" stroke-width="1"/><line x1="328.5" y1="489.7" x2="328.5" y2="506.9" stroke="#bcb020" stroke-width="1"/><line x1="329.5" y1="492.1" x2="329.5" y2="499.2" stroke="#bcb020" stroke-width="1"/><line x1="329.5" y1="496.7" x2="329.5" y2="499.2" stroke="#2a9cc8" stroke-width="1"/><line x1="330.5" y1="492.3" x2="330.5" y2="500.0" stroke="#bcb020" stroke-width="1"/><line x1="332.5" y1="488.3" x2="332.5" y2="505.0" stroke="#bcb020" stroke-width="1"/><line x1="333.5" y1="489.6" x2="333.5" y2="495.3" stroke="#bcb020" stroke-width="1"/><line x1="335.5" y1="489.4" x2="335.5" y2="495.3" stroke="#bcb020" stroke-width="1"/><line x1="336.5" y1="490.7" x2="336.5" y2="526.7" stroke="#bcb020" stroke-width="1"/><line x1="337.5" y1="489.2" x2="337.5" y2="523.6" stroke="#bcb020" stroke-width="1"/><line x1="338.5" y1="491.5" x2="338.5" y2="496.4" stroke="#bcb020" stroke-width="1"/><line x1="339.5" y1="490.4" x2="339.5" y2="498.0" stroke="#bcb020" stroke-width="1"/><line x1="341.5" y1="490.9" x2="341.5" y2="511.1" stroke="#bcb020" stroke-width="1"/><line x1="342.5" y1="488.6" x2="342.5" y2="493.1" stroke="#bcb020" stroke-width="1"/><line x1="343.5" y1="492.2" x2="343.5" y2="503.1" stroke="#bcb020" stroke-width="1"/><line x1="343.5" y1="500.6" x2="343.5" y2="503.1" stroke="#2a9cc8" stroke-width="1"/><line x1="344.5" y1="488.1" x2="344.5" y2="494.1" stroke="#bcb020" stroke-width="1"/><line x1="344.5" y1="491.6" x2="344.5" y2="494.1" stroke="#2a9cc8" stroke-width="1"/><line x1="345.5" y1="490.3" x2="345.5" y2="495.3" stroke="#bcb020" stroke-width="1"/><line x1="346.5" y1="487.7" x2="346.5" y2="492.1" stroke="#bcb020" stroke-width="1"/><line x1="347.5" y1="488.2" x2="347.5" y2="497.5" stroke="#bcb020" stroke-width="1"/><line x1="347.5" y1="495.0" x2="347.5" y2="497.5" stroke="#2a9cc8" stroke-width="1"/><line x1="348.5" y1="489.6" x2="348.5" y2="495.9" stroke="#bcb020" stroke-width="1"/><line x1="349.5" y1="491.8" x2="349.5" y2="495.3" stroke="#bcb020" stroke-width="1"/><line x1="350.5" y1="491.7" x2="350.5" y2="493.7" stroke="#bcb020" stroke-width="1"/><line x1="351.5" y1="488.7" x2="351.5" y2="499.5" stroke="#bcb020" stroke-width="1"/><line x1="352.5" y1="489.4" x2="352.5" y2="516.6" stroke="#bcb020" stroke-width="1"/><line x1="354.5" y1="487.5" x2="354.5" y2="496.4" stroke="#bcb020" stroke-width="1"/><line x1="355.5" y1="488.9" x2="355.5" y2="492.8" stroke="#bcb020" stroke-width="1"/><line x1="356.5" y1="491.8" x2="356.5" y2="505.5" stroke="#bcb020" stroke-width="1"/><line x1="356.5" y1="503.0" x2="356.5" y2="505.5" stroke="#2a9cc8" stroke-width="1"/><line x1="357.5" y1="490.1" x2="357.5" y2="498.8" stroke="#bcb020" stroke-width="1"/><line x1="358.5" y1="491.5" x2="358.5" y2="495.7" stroke="#bcb020" stroke-width="1"/><line x1="359.5" y1="490.0" x2="359.5" y2="495.8" stroke="#bcb020" stroke-width="1"/><line x1="359.5" y1="493.3" x2="359.5" y2="495.8" stroke="#2a9cc8" stroke-width="1"/><line x1="360.5" y1="488.6" x2="360.5" y2="493.2" stroke="#bcb020" stroke-width="1"/><line x1="361.5" y1="490.4" x2="361.5" y2="500.8" stroke="#bcb020" stroke-width="1"/><line x1="362.5" y1="491.9" x2="362.5" y2="495.6" stroke="#bcb020" stroke-width="1"/><line x1="363.5" y1="488.4" x2="363.5" y2="510.8" stroke="#bcb020" stroke-width="1"/><line x1="363.5" y1="508.3" x2="363.5" y2="510.8" stroke="#2a9cc8" stroke-width="1"/><line x1="364.5" y1="491.9" x2="364.5" y2="501.4" stroke="#bcb020" stroke-width="1"/><line x1="365.5" y1="488.4" x2="365.5" y2="491.2" stroke="#bcb020" stroke-width="1"/><line x1="366.5" y1="488.7" x2="366.5" y2="498.8" stroke="#bcb020" stroke-width="1"/><line x1="366.5" y1="496.3" x2="366.5" y2="498.8" stroke="#2a9cc8" stroke-width="1"/><line x1="367.5" y1="489.3" x2="367.5" y2="503.3" stroke="#bcb020" stroke-width="1"/><line x1="368.5" y1="490.8" x2="368.5" y2="508.1" stroke="#bcb020" stroke-width="1"/><line x1="369.5" y1="491.2" x2="369.5" y2="505.1" stroke="#bcb020" stroke-width="1"/><line x1="369.5" y1="502.6" x2="369.5" y2="505.1" stroke="#2a9cc8" stroke-width="1"/><line x1="370.5" y1="489.8" x2="370.5" y2="496.0" stroke="#bcb020" stroke-width="1"/><line x1="370.5" y1="493.5" x2="370.5" y2="496.0" stroke="#2a9cc8" stroke-width="1"/><line x1="371.5" y1="491.5" x2="371.5" y2="521.5" stroke="#bcb020" stroke-width="1"/><line x1="371.5" y1="519.0" x2="371.5" y2="521.5" stroke="#2a9cc8" stroke-width="1"/><line x1="372.5" y1="489.8" x2="372.5" y2="505.2" stroke="#bcb020" stroke-width="1"/><line x1="372.5" y1="502.7" x2="372.5" y2="505.2" stroke="#2a9cc8" stroke-width="1"/><line x1="373.5" y1="491.0" x2="373.5" y2="501.1" stroke="#bcb020" stroke-width="1"/><line x1="374.5" y1="488.4" x2="374.5" y2="494.7" stroke="#bcb020" stroke-width="1"/><line x1="375.5" y1="491.4" x2="375.5" y2="508.0" stroke="#bcb020" stroke-width="1"/><line x1="376.5" y1="489.6" x2="376.5" y2="511.6" stroke="#bcb020" stroke-width="1"/><line x1="377.5" y1="488.5" x2="377.5" y2="502.9" stroke="#bcb020" stroke-width="1"/><line x1="378.5" y1="492.3" x2="378.5" y2="505.6" stroke="#bcb020" stroke-width="1"/><line x1="378.5" y1="503.1" x2="378.5" y2="505.6" stroke="#2a9cc8" stroke-width="1"/><line x1="379.5" y1="488.7" x2="379.5" y2="492.1" stroke="#bcb020" stroke-width="1"/><line x1="380.5" y1="489.3" x2="380.5" y2="492.6" stroke="#bcb020" stroke-width="1"/><line x1="381.5" y1="491.3" x2="381.5" y2="516.2" stroke="#bcb020" stroke-width="1"/><line x1="381.5" y1="513.7" x2="381.5" y2="516.2" stroke="#2a9cc8" stroke-width="1"/><line x1="382.5" y1="488.6" x2="382.5" y2="495.8" stroke="#bcb020" stroke-width="1"/><line x1="383.5" y1="488.8" x2="383.5" y2="493.6" stroke="#bcb020" stroke-width="1"/><line x1="384.5" y1="488.2" x2="384.5" y2="495.4" stroke="#bcb020" stroke-width="1"/><line x1="385.5" y1="489.6" x2="385.5" y2="494.2" stroke="#bcb020" stroke-width="1"/><line x1="387.5" y1="490.4" x2="387.5" y2="497.1" stroke="#bcb020" stroke-width="1"/><line x1="387.5" y1="494.6" x2="387.5" y2="497.1" stroke="#2a9cc8" stroke-width="1"/><line x1="388.5" y1="491.1" x2="388.5" y2="497.1" stroke="#bcb020" stroke-width="1"/><line x1="389.5" y1="488.4" x2="389.5" y2="491.8" stroke="#bcb020" stroke-width="1"/><line x1="390.5" y1="487.6" x2="390.5" y2="498.8" stroke="#bcb020" stroke-width="1"/><line x1="390.5" y1="496.3" x2="390.5" y2="498.8" stroke="#2a9cc8" stroke-width="1"/><line x1="391.5" y1="488.3" x2="391.5" y2="493.8" stroke="#bcb020" stroke-width="1"/><line x1="392.5" y1="492.4" x2="392.5" y2="494.8" stroke="#bcb020" stroke-width="1"/><line x1="393.5" y1="491.7" x2="393.5" y2="508.8" stroke="#bcb020" stroke-width="1"/><line x1="393.5" y1="506.3" x2="393.5" y2="508.8" stroke="#2a9cc8" stroke-width="1"/><line x1="394.5" y1="490.7" x2="394.5" y2="497.6" stroke="#bcb020" stroke-width="1"/><line x1="394.5" y1="495.1" x2="394.5" y2="497.6" stroke="#2a9cc8" stroke-width="1"/><line x1="395.5" y1="492.4" x2="395.5" y2="523.1" stroke="#bcb020" stroke-width="1"/><line x1="396.5" y1="491.4" x2="396.5" y2="496.9" stroke="#bcb020" stroke-width="1"/><line x1="396.5" y1="494.4" x2="396.5" y2="496.9" stroke="#2a9cc8" stroke-width="1"/><line x1="397.5" y1="488.8" x2="397.5" y2="501.0" stroke="#bcb020" stroke-width="1"/><line x1="398.5" y1="490.6" x2="398.5" y2="502.4" stroke="#bcb020" stroke-width="1"/><line x1="399.5" y1="491.9" x2="399.5" y2="498.9" stroke="#bcb020" stroke-width="1"/><line x1="400.5" y1="488.6" x2="400.5" y2="495.1" stroke="#bcb020" stroke-width="1"/><line x1="400.5" y1="492.6" x2="400.5" y2="495.1" stroke="#2a9cc8" stroke-width="1"/><line x1="401.5" y1="490.3" x2="401.5" y2="493.8" stroke="#bcb020" stroke-width="1"/><line x1="402.5" y1="488.9" x2="402.5" y2="503.1" stroke="#bcb020" stroke-width="1"/><line x1="403.5" y1="487.6" x2="403.5" y2="491.2" stroke="#bcb020" stroke-width="1"/><line x1="404.5" y1="491.1" x2="404.5" y2="495.7" stroke="#bcb020" stroke-width="1"/><line x1="405.5" y1="488.7" x2="405.5" y2="516.2" stroke="#bcb020" stroke-width="1"/><line x1="406.5" y1="491.2" x2="406.5" y2="526.6" stroke="#bcb020" stroke-width="1"/><line x1="406.5" y1="524.1" x2="406.5" y2="526.6" stroke="#2a9cc8" stroke-width="1"/><line x1="407.5" y1="487.7" x2="407.5" y2="492.0" stroke="#bcb020" stroke-width="1"/><line x1="408.5" y1="492.3" x2="408.5" y2="502.7" stroke="#bcb020" stroke-width="1"/><line x1="408.5" y1="500.2" x2="408.5" y2="502.7" stroke="#2a9cc8" stroke-width="1"/><line x1="409.5" y1="488.3" x2="409.5" y2="491.8" stroke="#bcb020" stroke-width="1"/><line x1="410.5" y1="490.2" x2="410.5" y2="498.8" stroke="#bcb020" stroke-width="1"/><line x1="411.5" y1="489.7" x2="411.5" y2="499.6" stroke="#bcb020" stroke-width="1"/><line x1="411.5" y1="497.1" x2="411.5" y2="499.6" stroke="#2a9cc8" stroke-width="1"/><line x1="412.5" y1="488.9" x2="412.5" y2="496.4" stroke="#bcb020" stroke-width="1"/><line x1="412.5" y1="493.9" x2="412.5" y2="496.4" stroke="#2a9cc8" stroke-width="1"/><line x1="413.5" y1="488.0" x2="413.5" y2="492.6" stroke="#bcb020" stroke-width="1"/><line x1="414.5" y1="488.1" x2="414.5" y2="495.3" stroke="#bcb020" stroke-width="1"/><line x1="415.5" y1="491.1" x2="415.5" y2="501.5" stroke="#bcb020" stroke-width="1"/><line x1="415.5" y1="499.0" x2="415.5" y2="501.5" stroke="#2a9cc8" stroke-width="1"/><line x1="416.5" y1="491.6" x2="416.5" y2="497.9" stroke="#bcb020" stroke-width="1"/><line x1="418.5" y1="488.6" x2="418.5" y2="498.9" stroke="#bcb020" stroke-width="1"/><line x1="419.5" y1="490.4" x2="419.5" y2="510.4" stroke="#bcb020" stroke-width="1"/><line x1="419.5" y1="507.9" x2="419.5" y2="510.4" stroke="#2a9cc8" stroke-width="1"/><line x1="420.5" y1="488.4" x2="420.5" y2="492.7" stroke="#bcb020" stroke-width="1"/><line x1="421.5" y1="489.6" x2="421.5" y2="491.7" stroke="#bcb020" stroke-width="1"/><line x1="422.5" y1="488.8" x2="422.5" y2="504.6" stroke="#bcb020" stroke-width="1"/><line x1="422.5" y1="502.1" x2="422.5" y2="504.6" stroke="#2a9cc8" stroke-width="1"/><line x1="423.5" y1="491.7" x2="423.5" y2="496.4" stroke="#bcb020" stroke-width="1"/><line x1="424.5" y1="490.6" x2="424.5" y2="497.8" stroke="#bcb020" stroke-width="1"/><line x1="424.5" y1="495.3" x2="424.5" y2="497.8" stroke="#2a9cc8" stroke-width="1"/><line x1="425.5" y1="491.2" x2="425.5" y2="502.1" stroke="#bcb020" stroke-width="1"/><line x1="425.5" y1="499.6" x2="425.5" y2="502.1" stroke="#2a9cc8" stroke-width="1"/><line x1="427.5" y1="488.1" x2="427.5" y2="495.1" stroke="#bcb020" stroke-width="1"/><line x1="427.5" y1="492.6" x2="427.5" y2="495.1" stroke="#2a9cc8" stroke-width="1"/><line x1="428.5" y1="490.5" x2="428.5" y2="505.5" stroke="#bcb020" stroke-width="1"/><line x1="428.5" y1="503.0" x2="428.5" y2="505.5" stroke="#2a9cc8" stroke-width="1"/><line x1="430.5" y1="488.2" x2="430.5" y2="490.4" stroke="#bcb020" stroke-width="1"/><line x1="431.5" y1="488.9" x2="431.5" y2="501.7" stroke="#bcb020" stroke-width="1"/><line x1="432.5" y1="489.8" x2="432.5" y2="493.1" stroke="#bcb020" stroke-width="1"/><line x1="434.5" y1="491.3" x2="434.5" y2="516.2" stroke="#bcb020" stroke-width="1"/><line x1="434.5" y1="513.7" x2="434.5" y2="516.2" stroke="#2a9cc8" stroke-width="1"/><line x1="435.5" y1="489.2" x2="435.5" y2="495.7" stroke="#bcb020" stroke-width="1"/><line x1="436.5" y1="491.2" x2="436.5" y2="499.0" stroke="#bcb020" stroke-width="1"/><line x1="436.5" y1="496.5" x2="436.5" y2="499.0" stroke="#2a9cc8" stroke-width="1"/><line x1="437.5" y1="492.2" x2="437.5" y2="502.9" stroke="#bcb020" stroke-width="1"/><line x1="438.5" y1="489.3" x2="438.5" y2="494.3" stroke="#bcb020" stroke-width="1"/><line x1="438.5" y1="491.8" x2="438.5" y2="494.3" stroke="#2a9cc8" stroke-width="1"/><line x1="440.5" y1="488.8" x2="440.5" y2="492.2" stroke="#bcb020" stroke-width="1"/><line x1="441.5" y1="491.9" x2="441.5" y2="505.2" stroke="#bcb020" stroke-width="1"/><line x1="442.5" y1="492.5" x2="442.5" y2="495.1" stroke="#bcb020" stroke-width="1"/><line x1="443.5" y1="489.3" x2="443.5" y2="499.0" stroke="#bcb020" stroke-width="1"/><line x1="444.5" y1="491.3" x2="444.5" y2="530.3" stroke="#bcb020" stroke-width="1"/><line x1="444.5" y1="527.8" x2="444.5" y2="530.3" stroke="#2a9cc8" stroke-width="1"/><line x1="445.5" y1="490.8" x2="445.5" y2="496.6" stroke="#bcb020" stroke-width="1"/><line x1="445.5" y1="494.1" x2="445.5" y2="496.6" stroke="#2a9cc8" stroke-width="1"/><line x1="446.5" y1="488.0" x2="446.5" y2="490.1" stroke="#bcb020" stroke-width="1"/><line x1="447.5" y1="488.5" x2="447.5" y2="497.3" stroke="#bcb020" stroke-width="1"/><line x1="450.5" y1="490.3" x2="450.5" y2="499.6" stroke="#bcb020" stroke-width="1"/><line x1="451.5" y1="489.6" x2="451.5" y2="507.0" stroke="#bcb020" stroke-width="1"/><line x1="452.5" y1="490.4" x2="452.5" y2="522.8" stroke="#bcb020" stroke-width="1"/><line x1="452.5" y1="520.3" x2="452.5" y2="522.8" stroke="#2a9cc8" stroke-width="1"/><line x1="453.5" y1="488.3" x2="453.5" y2="491.2" stroke="#bcb020" stroke-width="1"/><line x1="454.5" y1="489.7" x2="454.5" y2="492.7" stroke="#bcb020" stroke-width="1"/><line x1="455.5" y1="489.0" x2="455.5" y2="491.9" stroke="#bcb020" stroke-width="1"/><line x1="456.5" y1="488.9" x2="456.5" y2="494.1" stroke="#bcb020" stroke-width="1"/><line x1="457.5" y1="490.2" x2="457.5" y2="510.6" stroke="#bcb020" stroke-width="1"/><line x1="458.5" y1="491.6" x2="458.5" y2="500.8" stroke="#bcb020" stroke-width="1"/><line x1="459.5" y1="490.0" x2="459.5" y2="496.3" stroke="#bcb020" stroke-width="1"/><line x1="459.5" y1="493.8" x2="459.5" y2="496.3" stroke="#2a9cc8" stroke-width="1"/><line x1="460.5" y1="492.5" x2="460.5" y2="497.7" stroke="#bcb020" stroke-width="1"/><line x1="460.5" y1="495.2" x2="460.5" y2="497.7" stroke="#2a9cc8" stroke-width="1"/><line x1="461.5" y1="488.3" x2="461.5" y2="496.6" stroke="#bcb020" stroke-width="1"/><line x1="462.5" y1="491.0" x2="462.5" y2="497.3" stroke="#bcb020" stroke-width="1"/><line x1="462.5" y1="494.8" x2="462.5" y2="497.3" stroke="#2a9cc8" stroke-width="1"/><line x1="463.5" y1="488.0" x2="463.5" y2="492.4" stroke="#bcb020" stroke-width="1"/><line x1="464.5" y1="492.4" x2="464.5" y2="494.6" stroke="#bcb020" stroke-width="1"/><line x1="465.5" y1="490.1" x2="465.5" y2="499.3" stroke="#bcb020" stroke-width="1"/><line x1="466.5" y1="489.3" x2="466.5" y2="499.1" stroke="#bcb020" stroke-width="1"/><line x1="467.5" y1="491.6" x2="467.5" y2="502.5" stroke="#bcb020" stroke-width="1"/><line x1="467.5" y1="500.0" x2="467.5" y2="502.5" stroke="#2a9cc8" stroke-width="1"/><line x1="468.5" y1="490.0" x2="468.5" y2="501.8" stroke="#bcb020" stroke-width="1"/><line x1="468.5" y1="499.3" x2="468.5" y2="501.8" stroke="#2a9cc8" stroke-width="1"/><line x1="469.5" y1="489.8" x2="469.5" y2="492.5" stroke="#bcb020" stroke-width="1"/><line x1="470.5" y1="492.6" x2="470.5" y2="503.7" stroke="#bcb020" stroke-width="1"/><line x1="472.5" y1="488.5" x2="472.5" y2="496.9" stroke="#bcb020" stroke-width="1"/><line x1="473.5" y1="488.2" x2="473.5" y2="495.3" stroke="#bcb020" stroke-width="1"/><line x1="474.5" y1="490.5" x2="474.5" y2="495.9" stroke="#bcb020" stroke-width="1"/><line x1="474.5" y1="493.4" x2="474.5" y2="495.9" stroke="#2a9cc8" stroke-width="1"/><line x1="475.5" y1="488.7" x2="475.5" y2="494.0" stroke="#bcb020" stroke-width="1"/><line x1="476.5" y1="491.7" x2="476.5" y2="493.8" stroke="#bcb020" stroke-width="1"/><line x1="477.5" y1="489.5" x2="477.5" y2="496.9" stroke="#bcb020" stroke-width="1"/><line x1="477.5" y1="494.4" x2="477.5" y2="496.9" stroke="#2a9cc8" stroke-width="1"/><line x1="478.5" y1="489.1" x2="478.5" y2="503.5" stroke="#bcb020" stroke-width="1"/><line x1="478.5" y1="501.0" x2="478.5" y2="503.5" stroke="#2a9cc8" stroke-width="1"/><line x1="479.5" y1="488.4" x2="479.5" y2="492.8" stroke="#bcb020" stroke-width="1"/><line x1="480.5" y1="491.6" x2="480.5" y2="495.2" stroke="#bcb020" stroke-width="1"/><line x1="481.5" y1="492.4" x2="481.5" y2="498.2" stroke="#bcb020" stroke-width="1"/><line x1="481.5" y1="495.7" x2="481.5" y2="498.2" stroke="#2a9cc8" stroke-width="1"/><line x1="482.5" y1="492.6" x2="482.5" y2="506.6" stroke="#bcb020" stroke-width="1"/><line x1="482.5" y1="504.1" x2="482.5" y2="506.6" stroke="#2a9cc8" stroke-width="1"/><line x1="483.5" y1="489.3" x2="483.5" y2="516.6" stroke="#bcb020" stroke-width="1"/><line x1="484.5" y1="491.5" x2="484.5" y2="493.8" stroke="#bcb020" stroke-width="1"/><line x1="485.5" y1="488.5" x2="485.5" y2="497.1" stroke="#bcb020" stroke-width="1"/><line x1="487.5" y1="492.0" x2="487.5" y2="494.6" stroke="#bcb020" stroke-width="1"/><line x1="488.5" y1="489.1" x2="488.5" y2="507.0" stroke="#bcb020" stroke-width="1"/><line x1="488.5" y1="504.5" x2="488.5" y2="507.0" stroke="#2a9cc8" stroke-width="1"/><line x1="489.5" y1="490.2" x2="489.5" y2="494.8" stroke="#bcb020" stroke-width="1"/><line x1="490.5" y1="488.6" x2="490.5" y2="500.7" stroke="#bcb020" stroke-width="1"/><line x1="491.5" y1="489.5" x2="491.5" y2="508.9" stroke="#bcb020" stroke-width="1"/><line x1="491.5" y1="506.4" x2="491.5" y2="508.9" stroke="#2a9cc8" stroke-width="1"/><line x1="492.5" y1="491.6" x2="492.5" y2="494.3" stroke="#bcb020" stroke-width="1"/><line x1="493.5" y1="488.8" x2="493.5" y2="505.8" stroke="#bcb020" stroke-width="1"/><line x1="494.5" y1="492.0" x2="494.5" y2="496.2" stroke="#bcb020" stroke-width="1"/><line x1="495.5" y1="490.8" x2="495.5" y2="494.6" stroke="#bcb020" stroke-width="1"/><line x1="496.5" y1="491.7" x2="496.5" y2="494.8" stroke="#bcb020" stroke-width="1"/><line x1="498.5" y1="489.6" x2="498.5" y2="492.8" stroke="#bcb020" stroke-width="1"/><line x1="499.5" y1="492.0" x2="499.5" y2="497.0" stroke="#bcb020" stroke-width="1"/><line x1="500.5" y1="489.8" x2="500.5" y2="494.8" stroke="#bcb020" stroke-width="1"/><line x1="501.5" y1="489.7" x2="501.5" y2="506.9" stroke="#bcb020" stroke-width="1"/><line x1="502.5" y1="488.5" x2="502.5" y2="497.4" stroke="#bcb020" stroke-width="1"/><line x1="502.5" y1="494.9" x2="502.5" y2="497.4" stroke="#2a9cc8" stroke-width="1"/><line x1="503.5" y1="492.5" x2="503.5" y2="507.5" stroke="#bcb020" stroke-width="1"/><line x1="504.5" y1="491.1" x2="504.5" y2="497.6" stroke="#bcb020" stroke-width="1"/><line x1="504.5" y1="495.1" x2="504.5" y2="497.6" stroke="#2a9cc8" stroke-width="1"/><line x1="505.5" y1="491.7" x2="505.5" y2="500.6" stroke="#bcb020" stroke-width="1"/><line x1="505.5" y1="498.1" x2="505.5" y2="500.6" stroke="#2a9cc8" stroke-width="1"/><line x1="506.5" y1="492.5" x2="506.5" y2="498.0" stroke="#bcb020" stroke-width="1"/><line x1="506.5" y1="495.5" x2="506.5" y2="498.0" stroke="#2a9cc8" stroke-width="1"/><line x1="507.5" y1="492.9" x2="507.5" y2="505.3" stroke="#bcb020" stroke-width="1"/><line x1="507.5" y1="502.8" x2="507.5" y2="505.3" stroke="#2a9cc8" stroke-width="1"/><line x1="508.5" y1="491.7" x2="508.5" y2="495.8" stroke="#bcb020" stroke-width="1"/><line x1="509.5" y1="489.2" x2="509.5" y2="500.6" stroke="#bcb020" stroke-width="1"/><line x1="510.5" y1="489.9" x2="510.5" y2="505.9" stroke="#bcb020" stroke-width="1"/><line x1="510.5" y1="503.4" x2="510.5" y2="505.9" stroke="#2a9cc8" stroke-width="1"/><line x1="511.5" y1="488.6" x2="511.5" y2="501.0" stroke="#bcb020" stroke-width="1"/><line x1="512.5" y1="489.7" x2="512.5" y2="515.7" stroke="#bcb020" stroke-width="1"/><line x1="512.5" y1="513.2" x2="512.5" y2="515.7" stroke="#2a9cc8" stroke-width="1"/><line x1="513.5" y1="489.7" x2="513.5" y2="515.8" stroke="#bcb020" stroke-width="1"/><line x1="514.5" y1="492.2" x2="514.5" y2="500.6" stroke="#bcb020" stroke-width="1"/><line x1="515.5" y1="488.7" x2="515.5" y2="491.3" stroke="#bcb020" stroke-width="1"/><line x1="517.5" y1="491.3" x2="517.5" y2="500.1" stroke="#bcb020" stroke-width="1"/><line x1="517.5" y1="497.6" x2="517.5" y2="500.1" stroke="#2a9cc8" stroke-width="1"/><line x1="518.5" y1="492.3" x2="518.5" y2="541.7" stroke="#bcb020" stroke-width="1"/><line x1="518.5" y1="539.2" x2="518.5" y2="541.7" stroke="#2a9cc8" stroke-width="1"/><line x1="519.5" y1="490.3" x2="519.5" y2="495.7" stroke="#bcb020" stroke-width="1"/><line x1="519.5" y1="493.2" x2="519.5" y2="495.7" stroke="#2a9cc8" stroke-width="1"/><line x1="520.5" y1="492.0" x2="520.5" y2="499.9" stroke="#bcb020" stroke-width="1"/><line x1="521.5" y1="492.5" x2="521.5" y2="506.9" stroke="#bcb020" stroke-width="1"/><line x1="521.5" y1="504.4" x2="521.5" y2="506.9" stroke="#2a9cc8" stroke-width="1"/><line x1="522.5" y1="489.9" x2="522.5" y2="496.2" stroke="#bcb020" stroke-width="1"/><line x1="523.5" y1="488.8" x2="523.5" y2="504.2" stroke="#bcb020" stroke-width="1"/><line x1="523.5" y1="501.7" x2="523.5" y2="504.2" stroke="#2a9cc8" stroke-width="1"/><line x1="524.5" y1="488.5" x2="524.5" y2="490.6" stroke="#bcb020" stroke-width="1"/><line x1="525.5" y1="489.5" x2="525.5" y2="500.7" stroke="#bcb020" stroke-width="1"/><line x1="525.5" y1="498.2" x2="525.5" y2="500.7" stroke="#2a9cc8" stroke-width="1"/><line x1="526.5" y1="488.8" x2="526.5" y2="497.8" stroke="#bcb020" stroke-width="1"/><line x1="527.5" y1="489.6" x2="527.5" y2="494.7" stroke="#bcb020" stroke-width="1"/><line x1="528.5" y1="490.6" x2="528.5" y2="493.5" stroke="#bcb020" stroke-width="1"/><line x1="529.5" y1="493.5" x2="529.5" y2="498.4" stroke="#bcb020" stroke-width="1"/><line x1="530.5" y1="491.9" x2="530.5" y2="503.6" stroke="#bcb020" stroke-width="1"/><line x1="530.5" y1="501.1" x2="530.5" y2="503.6" stroke="#2a9cc8" stroke-width="1"/><line x1="532.5" y1="492.6" x2="532.5" y2="509.8" stroke="#bcb020" stroke-width="1"/><line x1="533.5" y1="493.4" x2="533.5" y2="500.5" stroke="#bcb020" stroke-width="1"/><line x1="533.5" y1="498.0" x2="533.5" y2="500.5" stroke="#2a9cc8" stroke-width="1"/><line x1="534.5" y1="489.6" x2="534.5" y2="504.1" stroke="#bcb020" stroke-width="1"/><line x1="535.5" y1="493.3" x2="535.5" y2="495.9" stroke="#bcb020" stroke-width="1"/><line x1="536.5" y1="491.7" x2="536.5" y2="506.4" stroke="#bcb020" stroke-width="1"/><line x1="536.5" y1="503.9" x2="536.5" y2="506.4" stroke="#2a9cc8" stroke-width="1"/><line x1="537.5" y1="493.7" x2="537.5" y2="502.8" stroke="#bcb020" stroke-width="1"/><line x1="537.5" y1="500.3" x2="537.5" y2="502.8" stroke="#2a9cc8" stroke-width="1"/><line x1="538.5" y1="490.4" x2="538.5" y2="503.1" stroke="#bcb020" stroke-width="1"/><line x1="539.5" y1="491.3" x2="539.5" y2="495.6" stroke="#bcb020" stroke-width="1"/><line x1="540.5" y1="493.0" x2="540.5" y2="497.6" stroke="#bcb020" stroke-width="1"/><line x1="541.5" y1="494.2" x2="541.5" y2="504.7" stroke="#bcb020" stroke-width="1"/><line x1="541.5" y1="502.2" x2="541.5" y2="504.7" stroke="#2a9cc8" stroke-width="1"/><line x1="542.5" y1="492.6" x2="542.5" y2="507.6" stroke="#bcb020" stroke-width="1"/><line x1="542.5" y1="505.1" x2="542.5" y2="507.6" stroke="#2a9cc8" stroke-width="1"/><line x1="543.5" y1="493.3" x2="543.5" y2="496.7" stroke="#bcb020" stroke-width="1"/><line x1="544.5" y1="490.3" x2="544.5" y2="496.8" stroke="#bcb020" stroke-width="1"/><line x1="545.5" y1="494.0" x2="545.5" y2="500.9" stroke="#bcb020" stroke-width="1"/><line x1="546.5" y1="491.8" x2="546.5" y2="494.7" stroke="#bcb020" stroke-width="1"/><line x1="547.5" y1="493.8" x2="547.5" y2="502.9" stroke="#bcb020" stroke-width="1"/><line x1="547.5" y1="500.4" x2="547.5" y2="502.9" stroke="#2a9cc8" stroke-width="1"/><line x1="548.5" y1="491.2" x2="548.5" y2="494.9" stroke="#bcb020" stroke-width="1"/><line x1="549.5" y1="495.2" x2="549.5" y2="506.0" stroke="#bcb020" stroke-width="1"/><line x1="551.5" y1="495.0" x2="551.5" y2="500.1" stroke="#bcb020" stroke-width="1"/><line x1="551.5" y1="497.6" x2="551.5" y2="500.1" stroke="#2a9cc8" stroke-width="1"/><line x1="553.5" y1="494.2" x2="553.5" y2="503.0" stroke="#bcb020" stroke-width="1"/><line x1="554.5" y1="493.3" x2="554.5" y2="504.9" stroke="#bcb020" stroke-width="1"/><line x1="555.5" y1="494.0" x2="555.5" y2="499.6" stroke="#bcb020" stroke-width="1"/><line x1="556.5" y1="495.5" x2="556.5" y2="544.8" stroke="#bcb020" stroke-width="1"/><line x1="557.5" y1="493.6" x2="557.5" y2="507.0" stroke="#bcb020" stroke-width="1"/><line x1="557.5" y1="504.5" x2="557.5" y2="507.0" stroke="#2a9cc8" stroke-width="1"/><line x1="558.5" y1="491.8" x2="558.5" y2="504.2" stroke="#bcb020" stroke-width="1"/><line x1="559.5" y1="493.7" x2="559.5" y2="496.0" stroke="#bcb020" stroke-width="1"/><line x1="560.5" y1="495.4" x2="560.5" y2="499.7" stroke="#bcb020" stroke-width="1"/><line x1="561.5" y1="495.7" x2="561.5" y2="512.1" stroke="#bcb020" stroke-width="1"/><line x1="562.5" y1="491.3" x2="562.5" y2="495.5" stroke="#bcb020" stroke-width="1"/><line x1="565.5" y1="496.1" x2="565.5" y2="508.6" stroke="#bcb020" stroke-width="1"/><line x1="565.5" y1="506.1" x2="565.5" y2="508.6" stroke="#2a9cc8" stroke-width="1"/><line x1="566.5" y1="492.2" x2="566.5" y2="495.0" stroke="#bcb020" stroke-width="1"/><line x1="567.5" y1="495.6" x2="567.5" y2="516.7" stroke="#bcb020" stroke-width="1"/><line x1="567.5" y1="514.2" x2="567.5" y2="516.7" stroke="#2a9cc8" stroke-width="1"/><line x1="568.5" y1="494.6" x2="568.5" y2="498.6" stroke="#bcb020" stroke-width="1"/><line x1="569.5" y1="493.1" x2="569.5" y2="501.8" stroke="#bcb020" stroke-width="1"/><line x1="570.5" y1="494.4" x2="570.5" y2="504.3" stroke="#bcb020" stroke-width="1"/><line x1="571.5" y1="492.3" x2="571.5" y2="498.1" stroke="#bcb020" stroke-width="1"/><line x1="571.5" y1="495.6" x2="571.5" y2="498.1" stroke="#2a9cc8" stroke-width="1"/><line x1="572.5" y1="493.6" x2="572.5" y2="501.4" stroke="#bcb020" stroke-width="1"/><line x1="573.5" y1="495.8" x2="573.5" y2="509.3" stroke="#bcb020" stroke-width="1"/><line x1="574.5" y1="493.4" x2="574.5" y2="497.3" stroke="#bcb020" stroke-width="1"/><line x1="575.5" y1="493.0" x2="575.5" y2="495.1" stroke="#bcb020" stroke-width="1"/><line x1="576.5" y1="496.8" x2="576.5" y2="499.5" stroke="#bcb020" stroke-width="1"/><line x1="578.5" y1="496.1" x2="578.5" y2="500.3" stroke="#bcb020" stroke-width="1"/><line x1="579.5" y1="496.0" x2="579.5" y2="508.5" stroke="#bcb020" stroke-width="1"/><line x1="580.5" y1="496.7" x2="580.5" y2="523.5" stroke="#bcb020" stroke-width="1"/><line x1="580.5" y1="521.0" x2="580.5" y2="523.5" stroke="#2a9cc8" stroke-width="1"/><line x1="581.5" y1="492.9" x2="581.5" y2="535.0" stroke="#bcb020" stroke-width="1"/><line x1="582.5" y1="494.9" x2="582.5" y2="497.1" stroke="#bcb020" stroke-width="1"/><line x1="583.5" y1="493.1" x2="583.5" y2="497.8" stroke="#bcb020" stroke-width="1"/><line x1="585.5" y1="495.2" x2="585.5" y2="499.0" stroke="#bcb020" stroke-width="1"/><line x1="586.5" y1="498.0" x2="586.5" y2="517.3" stroke="#bcb020" stroke-width="1"/><line x1="586.5" y1="514.8" x2="586.5" y2="517.3" stroke="#2a9cc8" stroke-width="1"/><line x1="587.5" y1="496.9" x2="587.5" y2="500.5" stroke="#bcb020" stroke-width="1"/><line x1="588.5" y1="494.1" x2="588.5" y2="511.3" stroke="#bcb020" stroke-width="1"/><line x1="589.5" y1="495.3" x2="589.5" y2="498.2" stroke="#bcb020" stroke-width="1"/><line x1="590.5" y1="494.8" x2="590.5" y2="500.5" stroke="#bcb020" stroke-width="1"/><line x1="592.5" y1="494.4" x2="592.5" y2="498.3" stroke="#bcb020" stroke-width="1"/><line x1="593.5" y1="496.0" x2="593.5" y2="504.7" stroke="#bcb020" stroke-width="1"/><line x1="594.5" y1="496.0" x2="594.5" y2="509.3" stroke="#bcb020" stroke-width="1"/><line x1="595.5" y1="498.5" x2="595.5" y2="505.1" stroke="#bcb020" stroke-width="1"/><line x1="595.5" y1="502.6" x2="595.5" y2="505.1" stroke="#2a9cc8" stroke-width="1"/><line x1="597.5" y1="494.8" x2="597.5" y2="498.0" stroke="#bcb020" stroke-width="1"/><line x1="598.5" y1="494.6" x2="598.5" y2="496.6" stroke="#bcb020" stroke-width="1"/><line x1="599.5" y1="494.3" x2="599.5" y2="498.1" stroke="#bcb020" stroke-width="1"/><line x1="600.5" y1="498.9" x2="600.5" y2="527.1" stroke="#bcb020" stroke-width="1"/><line x1="601.5" y1="495.8" x2="601.5" y2="498.0" stroke="#bcb020" stroke-width="1"/><line x1="602.5" y1="495.9" x2="602.5" y2="521.6" stroke="#bcb020" stroke-width="1"/><line x1="602.5" y1="519.1" x2="602.5" y2="521.6" stroke="#2a9cc8" stroke-width="1"/><line x1="603.5" y1="496.1" x2="603.5" y2="498.8" stroke="#bcb020" stroke-width="1"/><line x1="605.5" y1="494.3" x2="605.5" y2="498.6" stroke="#bcb020" stroke-width="1"/><line x1="606.5" y1="498.0" x2="606.5" y2="507.2" stroke="#bcb020" stroke-width="1"/><line x1="607.5" y1="497.5" x2="607.5" y2="500.2" stroke="#bcb020" stroke-width="1"/><line x1="609.5" y1="496.0" x2="609.5" y2="506.2" stroke="#bcb020" stroke-width="1"/><line x1="609.5" y1="503.7" x2="609.5" y2="506.2" stroke="#2a9cc8" stroke-width="1"/><line x1="610.5" y1="497.8" x2="610.5" y2="505.5" stroke="#bcb020" stroke-width="1"/><line x1="611.5" y1="499.3" x2="611.5" y2="508.3" stroke="#bcb020" stroke-width="1"/><line x1="612.5" y1="496.5" x2="612.5" y2="502.2" stroke="#bcb020" stroke-width="1"/><line x1="614.5" y1="498.1" x2="614.5" y2="502.5" stroke="#bcb020" stroke-width="1"/><line x1="615.5" y1="499.5" x2="615.5" y2="503.2" stroke="#bcb020" stroke-width="1"/><line x1="616.5" y1="496.8" x2="616.5" y2="515.6" stroke="#bcb020" stroke-width="1"/><line x1="617.5" y1="495.5" x2="617.5" y2="498.8" stroke="#bcb020" stroke-width="1"/><line x1="618.5" y1="498.9" x2="618.5" y2="503.1" stroke="#bcb020" stroke-width="1"/><line x1="619.5" y1="496.6" x2="619.5" y2="514.5" stroke="#bcb020" stroke-width="1"/><line x1="619.5" y1="512.0" x2="619.5" y2="514.5" stroke="#2a9cc8" stroke-width="1"/><line x1="620.5" y1="497.7" x2="620.5" y2="499.9" stroke="#bcb020" stroke-width="1"/><line x1="621.5" y1="500.2" x2="621.5" y2="508.2" stroke="#bcb020" stroke-width="1"/><line x1="622.5" y1="498.8" x2="622.5" y2="520.1" stroke="#bcb020" stroke-width="1"/><line x1="623.5" y1="499.8" x2="623.5" y2="503.6" stroke="#bcb020" stroke-width="1"/><line x1="624.5" y1="498.7" x2="624.5" y2="503.0" stroke="#bcb020" stroke-width="1"/><line x1="625.5" y1="500.5" x2="625.5" y2="504.7" stroke="#bcb020" stroke-width="1"/><line x1="626.5" y1="499.2" x2="626.5" y2="510.3" stroke="#bcb020" stroke-width="1"/><line x1="627.5" y1="500.3" x2="627.5" y2="505.8" stroke="#bcb020" stroke-width="1"/><line x1="629.5" y1="500.7" x2="629.5" y2="509.9" stroke="#bcb020" stroke-width="1"/><line x1="629.5" y1="507.4" x2="629.5" y2="509.9" stroke="#2a9cc8" stroke-width="1"/><line x1="630.5" y1="503.8" x2="630.5" y2="512.5" stroke="#bcb020" stroke-width="1"/><line x1="630.5" y1="510.0" x2="630.5" y2="512.5" stroke="#2a9cc8" stroke-width="1"/><line x1="631.5" y1="503.6" x2="631.5" y2="520.8" stroke="#bcb020" stroke-width="1"/><line x1="631.5" y1="518.3" x2="631.5" y2="520.8" stroke="#2a9cc8" stroke-width="1"/><line x1="632.5" y1="501.6" x2="632.5" y2="506.2" stroke="#bcb020" stroke-width="1"/><line x1="634.5" y1="502.7" x2="634.5" y2="504.7" stroke="#bcb020" stroke-width="1"/><line x1="635.5" y1="503.3" x2="635.5" y2="515.2" stroke="#bcb020" stroke-width="1"/><line x1="636.5" y1="506.0" x2="636.5" y2="508.1" stroke="#bcb020" stroke-width="1"/><line x1="637.5" y1="507.6" x2="637.5" y2="514.0" stroke="#bcb020" stroke-width="1"/><line x1="638.5" y1="507.9" x2="638.5" y2="541.9" stroke="#bcb020" stroke-width="1"/><line x1="639.5" y1="508.4" x2="639.5" y2="520.1" stroke="#bcb020" stroke-width="1"/><line x1="640.5" y1="505.3" x2="640.5" y2="543.7" stroke="#bcb020" stroke-width="1"/><line x1="640.5" y1="541.2" x2="640.5" y2="543.7" stroke="#2a9cc8" stroke-width="1"/><line x1="641.5" y1="509.2" x2="641.5" y2="529.1" stroke="#bcb020" stroke-width="1"/><line x1="641.5" y1="526.6" x2="641.5" y2="529.1" stroke="#2a9cc8" stroke-width="1"/><line x1="643.5" y1="509.9" x2="643.5" y2="519.1" stroke="#bcb020" stroke-width="1"/><line x1="643.5" y1="516.6" x2="643.5" y2="519.1" stroke="#2a9cc8" stroke-width="1"/><line x1="644.5" y1="511.6" x2="644.5" y2="521.8" stroke="#bcb020" stroke-width="1"/><line x1="644.5" y1="519.3" x2="644.5" y2="521.8" stroke="#2a9cc8" stroke-width="1"/><line x1="645.5" y1="507.6" x2="645.5" y2="517.6" stroke="#bcb020" stroke-width="1"/><line x1="646.5" y1="508.0" x2="646.5" y2="519.5" stroke="#bcb020" stroke-width="1"/><line x1="647.5" y1="511.7" x2="647.5" y2="519.4" stroke="#bcb020" stroke-width="1"/><line x1="648.5" y1="509.9" x2="648.5" y2="513.5" stroke="#bcb020" stroke-width="1"/><line x1="649.5" y1="512.7" x2="649.5" y2="526.8" stroke="#bcb020" stroke-width="1"/><line x1="649.5" y1="524.3" x2="649.5" y2="526.8" stroke="#2a9cc8" stroke-width="1"/><line x1="650.5" y1="515.1" x2="650.5" y2="521.4" stroke="#bcb020" stroke-width="1"/><line x1="651.5" y1="515.8" x2="651.5" y2="532.2" stroke="#bcb020" stroke-width="1"/><line x1="652.5" y1="513.5" x2="652.5" y2="547.8" stroke="#bcb020" stroke-width="1"/><line x1="652.5" y1="545.3" x2="652.5" y2="547.8" stroke="#2a9cc8" stroke-width="1"/><line x1="653.5" y1="513.3" x2="653.5" y2="525.1" stroke="#bcb020" stroke-width="1"/><line x1="654.5" y1="517.7" x2="654.5" y2="529.5" stroke="#bcb020" stroke-width="1"/><line x1="654.5" y1="527.0" x2="654.5" y2="529.5" stroke="#2a9cc8" stroke-width="1"/><line x1="655.5" y1="514.2" x2="655.5" y2="518.5" stroke="#bcb020" stroke-width="1"/><line x1="656.5" y1="514.7" x2="656.5" y2="527.6" stroke="#bcb020" stroke-width="1"/><line x1="656.5" y1="525.1" x2="656.5" y2="527.6" stroke="#2a9cc8" stroke-width="1"/><line x1="657.5" y1="518.2" x2="657.5" y2="556.0" stroke="#bcb020" stroke-width="1"/><line x1="658.5" y1="517.8" x2="658.5" y2="537.4" stroke="#bcb020" stroke-width="1"/><line x1="659.5" y1="515.9" x2="659.5" y2="523.8" stroke="#bcb020" stroke-width="1"/><line x1="659.5" y1="521.3" x2="659.5" y2="523.8" stroke="#2a9cc8" stroke-width="1"/><line x1="660.5" y1="520.3" x2="660.5" y2="533.2" stroke="#bcb020" stroke-width="1"/><line x1="660.5" y1="530.7" x2="660.5" y2="533.2" stroke="#2a9cc8" stroke-width="1"/><line x1="661.5" y1="519.2" x2="661.5" y2="544.9" stroke="#bcb020" stroke-width="1"/><line x1="662.5" y1="520.5" x2="662.5" y2="543.1" stroke="#bcb020" stroke-width="1"/><line x1="663.5" y1="520.1" x2="663.5" y2="525.0" stroke="#bcb020" stroke-width="1"/><line x1="664.5" y1="523.0" x2="664.5" y2="527.0" stroke="#bcb020" stroke-width="1"/><line x1="665.5" y1="522.1" x2="665.5" y2="532.5" stroke="#bcb020" stroke-width="1"/><line x1="665.5" y1="530.0" x2="665.5" y2="532.5" stroke="#2a9cc8" stroke-width="1"/><line x1="666.5" y1="520.8" x2="666.5" y2="523.7" stroke="#bcb020" stroke-width="1"/><line x1="667.5" y1="524.0" x2="667.5" y2="526.5" stroke="#bcb020" stroke-width="1"/><line x1="668.5" y1="525.1" x2="668.5" y2="527.7" stroke="#bcb020" stroke-width="1"/><line x1="669.5" y1="524.3" x2="669.5" y2="527.9" stroke="#bcb020" stroke-width="1"/><line x1="671.5" y1="526.1" x2="671.5" y2="531.4" stroke="#bcb020" stroke-width="1"/><line x1="672.5" y1="526.9" x2="672.5" y2="533.5" stroke="#bcb020" stroke-width="1"/><line x1="674.5" y1="528.9" x2="674.5" y2="532.4" stroke="#bcb020" stroke-width="1"/><line x1="675.5" y1="526.3" x2="675.5" y2="529.8" stroke="#bcb020" stroke-width="1"/><line x1="676.5" y1="526.6" x2="676.5" y2="536.3" stroke="#bcb020" stroke-width="1"/><line x1="677.5" y1="529.7" x2="677.5" y2="538.3" stroke="#bcb020" stroke-width="1"/><line x1="678.5" y1="530.4" x2="678.5" y2="532.5" stroke="#bcb020" stroke-width="1"/><line x1="679.5" y1="530.2" x2="679.5" y2="551.7" stroke="#bcb020" stroke-width="1"/><line x1="679.5" y1="549.2" x2="679.5" y2="551.7" stroke="#2a9cc8" stroke-width="1"/><line x1="680.5" y1="530.8" x2="680.5" y2="545.6" stroke="#bcb020" stroke-width="1"/><line x1="682.5" y1="531.1" x2="682.5" y2="535.7" stroke="#bcb020" stroke-width="1"/><line x1="683.5" y1="528.1" x2="683.5" y2="544.4" stroke="#bcb020" stroke-width="1"/><line x1="683.5" y1="541.9" x2="683.5" y2="544.4" stroke="#2a9cc8" stroke-width="1"/><line x1="684.5" y1="527.1" x2="684.5" y2="549.3" stroke="#bcb020" stroke-width="1"/><line x1="685.5" y1="530.4" x2="685.5" y2="537.8" stroke="#bcb020" stroke-width="1"/><line x1="685.5" y1="535.3" x2="685.5" y2="537.8" stroke="#2a9cc8" stroke-width="1"/><line x1="687.5" y1="531.0" x2="687.5" y2="538.3" stroke="#bcb020" stroke-width="1"/><line x1="687.5" y1="535.8" x2="687.5" y2="538.3" stroke="#2a9cc8" stroke-width="1"/><line x1="688.5" y1="528.6" x2="688.5" y2="532.6" stroke="#bcb020" stroke-width="1"/><line x1="689.5" y1="526.8" x2="689.5" y2="530.3" stroke="#bcb020" stroke-width="1"/><line x1="690.5" y1="526.8" x2="690.5" y2="545.3" stroke="#bcb020" stroke-width="1"/><line x1="691.5" y1="526.8" x2="691.5" y2="538.2" stroke="#bcb020" stroke-width="1"/><line x1="691.5" y1="535.7" x2="691.5" y2="538.2" stroke="#2a9cc8" stroke-width="1"/><line x1="692.5" y1="528.3" x2="692.5" y2="534.2" stroke="#bcb020" stroke-width="1"/><line x1="692.5" y1="531.7" x2="692.5" y2="534.2" stroke="#2a9cc8" stroke-width="1"/><line x1="693.5" y1="527.4" x2="693.5" y2="546.7" stroke="#bcb020" stroke-width="1"/><line x1="694.5" y1="529.2" x2="694.5" y2="532.2" stroke="#bcb020" stroke-width="1"/><polygon points="43.5,511.2 44.5,512.1 45.5,511.4 46.5,512.2 47.5,512.9 48.5,513.7 49.5,514.3 50.5,513.1 51.5,512.8 52.5,512.2 53.5,514.3 54.5,513.2 55.5,512.3 56.5,513.9 57.5,513.9 58.5,514.3 59.5,514.8 60.5,512.8 61.5,513.6 62.5,511.2 63.5,511.7 64.5,511.5 65.5,509.4 66.5,508.6 67.5,509.4 68.5,509.3 69.5,508.0 70.5,506.6 71.5,506.8 72.5,503.5 73.5,503.9 74.5,502.9 75.5,501.0 76.5,499.3 77.5,496.4 78.5,496.7 79.5,494.0 80.5,493.9 81.5,492.0 82.5,490.9 83.5,491.4 84.5,490.9 85.5,489.6 86.5,489.2 87.5,485.8 88.5,485.3 89.5,484.1 90.5,484.8 91.5,482.6 92.5,482.2 93.5,483.1 94.5,481.6 95.5,480.6 96.5,479.9 97.5,481.1 98.5,478.1 99.5,477.4 100.5,478.1 101.5,478.3 102.5,477.8 103.5,477.3 104.5,476.0 105.5,478.0 106.5,477.5 107.5,477.2 108.5,475.3 109.5,474.9 110.5,475.3 111.5,473.8 112.5,473.6 113.5,472.6 114.5,473.2 115.5,472.0 116.5,471.9 117.5,472.8 118.5,473.9 119.5,473.7 120.5,472.9 121.5,470.7 122.5,470.4 123.5,472.4 124.5,470.9 125.5,470.5 126.5,472.8 127.5,469.8 128.5,470.6 129.5,471.8 130.5,469.6 131.5,469.7 132.5,470.5 133.5,471.8 134.5,470.4 135.5,469.3 136.5,470.6 137.5,469.4 138.5,468.8 139.5,470.8 140.5,471.5 141.5,470.7 142.5,470.9 143.5,468.8 144.5,469.0 145.5,469.4 146.5,470.7 147.5,469.5 148.5,470.7 149.5,468.2 150.5,469.8 151.5,469.3 152.5,468.4 153.5,470.5 154.5,468.0 155.5,468.0 156.5,468.9 157.5,469.4 158.5,468.9 159.5,469.8 160.5,469.0 161.5,469.7 162.5,468.4 163.5,469.8 164.5,468.2 165.5,469.6 166.5,468.6 167.5,468.6 168.5,470.3 169.5,469.9 170.5,468.1 171.5,471.0 172.5,468.2 173.5,468.8 174.5,468.8 175.5,471.0 176.5,471.0 177.5,468.7 178.5,470.5 179.5,471.2 180.5,468.9 181.5,468.9 182.5,468.7 183.5,471.1 184.5,468.5 185.5,470.2 186.5,470.1 187.5,470.4 188.5,468.9 189.5,470.3 190.5,469.9 191.5,471.0 192.5,471.3 193.5,470.2 194.5,470.8 195.5,470.2 196.5,471.9 197.5,470.0 198.5,471.2 199.5,471.6 200.5,470.2 201.5,471.4 202.5,471.0 203.5,471.5 204.5,469.4 205.5,471.3 206.5,470.8 207.5,470.5 208.5,471.3 209.5,471.6 210.5,472.2 211.5,471.6 212.5,471.5 213.5,470.8 214.5,470.1 215.5,470.9 216.5,470.4 217.5,470.7 218.5,470.0 219.5,472.7 220.5,472.6 221.5,472.3 222.5,472.1 223.5,470.7 224.5,470.0 225.5,472.6 226.5,471.0 227.5,472.4 228.5,472.5 229.5,470.4 230.5,471.1 231.5,471.3 232.5,473.1 233.5,471.9 234.5,471.9 235.5,471.6 236.5,472.4 237.5,470.7 238.5,471.3 239.5,470.5 240.5,472.6 241.5,471.0 242.5,472.6 243.5,472.7 244.5,471.3 245.5,470.6 246.5,471.1 247.5,473.4 248.5,472.3 249.5,472.3 250.5,471.4 251.5,470.7 252.5,471.6 253.5,470.9 254.5,473.5 255.5,471.4 256.5,471.1 257.5,471.5 258.5,472.6 259.5,472.7 260.5,473.4 261.5,473.1 262.5,473.1 263.5,473.1 264.5,472.6 265.5,470.6 266.5,473.3 267.5,472.6 268.5,472.6 269.5,471.0 270.5,473.5 271.5,472.6 272.5,471.3 273.5,470.6 274.5,471.0 275.5,471.7 276.5,471.0 277.5,471.4 278.5,472.2 279.5,471.4 280.5,471.5 281.5,472.9 282.5,471.2 283.5,471.8 284.5,472.6 285.5,473.3 286.5,472.6 287.5,471.4 288.5,472.0 289.5,472.0 290.5,470.9 291.5,472.1 292.5,471.4 293.5,471.0 294.5,471.8 295.5,473.5 296.5,470.9 297.5,472.9 298.5,473.3 299.5,473.3 300.5,473.5 301.5,471.4 302.5,473.3 303.5,470.9 304.5,473.5 305.5,472.9 306.5,472.1 307.5,471.3 308.5,471.8 309.5,473.7 310.5,471.3 311.5,472.7 312.5,470.8 313.5,473.0 314.5,471.4 315.5,472.6 316.5,471.2 317.5,473.6 318.5,473.3 319.5,473.5 320.5,471.4 321.5,473.5 322.5,471.4 323.5,472.1 324.5,471.3 325.5,472.5 326.5,472.0 327.5,470.8 328.5,471.5 329.5,472.3 330.5,472.3 331.5,472.6 332.5,473.3 333.5,473.8 334.5,471.5 335.5,471.8 336.5,471.8 337.5,470.9 338.5,471.3 339.5,470.8 340.5,471.6 341.5,472.5 342.5,471.2 343.5,471.2 344.5,471.3 345.5,472.4 346.5,473.5 347.5,471.5 348.5,472.6 349.5,472.1 350.5,472.8 351.5,473.7 352.5,473.7 353.5,471.0 354.5,471.2 355.5,471.7 356.5,473.8 357.5,472.1 358.5,473.4 359.5,472.8 360.5,471.2 361.5,472.9 362.5,473.3 363.5,473.8 364.5,471.1 365.5,472.6 366.5,473.0 367.5,471.6 368.5,472.5 369.5,471.1 370.5,472.8 371.5,472.9 372.5,470.9 373.5,473.0 374.5,472.9 375.5,473.8 376.5,471.6 377.5,473.8 378.5,472.2 379.5,473.6 380.5,473.1 381.5,472.9 382.5,471.3 383.5,471.6 384.5,471.1 385.5,472.2 386.5,471.2 387.5,473.8 388.5,472.0 389.5,472.3 390.5,472.4 391.5,473.0 392.5,472.1 393.5,473.3 394.5,472.9 395.5,473.1 396.5,471.6 397.5,471.9 398.5,473.5 399.5,473.5 400.5,472.8 401.5,471.1 402.5,473.2 403.5,471.3 404.5,471.6 405.5,471.1 406.5,471.9 407.5,474.1 408.5,471.5 409.5,474.1 410.5,472.2 411.5,472.2 412.5,472.7 413.5,471.4 414.5,471.8 415.5,473.2 416.5,472.1 417.5,473.6 418.5,472.9 419.5,474.2 420.5,471.6 421.5,473.5 422.5,473.6 423.5,473.9 424.5,471.8 425.5,472.1 426.5,474.0 427.5,472.3 428.5,473.6 429.5,472.0 430.5,473.4 431.5,473.6 432.5,472.5 433.5,473.3 434.5,471.8 435.5,472.4 436.5,473.7 437.5,473.6 438.5,472.4 439.5,473.8 440.5,472.3 441.5,474.2 442.5,474.0 443.5,474.3 444.5,472.9 445.5,472.1 446.5,472.2 447.5,473.5 448.5,474.8 449.5,473.4 450.5,472.4 451.5,473.6 452.5,474.2 453.5,474.4 454.5,472.3 455.5,473.6 456.5,474.2 457.5,473.2 458.5,474.4 459.5,473.4 460.5,475.0 461.5,474.1 462.5,473.7 463.5,473.2 464.5,475.3 465.5,472.8 466.5,474.2 467.5,472.6 468.5,474.7 469.5,472.7 470.5,472.8 471.5,472.6 472.5,474.8 473.5,472.9 474.5,473.0 475.5,475.1 476.5,473.1 477.5,473.9 478.5,473.0 479.5,475.6 480.5,473.5 481.5,475.4 482.5,474.1 483.5,474.6 484.5,474.2 485.5,475.0 486.5,473.4 487.5,473.1 488.5,473.9 489.5,473.6 490.5,475.9 491.5,475.5 492.5,473.4 493.5,474.0 494.5,474.2 495.5,475.6 496.5,473.0 497.5,474.9 498.5,475.9 499.5,475.6 500.5,473.9 501.5,474.2 502.5,474.3 503.5,473.8 504.5,474.4 505.5,475.9 506.5,474.0 507.5,475.7 508.5,475.4 509.5,475.7 510.5,475.3 511.5,475.8 512.5,475.0 513.5,475.8 514.5,475.9 515.5,476.0 516.5,476.2 517.5,475.5 518.5,473.6 519.5,475.1 520.5,474.5 521.5,475.8 522.5,474.0 523.5,474.1 524.5,474.3 525.5,475.6 526.5,473.4 527.5,475.3 528.5,474.5 529.5,475.4 530.5,473.9 531.5,475.6 532.5,475.6 533.5,473.8 534.5,474.5 535.5,474.5 536.5,474.2 537.5,473.9 538.5,474.6 539.5,473.6 540.5,475.4 541.5,472.9 542.5,472.7 543.5,473.9 544.5,474.0 545.5,474.3 546.5,475.1 547.5,473.5 548.5,475.2 549.5,475.5 550.5,474.2 551.5,475.1 552.5,473.6 553.5,474.0 554.5,473.6 555.5,474.6 556.5,473.6 557.5,476.2 558.5,475.6 559.5,476.0 560.5,475.6 561.5,474.4 562.5,474.0 563.5,474.9 564.5,476.2 565.5,475.1 566.5,475.2 567.5,475.5 568.5,474.9 569.5,474.5 570.5,475.0 571.5,475.2 572.5,473.8 573.5,476.0 574.5,474.6 575.5,475.5 576.5,475.8 577.5,474.6 578.5,476.2 579.5,476.2 580.5,474.9 581.5,476.9 582.5,477.0 583.5,474.5 584.5,476.7 585.5,474.7 586.5,476.3 587.5,475.4 588.5,475.2 589.5,475.0 590.5,476.4 591.5,475.0 592.5,474.9 593.5,475.6 594.5,475.2 595.5,476.0 596.5,476.2 597.5,476.2 598.5,476.6 599.5,475.4 600.5,477.0 601.5,476.2 602.5,476.3 603.5,477.1 604.5,475.5 605.5,476.8 606.5,477.6 607.5,476.2 608.5,477.9 609.5,476.5 610.5,476.9 611.5,477.5 612.5,475.7 613.5,477.9 614.5,477.1 615.5,476.4 616.5,477.0 617.5,476.0 618.5,478.1 619.5,475.6 620.5,477.1 621.5,477.0 622.5,477.2 623.5,479.2 624.5,478.1 625.5,478.1 626.5,479.6 627.5,478.6 628.5,478.9 629.5,479.7 630.5,479.5 631.5,479.5 632.5,479.7 633.5,480.4 634.5,481.2 635.5,481.5 636.5,484.1 637.5,485.2 638.5,484.7 639.5,483.9 640.5,485.4 641.5,486.6 642.5,485.9 643.5,487.7 644.5,487.2 645.5,485.8 646.5,486.4 647.5,488.5 648.5,487.0 649.5,487.6 650.5,489.5 651.5,489.2 652.5,490.1 653.5,490.2 654.5,493.0 655.5,492.8 656.5,491.8 657.5,493.0 658.5,492.7 659.5,495.2 660.5,495.4 661.5,496.9 662.5,498.9 663.5,498.3 664.5,501.2 665.5,502.2 666.5,501.0 667.5,502.8 668.5,502.8 669.5,506.2 670.5,504.6 671.5,506.1 672.5,506.9 673.5,506.7 674.5,508.7 675.5,508.0 676.5,507.5 677.5,509.4 678.5,509.4 679.5,510.3 680.5,508.4 681.5,508.1 682.5,507.7 683.5,508.6 684.5,509.8 685.5,509.7 686.5,507.3 687.5,508.4 688.5,508.4 689.5,509.3 690.5,508.7 691.5,507.1 692.5,508.8 693.5,508.3 694.5,508.2 694.5,531.2 693.5,529.4 692.5,530.3 691.5,528.8 690.5,528.8 689.5,528.8 688.5,530.6 687.5,533.0 686.5,532.4 685.5,532.4 684.5,529.1 683.5,530.1 682.5,533.1 681.5,532.0 680.5,532.8 679.5,532.2 678.5,532.4 677.5,531.7 676.5,528.6 675.5,528.3 674.5,530.9 673.5,530.5 672.5,528.9 671.5,528.1 670.5,528.2 669.5,526.3 668.5,527.1 667.5,526.0 666.5,522.8 665.5,524.1 664.5,525.0 663.5,522.1 662.5,522.5 661.5,521.2 660.5,522.3 659.5,517.9 658.5,519.8 657.5,520.2 656.5,516.7 655.5,516.2 654.5,519.7 653.5,515.3 652.5,515.5 651.5,517.8 650.5,517.1 649.5,514.7 648.5,511.9 647.5,513.7 646.5,510.0 645.5,509.6 644.5,513.6 643.5,511.9 642.5,508.0 641.5,511.2 640.5,507.3 639.5,510.4 638.5,509.9 637.5,509.6 636.5,508.0 635.5,505.3 634.5,504.7 633.5,507.1 632.5,503.6 631.5,505.6 630.5,505.8 629.5,502.7 628.5,505.4 627.5,502.3 626.5,501.2 625.5,502.5 624.5,500.7 623.5,501.8 622.5,500.8 621.5,502.2 620.5,499.7 619.5,498.6 618.5,500.9 617.5,497.5 616.5,498.8 615.5,501.5 614.5,500.1 613.5,500.6 612.5,498.5 611.5,501.3 610.5,499.8 609.5,498.0 608.5,498.4 607.5,499.5 606.5,500.0 605.5,496.3 604.5,500.5 603.5,498.1 602.5,497.9 601.5,497.8 600.5,500.9 599.5,496.3 598.5,496.6 597.5,496.8 596.5,500.5 595.5,500.5 594.5,498.0 593.5,498.0 592.5,496.4 591.5,496.5 590.5,496.8 589.5,497.3 588.5,496.1 587.5,498.9 586.5,500.0 585.5,497.2 584.5,498.2 583.5,495.1 582.5,496.9 581.5,494.9 580.5,498.7 579.5,498.0 578.5,498.1 577.5,497.2 576.5,498.8 575.5,495.0 574.5,495.4 573.5,497.8 572.5,495.6 571.5,494.3 570.5,496.4 569.5,495.1 568.5,496.6 567.5,497.6 566.5,494.2 565.5,498.1 564.5,498.1 563.5,497.8 562.5,493.3 561.5,497.7 560.5,497.4 559.5,495.7 558.5,493.8 557.5,495.6 556.5,497.5 555.5,496.0 554.5,495.3 553.5,496.2 552.5,493.9 551.5,497.0 550.5,494.2 549.5,497.2 548.5,493.2 547.5,495.8 546.5,493.8 545.5,496.0 544.5,492.3 543.5,495.3 542.5,494.6 541.5,496.2 540.5,495.0 539.5,493.3 538.5,492.4 537.5,495.7 536.5,493.7 535.5,495.3 534.5,491.6 533.5,495.4 532.5,494.6 531.5,493.2 530.5,493.9 529.5,495.5 528.5,492.6 527.5,491.6 526.5,490.8 525.5,491.5 524.5,490.5 523.5,490.8 522.5,491.9 521.5,494.5 520.5,494.0 519.5,492.3 518.5,494.3 517.5,493.3 516.5,493.7 515.5,490.7 514.5,494.2 513.5,491.7 512.5,491.7 511.5,490.6 510.5,491.9 509.5,491.2 508.5,493.7 507.5,494.9 506.5,494.5 505.5,493.7 504.5,493.1 503.5,494.5 502.5,490.5 501.5,491.7 500.5,491.8 499.5,494.0 498.5,491.6 497.5,494.4 496.5,493.7 495.5,492.8 494.5,494.0 493.5,490.8 492.5,493.6 491.5,491.5 490.5,490.6 489.5,492.2 488.5,491.1 487.5,494.0 486.5,494.7 485.5,490.5 484.5,493.5 483.5,491.3 482.5,494.6 481.5,494.4 480.5,493.6 479.5,490.4 478.5,491.1 477.5,491.5 476.5,493.7 475.5,490.7 474.5,492.5 473.5,490.2 472.5,490.5 471.5,491.3 470.5,494.6 469.5,491.8 468.5,492.0 467.5,493.6 466.5,491.3 465.5,492.1 464.5,494.4 463.5,490.0 462.5,493.0 461.5,490.3 460.5,494.5 459.5,492.0 458.5,493.6 457.5,492.2 456.5,490.9 455.5,491.0 454.5,491.7 453.5,490.3 452.5,492.4 451.5,491.6 450.5,492.3 449.5,490.7 448.5,494.1 447.5,490.5 446.5,490.0 445.5,492.8 444.5,493.3 443.5,491.3 442.5,494.5 441.5,493.9 440.5,490.8 439.5,491.0 438.5,491.3 437.5,494.2 436.5,493.2 435.5,491.2 434.5,493.3 433.5,493.3 432.5,491.8 431.5,490.9 430.5,490.2 429.5,490.6 428.5,492.5 427.5,490.1 426.5,493.6 425.5,493.2 424.5,492.6 423.5,493.7 422.5,490.8 421.5,491.6 420.5,490.4 419.5,492.4 418.5,490.6 417.5,491.3 416.5,493.6 415.5,493.1 414.5,490.1 413.5,490.0 412.5,490.9 411.5,491.7 410.5,492.2 409.5,490.3 408.5,494.3 407.5,489.7 406.5,493.2 405.5,490.7 404.5,493.1 403.5,489.6 402.5,490.9 401.5,492.3 400.5,490.6 399.5,493.9 398.5,492.6 397.5,490.8 396.5,493.4 395.5,494.4 394.5,492.7 393.5,493.7 392.5,494.4 391.5,490.3 390.5,489.6 389.5,490.4 388.5,493.1 387.5,492.4 386.5,492.4 385.5,491.6 384.5,490.2 383.5,490.8 382.5,490.6 381.5,493.3 380.5,491.3 379.5,490.7 378.5,494.3 377.5,490.5 376.5,491.6 375.5,493.4 374.5,490.4 373.5,493.0 372.5,491.8 371.5,493.5 370.5,491.8 369.5,493.2 368.5,492.8 367.5,491.3 366.5,490.7 365.5,490.4 364.5,493.9 363.5,490.4 362.5,493.9 361.5,492.4 360.5,490.6 359.5,492.0 358.5,493.5 357.5,492.1 356.5,493.8 355.5,490.9 354.5,489.5 353.5,494.0 352.5,491.4 351.5,490.7 350.5,493.7 349.5,493.8 348.5,491.6 347.5,490.2 346.5,489.7 345.5,492.3 344.5,490.1 343.5,494.2 342.5,490.6 341.5,492.9 340.5,491.6 339.5,492.4 338.5,493.5 337.5,491.2 336.5,492.7 335.5,491.4 334.5,494.1 333.5,491.6 332.5,490.3 331.5,490.4 330.5,494.3 329.5,494.1 328.5,491.7 327.5,494.1 326.5,492.7 325.5,494.0 324.5,493.0 323.5,490.0 322.5,489.5 321.5,489.7 320.5,492.3 319.5,490.2 318.5,491.1 317.5,493.0 316.5,493.3 315.5,492.5 314.5,491.8 313.5,491.9 312.5,491.6 311.5,491.8 310.5,489.3 309.5,491.7 308.5,489.8 307.5,492.6 306.5,490.8 305.5,489.6 304.5,491.5 303.5,490.6 302.5,490.3 301.5,490.1 300.5,491.8 299.5,489.8 298.5,494.0 297.5,492.0 296.5,490.3 295.5,492.0 294.5,491.5 293.5,489.5 292.5,491.4 291.5,490.1 290.5,489.8 289.5,492.7 288.5,489.8 287.5,489.3 286.5,493.3 285.5,489.4 284.5,491.5 283.5,491.0 282.5,490.2 281.5,490.3 280.5,491.0 279.5,493.1 278.5,489.7 277.5,491.0 276.5,493.1 275.5,492.7 274.5,493.9 273.5,493.4 272.5,489.4 271.5,492.0 270.5,491.0 269.5,489.6 268.5,490.0 267.5,492.0 266.5,489.9 265.5,490.0 264.5,490.5 263.5,493.1 262.5,490.2 261.5,489.2 260.5,490.8 259.5,489.5 258.5,491.3 257.5,491.1 256.5,489.6 255.5,492.9 254.5,492.5 253.5,491.5 252.5,489.8 251.5,489.1 250.5,489.4 249.5,492.5 248.5,492.3 247.5,492.2 246.5,490.3 245.5,492.5 244.5,490.3 243.5,492.8 242.5,492.5 241.5,491.2 240.5,494.0 239.5,490.3 238.5,493.5 237.5,490.1 236.5,493.9 235.5,493.6 234.5,493.8 233.5,492.3 232.5,489.9 231.5,491.8 230.5,492.2 229.5,493.2 228.5,491.8 227.5,493.6 226.5,493.0 225.5,493.8 224.5,490.3 223.5,491.2 222.5,490.6 221.5,494.2 220.5,493.0 219.5,492.5 218.5,491.5 217.5,490.9 216.5,490.8 215.5,492.8 214.5,494.0 213.5,493.7 212.5,493.6 211.5,489.5 210.5,493.5 209.5,493.3 208.5,493.9 207.5,492.4 206.5,491.7 205.5,492.4 204.5,490.0 203.5,489.4 202.5,494.3 201.5,490.2 200.5,491.0 199.5,490.0 198.5,493.7 197.5,489.9 196.5,492.2 195.5,490.0 194.5,490.5 193.5,490.1 192.5,493.6 191.5,489.7 190.5,489.6 189.5,491.0 188.5,489.8 187.5,493.6 186.5,492.7 185.5,493.7 184.5,493.9 183.5,494.2 182.5,493.6 181.5,492.2 180.5,493.7 179.5,493.2 178.5,490.2 177.5,489.8 176.5,491.0 175.5,492.9 174.5,493.1 173.5,494.4 172.5,490.0 171.5,493.8 170.5,490.2 169.5,493.5 168.5,493.9 167.5,491.8 166.5,494.8 165.5,490.1 164.5,494.4 163.5,492.2 162.5,493.1 161.5,493.4 160.5,491.9 159.5,490.2 158.5,490.2 157.5,493.5 156.5,492.9 155.5,490.9 154.5,492.9 153.5,491.9 152.5,491.2 151.5,493.2 150.5,494.4 149.5,491.7 148.5,493.0 147.5,490.7 146.5,494.6 145.5,490.9 144.5,494.0 143.5,491.4 142.5,495.7 141.5,493.6 140.5,494.1 139.5,496.8 138.5,496.8 137.5,493.8 136.5,495.2 135.5,493.4 134.5,497.2 133.5,497.3 132.5,498.5 131.5,497.6 130.5,494.4 129.5,496.4 128.5,498.8 127.5,495.4 126.5,496.2 125.5,498.1 124.5,496.9 123.5,498.5 122.5,499.8 121.5,496.7 120.5,499.5 119.5,500.7 118.5,500.0 117.5,500.0 116.5,498.0 115.5,500.4 114.5,499.4 113.5,501.4 112.5,499.6 111.5,499.6 110.5,501.4 109.5,503.0 108.5,500.7 107.5,500.9 106.5,502.6 105.5,505.5 104.5,506.2 103.5,505.3 102.5,504.8 101.5,506.9 100.5,504.1 99.5,507.1 98.5,509.5 97.5,509.4 96.5,511.9 95.5,512.8 94.5,512.7 93.5,512.6 92.5,513.1 91.5,517.2 90.5,518.2 89.5,517.4 88.5,517.6 87.5,520.5 86.5,520.0 85.5,519.8 84.5,522.3 83.5,526.4 82.5,523.0 81.5,524.6 80.5,528.6 79.5,525.8 78.5,529.6 77.5,531.0 76.5,532.9 75.5,533.6 74.5,534.7 73.5,533.1 72.5,534.4 71.5,535.6 70.5,536.0 69.5,535.1 68.5,535.5 67.5,537.3 66.5,535.5 65.5,535.5 64.5,538.7 63.5,537.2 62.5,539.4 61.5,537.1 60.5,537.8 59.5,539.8 58.5,538.2 57.5,539.8 56.5,541.3 55.5,538.1 54.5,540.7 53.5,540.2 52.5,539.7 51.5,538.2 50.5,541.9 49.5,540.1 48.5,537.6 47.5,538.8 46.5,539.1 45.5,542.3 44.5,539.3 43.5,541.4" fill="#bcb020"/><rect x="51.0" y="511.3" width="1" height="1.5" fill="#2a9cc8"/><rect x="55.0" y="510.8" width="1" height="1.5" fill="#2a9cc8"/><rect x="60.0" y="511.3" width="1" height="1.5" fill="#2a9cc8"/><rect x="68.0" y="507.8" width="1" height="1.5" fill="#2a9cc8"/><rect x="74.0" y="501.4" width="1" height="1.5" fill="#2a9cc8"/><rect x="79.0" y="492.5" width="1" height="1.5" fill="#2a9cc8"/><rect x="86.0" y="487.7" width="1" height="1.5" fill="#2a9cc8"/><rect x="88.0" y="483.8" width="1" height="1.5" fill="#2a9cc8"/><rect x="95.0" y="479.1" width="1" height="1.5" fill="#2a9cc8"/><rect x="96.0" y="478.4" width="1" height="1.5" fill="#2a9cc8"/><rect x="97.0" y="479.6" width="1" height="1.5" fill="#2a9cc8"/><rect x="102.0" y="476.3" width="1" height="1.5" fill="#2a9cc8"/><rect x="105.0" y="476.5" width="1" height="1.5" fill="#2a9cc8"/><rect x="111.0" y="472.3" width="1" height="1.5" fill="#2a9cc8"/><rect x="112.0" y="472.1" width="1" height="1.5" fill="#2a9cc8"/><rect x="113.0" y="471.1" width="1" height="1.5" fill="#2a9cc8"/><rect x="119.0" y="472.2" width="1" height="1.5" fill="#2a9cc8"/><rect x="125.0" y="469.0" width="1" height="1.5" fill="#2a9cc8"/><rect x="127.0" y="468.3" width="1" height="1.5" fill="#2a9cc8"/><rect x="131.0" y="468.2" width="1" height="1.5" fill="#2a9cc8"/><rect x="132.0" y="469.0" width="1" height="1.5" fill="#2a9cc8"/><rect x="137.0" y="467.9" width="1" height="1.5" fill="#2a9cc8"/><rect x="142.0" y="469.4" width="1" height="1.5" fill="#2a9cc8"/><rect x="147.0" y="468.0" width="1" height="1.5" fill="#2a9cc8"/><rect x="150.0" y="468.3" width="1" height="1.5" fill="#2a9cc8"/><rect x="151.0" y="467.8" width="1" height="1.5" fill="#2a9cc8"/><rect x="171.0" y="469.5" width="1" height="1.5" fill="#2a9cc8"/><rect x="191.0" y="469.5" width="1" height="1.5" fill="#2a9cc8"/><rect x="193.0" y="468.7" width="1" height="1.5" fill="#2a9cc8"/><rect x="204.0" y="467.9" width="1" height="1.5" fill="#2a9cc8"/><rect x="207.0" y="469.0" width="1" height="1.5" fill="#2a9cc8"/><rect x="219.0" y="471.2" width="1" height="1.5" fill="#2a9cc8"/><rect x="227.0" y="470.9" width="1" height="1.5" fill="#2a9cc8"/><rect x="228.0" y="471.0" width="1" height="1.5" fill="#2a9cc8"/><rect x="233.0" y="470.4" width="1" height="1.5" fill="#2a9cc8"/><rect x="237.0" y="469.2" width="1" height="1.5" fill="#2a9cc8"/><rect x="238.0" y="469.8" width="1" height="1.5" fill="#2a9cc8"/><rect x="247.0" y="471.9" width="1" height="1.5" fill="#2a9cc8"/><rect x="251.0" y="469.2" width="1" height="1.5" fill="#2a9cc8"/><rect x="254.0" y="472.0" width="1" height="1.5" fill="#2a9cc8"/><rect x="255.0" y="469.9" width="1" height="1.5" fill="#2a9cc8"/><rect x="260.0" y="471.9" width="1" height="1.5" fill="#2a9cc8"/><rect x="264.0" y="471.1" width="1" height="1.5" fill="#2a9cc8"/><rect x="266.0" y="471.8" width="1" height="1.5" fill="#2a9cc8"/><rect x="271.0" y="471.1" width="1" height="1.5" fill="#2a9cc8"/><rect x="276.0" y="469.5" width="1" height="1.5" fill="#2a9cc8"/><rect x="294.0" y="470.3" width="1" height="1.5" fill="#2a9cc8"/><rect x="300.0" y="472.0" width="1" height="1.5" fill="#2a9cc8"/><rect x="304.0" y="472.0" width="1" height="1.5" fill="#2a9cc8"/><rect x="312.0" y="469.3" width="1" height="1.5" fill="#2a9cc8"/><rect x="321.0" y="472.0" width="1" height="1.5" fill="#2a9cc8"/><rect x="323.0" y="470.6" width="1" height="1.5" fill="#2a9cc8"/><rect x="342.0" y="469.7" width="1" height="1.5" fill="#2a9cc8"/><rect x="348.0" y="471.1" width="1" height="1.5" fill="#2a9cc8"/><rect x="362.0" y="471.8" width="1" height="1.5" fill="#2a9cc8"/><rect x="364.0" y="469.6" width="1" height="1.5" fill="#2a9cc8"/><rect x="371.0" y="471.4" width="1" height="1.5" fill="#2a9cc8"/><rect x="374.0" y="471.4" width="1" height="1.5" fill="#2a9cc8"/><rect x="384.0" y="469.6" width="1" height="1.5" fill="#2a9cc8"/><rect x="388.0" y="470.5" width="1" height="1.5" fill="#2a9cc8"/><rect x="389.0" y="470.8" width="1" height="1.5" fill="#2a9cc8"/><rect x="396.0" y="470.1" width="1" height="1.5" fill="#2a9cc8"/><rect x="418.0" y="471.4" width="1" height="1.5" fill="#2a9cc8"/><rect x="419.0" y="472.7" width="1" height="1.5" fill="#2a9cc8"/><rect x="421.0" y="472.0" width="1" height="1.5" fill="#2a9cc8"/><rect x="434.0" y="470.3" width="1" height="1.5" fill="#2a9cc8"/><rect x="435.0" y="470.9" width="1" height="1.5" fill="#2a9cc8"/><rect x="439.0" y="472.3" width="1" height="1.5" fill="#2a9cc8"/><rect x="441.0" y="472.7" width="1" height="1.5" fill="#2a9cc8"/><rect x="443.0" y="472.8" width="1" height="1.5" fill="#2a9cc8"/><rect x="445.0" y="470.6" width="1" height="1.5" fill="#2a9cc8"/><rect x="456.0" y="472.7" width="1" height="1.5" fill="#2a9cc8"/><rect x="460.0" y="473.5" width="1" height="1.5" fill="#2a9cc8"/><rect x="478.0" y="471.5" width="1" height="1.5" fill="#2a9cc8"/><rect x="479.0" y="474.1" width="1" height="1.5" fill="#2a9cc8"/><rect x="480.0" y="472.0" width="1" height="1.5" fill="#2a9cc8"/><rect x="489.0" y="472.1" width="1" height="1.5" fill="#2a9cc8"/><rect x="499.0" y="474.1" width="1" height="1.5" fill="#2a9cc8"/><rect x="504.0" y="472.9" width="1" height="1.5" fill="#2a9cc8"/><rect x="512.0" y="473.5" width="1" height="1.5" fill="#2a9cc8"/><rect x="520.0" y="473.0" width="1" height="1.5" fill="#2a9cc8"/><rect x="521.0" y="474.3" width="1" height="1.5" fill="#2a9cc8"/><rect x="528.0" y="473.0" width="1" height="1.5" fill="#2a9cc8"/><rect x="531.0" y="474.1" width="1" height="1.5" fill="#2a9cc8"/><rect x="543.0" y="472.4" width="1" height="1.5" fill="#2a9cc8"/><rect x="553.0" y="472.5" width="1" height="1.5" fill="#2a9cc8"/><rect x="554.0" y="472.1" width="1" height="1.5" fill="#2a9cc8"/><rect x="557.0" y="474.7" width="1" height="1.5" fill="#2a9cc8"/><rect x="564.0" y="474.7" width="1" height="1.5" fill="#2a9cc8"/><rect x="576.0" y="474.3" width="1" height="1.5" fill="#2a9cc8"/><rect x="580.0" y="473.4" width="1" height="1.5" fill="#2a9cc8"/><rect x="581.0" y="475.4" width="1" height="1.5" fill="#2a9cc8"/><rect x="588.0" y="473.7" width="1" height="1.5" fill="#2a9cc8"/><rect x="592.0" y="473.4" width="1" height="1.5" fill="#2a9cc8"/><rect x="597.0" y="474.7" width="1" height="1.5" fill="#2a9cc8"/><rect x="628.0" y="477.4" width="1" height="1.5" fill="#2a9cc8"/><rect x="629.0" y="478.2" width="1" height="1.5" fill="#2a9cc8"/><rect x="631.0" y="478.0" width="1" height="1.5" fill="#2a9cc8"/><rect x="633.0" y="478.9" width="1" height="1.5" fill="#2a9cc8"/><rect x="636.0" y="482.6" width="1" height="1.5" fill="#2a9cc8"/><rect x="648.0" y="485.5" width="1" height="1.5" fill="#2a9cc8"/><rect x="654.0" y="491.5" width="1" height="1.5" fill="#2a9cc8"/><rect x="655.0" y="491.3" width="1" height="1.5" fill="#2a9cc8"/><rect x="679.0" y="508.8" width="1" height="1.5" fill="#2a9cc8"/><rect x="685.0" y="508.2" width="1" height="1.5" fill="#2a9cc8"/><rect x="690.0" y="507.2" width="1" height="1.5" fill="#2a9cc8"/><line x1="43.8" y1="405" x2="43.8" y2="520" stroke="#bcb020" stroke-width="1"/><line x1="688.5" y1="485" x2="688.5" y2="520" stroke="#bcb020" stroke-width="1"/></g></svg>
<span style="left:14px;top:342.9px;line-height:12px;font-size:8px;color:#d8d8d8;letter-spacing:0px;transform:scaleX(0.87);transform-origin:0 50%;">dBV&#772;</span>
<span style="left:2px;top:356.4px;line-height:12px;font-size:8px;color:#e0e0e0;letter-spacing:0px;transform:scaleX(0.87);transform-origin:0 50%;">40</span>
<span style="left:2px;top:382.12px;line-height:12px;font-size:8px;color:#e0e0e0;letter-spacing:0px;transform:scaleX(0.87);transform-origin:0 50%;">20</span>
<span style="left:2px;top:407.84px;line-height:12px;font-size:8px;color:#e0e0e0;letter-spacing:0px;transform:scaleX(0.87);transform-origin:0 50%;">0</span>
<span style="left:2px;top:433.55999999999995px;line-height:12px;font-size:8px;color:#e0e0e0;letter-spacing:0px;transform:scaleX(0.87);transform-origin:0 50%;">-20</span>
<span style="left:2px;top:459.28px;line-height:12px;font-size:8px;color:#e0e0e0;letter-spacing:0px;transform:scaleX(0.87);transform-origin:0 50%;">-40</span>
<span style="left:2px;top:485.0px;line-height:12px;font-size:8px;color:#e0e0e0;letter-spacing:0px;transform:scaleX(0.87);transform-origin:0 50%;">-60</span>
<span style="left:2px;top:510.72px;line-height:12px;font-size:8px;color:#e0e0e0;letter-spacing:0px;transform:scaleX(0.87);transform-origin:0 50%;">-80</span>
<span style="left:2px;top:536.4399999999999px;line-height:12px;font-size:8px;color:#e0e0e0;letter-spacing:0px;transform:scaleX(0.87);transform-origin:0 50%;">-100</span>
<span style="left:2px;top:562.16px;line-height:12px;font-size:8px;color:#e0e0e0;letter-spacing:0px;transform:scaleX(0.87);transform-origin:0 50%;">-120</span>
<span style="left:2px;top:587.88px;line-height:12px;font-size:8px;color:#e0e0e0;letter-spacing:0px;transform:scaleX(0.87);transform-origin:0 50%;">-140</span>
<span style="left:2px;top:613.5999999999999px;line-height:12px;font-size:8px;color:#e0e0e0;letter-spacing:0px;transform:scaleX(0.87);transform-origin:0 50%;">-160</span>
<span style="left:32px;top:627.5px;line-height:12px;font-size:8px;color:#e0e0e0;letter-spacing:0px;transform:scaleX(0.87);transform-origin:0 50%;">0 kHz</span>
<span style="left:160px;top:627.5px;line-height:12px;font-size:8px;color:#e0e0e0;letter-spacing:0px;transform:scaleX(0.87);transform-origin:0 50%;">59.952 kHz</span>
<span style="left:288.6px;top:627.5px;line-height:12px;font-size:8px;color:#e0e0e0;letter-spacing:0px;transform:scaleX(0.87);transform-origin:0 50%;">119.904 kHz</span>
<span style="left:416.5px;top:627.5px;line-height:12px;font-size:8px;color:#e0e0e0;letter-spacing:0px;transform:scaleX(0.87);transform-origin:0 50%;">179.856 kHz</span>
<span style="left:546px;top:627.5px;line-height:12px;font-size:8px;color:#e0e0e0;letter-spacing:0px;transform:scaleX(0.87);transform-origin:0 50%;">239.808 kHz</span>
<span style="left:672px;top:627.5px;line-height:12px;font-size:8px;color:#e0e0e0;letter-spacing:0px;transform:scaleX(0.87);transform-origin:0 50%;">299.76 kHz</span>
<div style="left:635px;top:350px;width:13.5px;height:3.5px;background:#7a7a7a;"></div>
<div style="left:656px;top:350px;width:13.5px;height:3.5px;background:#7a7a7a;"></div>
<svg style="left:635.5px;top:341.5px;" width="14" height="9" viewBox="0 0 14 9"><polygon points="0.8,0.8 6.8,2.2 2.2,6.8" fill="#1e80f0"/><path d="M3.5,3.5 L10.5,8.5" stroke="#1e80f0" stroke-width="1.5"/></svg>
<svg style="left:656px;top:341px;" width="14" height="9" viewBox="0 0 14 9"><path d="M1.5,0.5 V8 M1.5,4.5 H12" stroke="#2a86f0" stroke-width="1.3" fill="none"/></svg>
<div style="left:674.3px;top:339.6px;width:20.100000000000023px;height:17.899999999999977px;background:#e0e0e0;"></div>
<svg style="left:676.5px;top:341px;" width="16" height="16" viewBox="0 0 16 16"><defs><linearGradient id="gg11" x1="0" y1="0" x2="1" y2="1"><stop offset="0" stop-color="#f6f8fa"/><stop offset="0.55" stop-color="#d4dae0"/><stop offset="1" stop-color="#8a96a2"/></linearGradient></defs><polygon points="15.80,8.77 15.50,10.28 13.22,10.79 12.58,11.76 12.97,14.06 11.70,14.91 9.72,13.67 8.58,13.89 7.23,15.80 5.72,15.50 5.21,13.22 4.24,12.58 1.94,12.97 1.09,11.70 2.33,9.72 2.11,8.58 0.20,7.23 0.50,5.72 2.78,5.21 3.42,4.24 3.03,1.94 4.30,1.09 6.28,2.33 7.42,2.11 8.77,0.20 10.28,0.50 10.79,2.78 11.76,3.42 14.06,3.03 14.91,4.30 13.67,6.28 13.89,7.42" fill="url(#gg11)" stroke="#74808c" stroke-width="0.88" stroke-linejoin="round"/><circle cx="7.52" cy="8.00" r="3.20" fill="#46525e"/><circle cx="9.12" cy="7.36" r="2.40" fill="#dfe4e9"/></svg>
<div style="left:696px;top:339.6px;width:20px;height:17.899999999999977px;background:#e0e0e0;"></div>
<span style="left:606.0px;width:200px;text-align:center;top:343.3px;line-height:12px;font-size:9px;color:#111;letter-spacing:0px;transform:scaleX(0.87);transform-origin:50% 50%;font-weight:bold;">Y</span>
<div style="left:1px;top:623.8px;width:30px;height:18.600000000000023px;background:#e8e8e8;"></div>
<div style="left:19px;top:623.8px;width:1px;height:18.600000000000023px;background:#cfcfcf;"></div>
<span style="left:-90.0px;width:200px;text-align:center;top:627.7px;line-height:12px;font-size:9px;color:#111;letter-spacing:0px;transform:scaleX(0.87);transform-origin:50% 50%;">X</span>
<svg style="left:22px;top:632px;" width="6" height="4" viewBox="0 0 6 4"><polygon points="0,0 6,0 3.0,3.5" fill="#000"/></svg>
<div style="left:0px;top:643.5px;width:717px;height:11.5px;background:#f0f0f0;"></div>
<div style="left:1px;top:643.5px;width:60.3px;height:11.0px;background:#e6e6e6;box-sizing:border-box;border:1px solid #d8d8d8;border-top:none;"></div>
<span style="left:-69.0px;width:200px;text-align:center;top:643.5px;line-height:12px;font-size:8px;color:#222;letter-spacing:0px;transform:scaleX(0.87);transform-origin:50% 50%;">Spectrogram</span>
<div style="left:62.5px;top:643.5px;width:35.5px;height:11.5px;background:#fff;"></div>
<span style="left:-19.700000000000003px;width:200px;text-align:center;top:643.7px;line-height:12px;font-size:8.5px;color:#111;letter-spacing:0px;transform:scaleX(0.87);transform-origin:50% 50%;">FFT</span>
<div style="left:0px;top:655px;width:913px;height:16px;background:#f0f0f0;border-top:1px solid #e2e2e2;"></div>
<div style="left:560.8px;top:660.2px;width:55.80000000000007px;height:9.299999999999955px;background:#e6e6e6;box-sizing:border-box;border:1px solid #c0c0c0;"></div>
<span style="left:488.70000000000005px;width:200px;text-align:center;top:659.5px;line-height:12px;font-size:8px;color:#111;letter-spacing:0px;transform:scaleX(0.87);transform-origin:50% 50%;">Manual Trigger</span>
<div style="left:622px;top:660.2px;width:127.79999999999995px;height:9.299999999999955px;background:#e6e6e6;box-sizing:border-box;border:1px solid #c0c0c0;"></div>
<span style="left:585.9px;width:200px;text-align:center;top:659.5px;line-height:12px;font-size:8px;color:#111;letter-spacing:0px;transform:scaleX(0.87);transform-origin:50% 50%;">ADP5250-323EF13 SN:323EF13 USB</span>
<div style="left:754.7px;top:660.2px;width:55.19999999999993px;height:9.299999999999955px;background:#e6e6e6;box-sizing:border-box;border:1px solid #c0c0c0;"></div>
<span style="left:682.3px;width:200px;text-align:center;top:659.5px;line-height:12px;font-size:8px;color:#111;letter-spacing:0px;transform:scaleX(0.87);transform-origin:50% 50%;"></span>
<svg style="left:757px;top:662px;" width="12" height="6" viewBox="0 0 12 6"><path d="M0.5,5.5 L3,0.5 H11.5 L9,5.5 Z" fill="#ddd" stroke="#888" stroke-width="0.8"/></svg>
<span style="left:768.5px;top:659.5px;line-height:12px;font-size:8px;color:#111;letter-spacing:0px;transform:scaleX(0.87);transform-origin:0 50%;">WF3.18.1</span>
<div style="left:815.4px;top:660.2px;width:84.20000000000005px;height:9.299999999999955px;background:#e6e6e6;box-sizing:border-box;border:1px solid #c0c0c0;"></div>
<span style="left:757.5px;width:200px;text-align:center;top:659.5px;line-height:12px;font-size:8px;color:#111;letter-spacing:0px;transform:scaleX(0.87);transform-origin:50% 50%;">Status: OK</span>
<svg style="left:889.5px;top:663.8px;" width="7" height="4" viewBox="0 0 7 4"><polygon points="0,0 7,0 3.5,3.5" fill="#000"/></svg>
<svg style="left:901px;top:659px;" width="11" height="11" viewBox="0 0 11 11"><g fill="#bbb"><rect x="8" y="2" width="1.5" height="1.5"/><rect x="5" y="5" width="1.5" height="1.5"/><rect x="8" y="5" width="1.5" height="1.5"/><rect x="2" y="8" width="1.5" height="1.5"/><rect x="5" y="8" width="1.5" height="1.5"/><rect x="8" y="8" width="1.5" height="1.5"/></g></svg>
</body></html>
